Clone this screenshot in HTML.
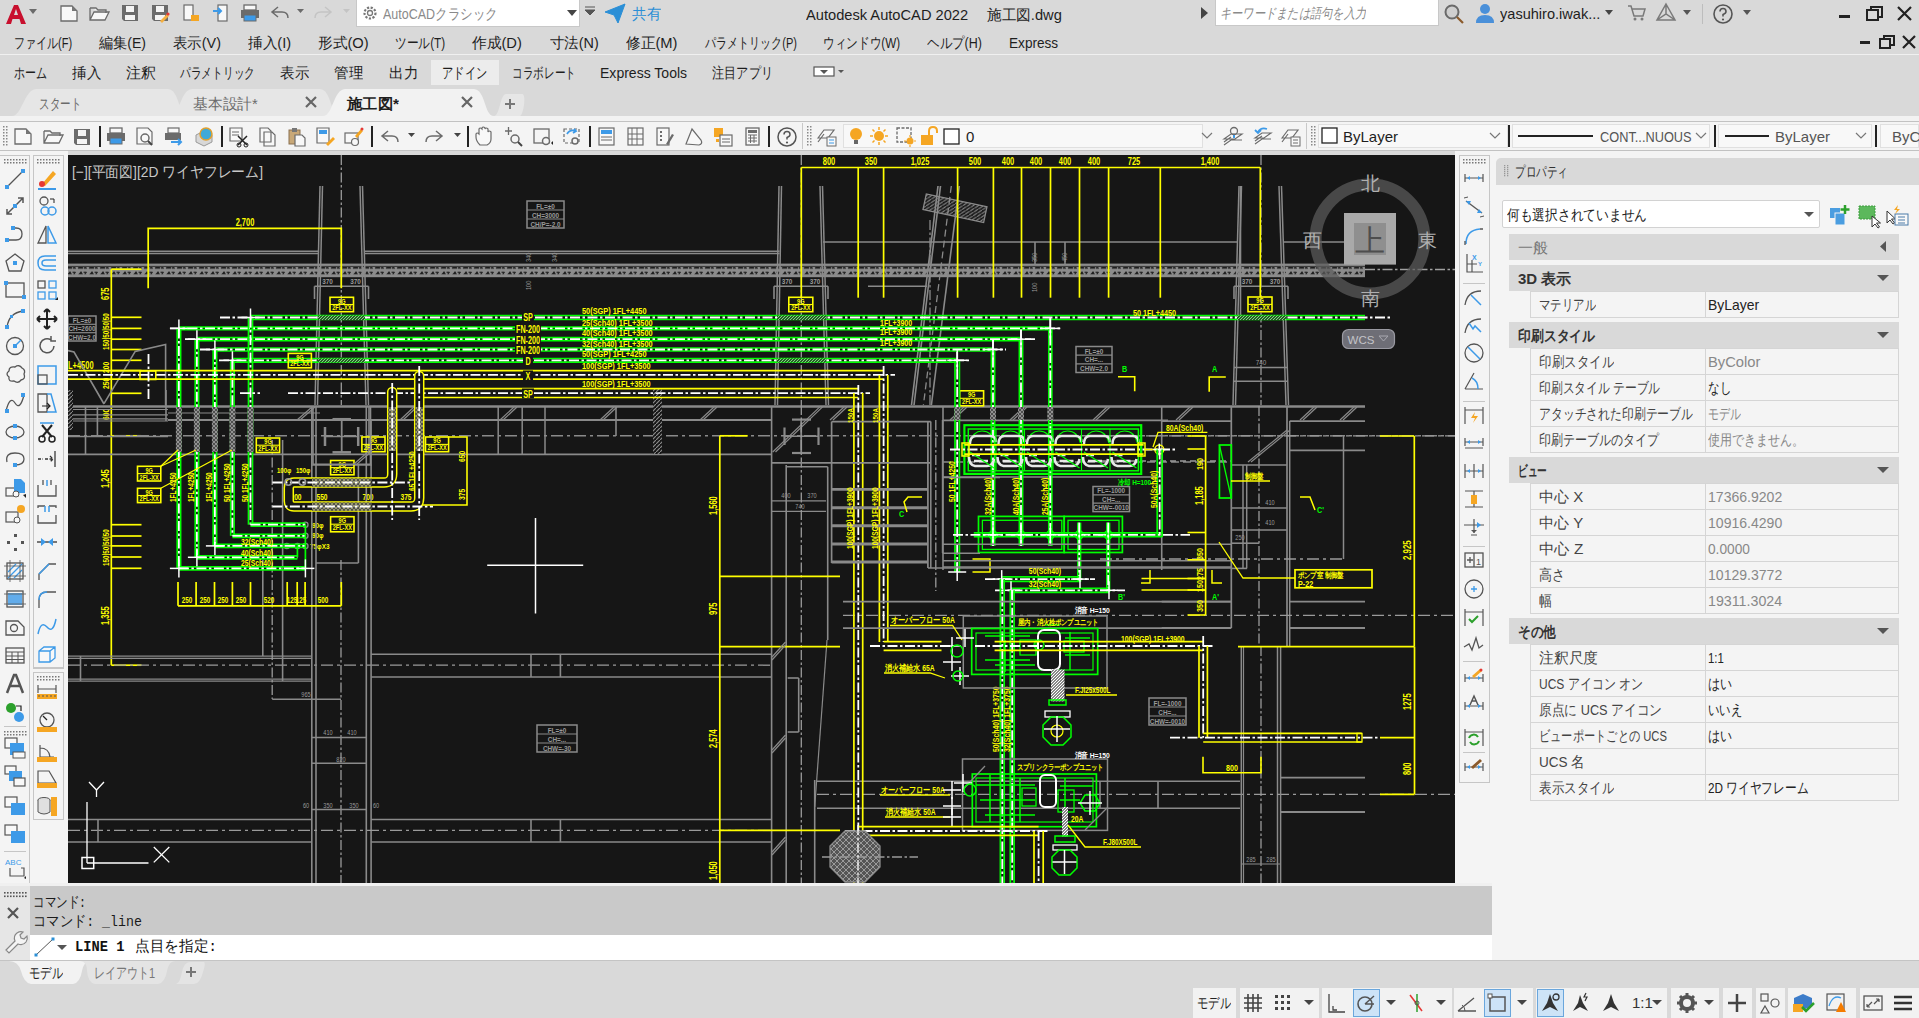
<!DOCTYPE html>
<html><head><meta charset="utf-8">
<style>
*{box-sizing:border-box;margin:0;padding:0}
html,body{width:1919px;height:1018px;overflow:hidden;background:#d9d9d9;font-family:"Liberation Sans",sans-serif;color:#1e1e1e}
.a{position:absolute}
.t{position:absolute;white-space:nowrap;font-size:14px;line-height:16px}
.ft{display:inline-block;transform-origin:0 50%;white-space:nowrap}
svg.i{position:absolute;overflow:visible}
</style></head><body>
<div class="a" style="left:0px;top:0px;width:1919px;height:1018px;background:#d9d9d9;"></div>
<div class="a" style="left:0px;top:54px;width:1919px;height:1px;background:#f0f0f0;"></div>
<div class="a" style="left:0px;top:116px;width:1919px;height:5px;background:#f2f2f2;"></div>
<div class="a" style="left:0px;top:121px;width:1919px;height:30px;background:#f4f4f4;border-top:1px solid #c2c2c2;border-bottom:1px solid #c2c2c2;"></div>
<div class="a" style="left:0px;top:151px;width:68px;height:732px;background:#f4f4f4;"></div>
<div class="a" style="left:0px;top:155px;width:30px;height:728px;border-right:1px solid #c6c6c6;border-top:1px solid #c6c6c6;"></div>
<div class="a" style="left:33px;top:155px;width:31px;height:513px;border:1px solid #c6c6c6;"></div>
<div class="a" style="left:33px;top:672px;width:31px;height:148px;border:1px solid #c6c6c6;"></div>
<div class="a" style="left:1455px;top:151px;width:464px;height:810px;background:#f4f4f4;"></div>
<div class="a" style="left:1459px;top:155px;width:31px;height:628px;border:1px solid #c6c6c6;"></div>
<div class="a" style="left:1496px;top:158px;width:423px;height:27px;background:#d9d9d9;border-radius:5px 0 0 0;"></div>
<div class="a" style="left:0px;top:883px;width:1492px;height:78px;background:#f0f0f0;"></div>
<div class="a" style="left:0px;top:886px;width:30px;height:75px;background:#e6e6e6;"></div>
<div class="a" style="left:30px;top:886px;width:1462px;height:49px;background:#c9c9c9;"></div>
<div class="a" style="left:30px;top:935px;width:1462px;height:25px;background:#ffffff;"></div>
<div class="a" style="left:0px;top:960px;width:1919px;height:1px;background:#c4c4c4;"></div>
<div class="a" style="left:0px;top:961px;width:1919px;height:57px;background:#d9d9d9;"></div>
<svg class="i" style="left:4px;top:3px" width="24" height="22" viewBox="0 0 24 22"><path d="M2,21 L10,2 L14,2 L22,21 L17,21 L15.5,16 L8.5,16 L7,21 Z M10,12 L14,12 L12,6 Z" fill="#c8102e"/></svg>
<svg class="i" style="left:29px;top:9px" width="9" height="6" viewBox="0 0 9 6"><path d="M0,0 h8 l-4,5z" fill="#6b6b6b"/></svg>
<svg class="i" style="left:59px;top:3px" width="20" height="20" viewBox="0 0 20 20"><path d="M2,3 h11 l5,5 v10 h-16z" fill="#f8f8f8" stroke="#6b6b6b" stroke-width="1.3"/><path d="M13,3 v5 h5" fill="#777"/></svg>
<svg class="i" style="left:88px;top:3px" width="22" height="20" viewBox="0 0 22 20"><path d="M2,5 h6 l2,2 h8 v3 M2,5 v12 h15 l4,-8 h-15 l-4,8" fill="#f8f8f8" stroke="#6b6b6b" stroke-width="1.3"/></svg>
<svg class="i" style="left:120px;top:3px" width="20" height="20" viewBox="0 0 20 20"><path d="M2,2 h16 v16 h-14 l-2,-2z" fill="#6b6b6b"/><rect x="6" y="3" width="8" height="6" fill="#f4f4f4"/><rect x="5" y="12" width="10" height="5" fill="#f4f4f4"/></svg>
<svg class="i" style="left:150px;top:3px" width="20" height="20" viewBox="0 0 20 20"><path d="M2,2 h16 v16 h-14 l-2,-2z" fill="#6b6b6b"/><rect x="6" y="3" width="8" height="6" fill="#f4f4f4"/><rect x="5" y="12" width="10" height="5" fill="#f4f4f4"/><path d="M10,18 l7,-7 l2,2 l-7,7z" fill="#f5b041"/><circle cx="18" cy="11" r="1.6" fill="#e53935"/></svg>
<svg class="i" style="left:181px;top:3px" width="20" height="20" viewBox="0 0 20 20"><rect x="3" y="2" width="9" height="15" fill="#f8f8f8" stroke="#6b6b6b" stroke-width="1.2"/><path d="M10,12 h8 v6 h-8z" fill="#f5a623"/></svg>
<svg class="i" style="left:211px;top:3px" width="20" height="20" viewBox="0 0 20 20"><rect x="7" y="2" width="9" height="16" fill="#f8f8f8" stroke="#6b6b6b" stroke-width="1.2"/><path d="M2,8 h8 M7,5 l3,3 l-3,3" fill="none" stroke="#3d9ae8" stroke-width="2"/></svg>
<svg class="i" style="left:239px;top:3px" width="22" height="20" viewBox="0 0 22 20"><rect x="5" y="2" width="12" height="5" fill="#f8f8f8" stroke="#6b6b6b" stroke-width="1.3"/><rect x="2" y="7" width="18" height="8" fill="#6b6b6b"/><rect x="5" y="12" width="12" height="6" fill="#3d9ae8" stroke="#6b6b6b" stroke-width="1"/></svg>
<svg class="i" style="left:270px;top:4px" width="20" height="16" viewBox="0 0 20 16"><path d="M8,3 L2,8 L8,13 M2,8 h10 q6,0 6,6" fill="none" stroke="#6b6b6b" stroke-width="1.5"/></svg>
<svg class="i" style="left:297px;top:9px" width="8" height="6" viewBox="0 0 8 6"><path d="M0,0 h7 l-3.5,4z" fill="#6b6b6b"/></svg>
<svg class="i" style="left:313px;top:4px" width="20" height="16" viewBox="0 0 20 16"><path d="M12,3 L18,8 L12,13 M18,8 h-10 q-6,0 -6,6" fill="none" stroke="#c4c4c4" stroke-width="1.5"/></svg>
<svg class="i" style="left:343px;top:9px" width="8" height="6" viewBox="0 0 8 6"><path d="M0,0 h7 l-3.5,4z" fill="#c4c4c4"/></svg>
<div class="a" style="left:356px;top:0px;width:224px;height:27px;background:#ffffff;border:1px solid #c8c8c8;border-top:none;"></div>
<svg class="i" style="left:361px;top:4px" width="18" height="18" viewBox="0 0 18 18"><circle cx="9" cy="9" r="5.5" fill="none" stroke="#777" stroke-width="2.2" stroke-dasharray="2.2 1.5"/><circle cx="9" cy="9" r="2.5" fill="none" stroke="#777" stroke-width="1.3"/></svg>
<div class="t" style="left:383px;top:5px;font-size:15px;line-height:17px;color:#8a8a8a;"><span class="ft" style="--w:115;transform:scaleX(0.833333)">AutoCADクラシック</span></div>
<svg class="i" style="left:567px;top:10px" width="11" height="7" viewBox="0 0 11 7"><path d="M0,0 h10 l-5,6z" fill="#444"/></svg>
<svg class="i" style="left:585px;top:6px" width="11" height="11" viewBox="0 0 11 11"><path d="M0,1 h10 M0,4 h10 l-5,5z" fill="#555" stroke="#555" stroke-width="1"/></svg>
<svg class="i" style="left:604px;top:3px" width="22" height="20" viewBox="0 0 22 20"><path d="M1,9 L21,1 L14,20 L10,12z M10,12 L21,1" fill="#2b8fd6" stroke="#2b8fd6" stroke-width="1"/></svg>
<div class="t" style="left:632px;top:5px;font-size:15px;line-height:17px;color:#2b8fd6;"><span class="ft" style="--w:29;transform:scaleX(0.966667)">共有</span></div>
<div class="t" style="left:806px;top:6px;font-size:15px;line-height:17px;color:#1e1e1e;"><span class="ft" style="--w:256;transform:scaleX(0.977099)">Autodesk AutoCAD 2022　 施工図.dwg</span></div>
<svg class="i" style="left:1201px;top:7px" width="8" height="12" viewBox="0 0 8 12"><path d="M0,0 l7,6 l-7,6z" fill="#444"/></svg>
<div class="a" style="left:1215px;top:0px;width:224px;height:26px;background:#ffffff;border:1px solid #c8c8c8;border-top:none;"></div>
<div class="t" style="left:1220px;top:5px;font-size:14px;line-height:16px;color:#8a8a8a;font-style:italic;"><span class="ft" style="--w:146;transform:scaleX(0.802198)">キーワードまたは語句を入力</span></div>
<svg class="i" style="left:1443px;top:3px" width="22" height="22" viewBox="0 0 22 22"><circle cx="9" cy="9" r="6.5" fill="#cfcfcf" stroke="#6a6a6a" stroke-width="2"/><path d="M14,14 l6,6" stroke="#8b5a2b" stroke-width="2.2"/></svg>
<svg class="i" style="left:1474px;top:2px" width="22" height="22" viewBox="0 0 22 22"><circle cx="11" cy="7" r="5" fill="#4a90d9"/><path d="M2,21 q0,-8 9,-8 q9,0 9,8z" fill="#4a90d9"/></svg>
<div class="t" style="left:1500px;top:5px;font-size:15px;line-height:17px;color:#1e1e1e;"><span class="ft" style="--w:100;transform:scaleX(0.970874)">yasuhiro.iwak...</span></div>
<svg class="i" style="left:1605px;top:10px" width="9" height="6" viewBox="0 0 9 6"><path d="M0,0 h8 l-4,5z" fill="#444"/></svg>
<svg class="i" style="left:1627px;top:4px" width="20" height="18" viewBox="0 0 20 18"><path d="M1,2 h3 l3,10 h9 l2,-7 h-13" fill="none" stroke="#7a7a7a" stroke-width="1.5"/><circle cx="8" cy="15" r="1.5" fill="#7a7a7a"/><circle cx="15" cy="15" r="1.5" fill="#7a7a7a"/></svg>
<svg class="i" style="left:1655px;top:2px" width="22" height="22" viewBox="0 0 22 22"><path d="M11,2 L20,18 H2z M11,2 v10 M2,18 l9,-6 l9,6" fill="none" stroke="#7a7a7a" stroke-width="1.5"/></svg>
<svg class="i" style="left:1683px;top:10px" width="9" height="6" viewBox="0 0 9 6"><path d="M0,0 h8 l-4,5z" fill="#555"/></svg>
<div class="a" style="left:1702px;top:4px;width:1px;height:20px;background:#bdbdbd;"></div>
<svg class="i" style="left:1712px;top:3px" width="22" height="22" viewBox="0 0 22 22"><circle cx="11" cy="11" r="9" fill="none" stroke="#555" stroke-width="1.6"/><path d="M8,8.5 q0,-3 3,-3 q3,0 3,3 q0,2 -3,3 v2" fill="none" stroke="#555" stroke-width="1.6"/><circle cx="11" cy="16.5" r="1.1" fill="#555"/></svg>
<svg class="i" style="left:1743px;top:10px" width="9" height="6" viewBox="0 0 9 6"><path d="M0,0 h8 l-4,5z" fill="#555"/></svg>
<svg class="i" style="left:1838px;top:12px" width="14" height="6" viewBox="0 0 14 6"><rect x="1" y="3" width="11" height="3" fill="#222"/></svg>
<svg class="i" style="left:1866px;top:5px" width="18" height="16" viewBox="0 0 18 16"><rect x="1" y="5" width="11" height="10" fill="none" stroke="#222" stroke-width="2"/><path d="M5,5 v-3 h11 v10 h-4" fill="none" stroke="#222" stroke-width="2"/></svg>
<svg class="i" style="left:1896px;top:5px" width="17" height="17" viewBox="0 0 17 17"><path d="M2,2 L15,15 M15,2 L2,15" stroke="#222" stroke-width="2.2"/></svg>
<div class="t" style="left:14px;top:34px;font-size:15px;line-height:17px;color:#1e1e1e;"><span class="ft" style="--w:58;transform:scaleX(0.734177)">ファイル(F)</span></div>
<div class="t" style="left:99px;top:34px;font-size:15px;line-height:17px;color:#1e1e1e;"><span class="ft" style="--w:47;transform:scaleX(0.94)">編集(E)</span></div>
<div class="t" style="left:173px;top:34px;font-size:15px;line-height:17px;color:#1e1e1e;"><span class="ft" style="--w:48;transform:scaleX(0.96)">表示(V)</span></div>
<div class="t" style="left:248px;top:34px;font-size:15px;line-height:17px;color:#1e1e1e;"><span class="ft" style="--w:43;transform:scaleX(0.977273)">挿入(I)</span></div>
<div class="t" style="left:318px;top:34px;font-size:15px;line-height:17px;color:#1e1e1e;"><span class="ft" style="--w:51;transform:scaleX(0.980769)">形式(O)</span></div>
<div class="t" style="left:395px;top:34px;font-size:15px;line-height:17px;color:#1e1e1e;"><span class="ft" style="--w:50;transform:scaleX(0.78125)">ツール(T)</span></div>
<div class="t" style="left:472px;top:34px;font-size:15px;line-height:17px;color:#1e1e1e;"><span class="ft" style="--w:50;transform:scaleX(0.980392)">作成(D)</span></div>
<div class="t" style="left:550px;top:34px;font-size:15px;line-height:17px;color:#1e1e1e;"><span class="ft" style="--w:49;transform:scaleX(0.960784)">寸法(N)</span></div>
<div class="t" style="left:626px;top:34px;font-size:15px;line-height:17px;color:#1e1e1e;"><span class="ft" style="--w:52;transform:scaleX(0.981132)">修正(M)</span></div>
<div class="t" style="left:705px;top:34px;font-size:15px;line-height:17px;color:#1e1e1e;"><span class="ft" style="--w:92;transform:scaleX(0.736)">パラメトリック(P)</span></div>
<div class="t" style="left:823px;top:34px;font-size:15px;line-height:17px;color:#1e1e1e;"><span class="ft" style="--w:77;transform:scaleX(0.777778)">ウィンドウ(W)</span></div>
<div class="t" style="left:927px;top:34px;font-size:15px;line-height:17px;color:#1e1e1e;"><span class="ft" style="--w:55;transform:scaleX(0.833333)">ヘルプ(H)</span></div>
<div class="t" style="left:1009px;top:34px;font-size:15px;line-height:17px;color:#1e1e1e;"><span class="ft" style="--w:49;transform:scaleX(0.907407)">Express</span></div>
<svg class="i" style="left:1859px;top:39px" width="13" height="6" viewBox="0 0 13 6"><rect x="1" y="2" width="10" height="3" fill="#222"/></svg>
<svg class="i" style="left:1879px;top:34px" width="17" height="15" viewBox="0 0 17 15"><rect x="1" y="5" width="10" height="9" fill="none" stroke="#222" stroke-width="2"/><path d="M5,5 v-3 h10 v9 h-4" fill="none" stroke="#222" stroke-width="2"/></svg>
<svg class="i" style="left:1901px;top:34px" width="16" height="15" viewBox="0 0 16 15"><path d="M2,2 L14,14 M14,2 L2,14" stroke="#222" stroke-width="2.2"/></svg>
<div class="a" style="left:431px;top:60px;width:68px;height:25px;background:#ececec;"></div>
<div class="t" style="left:14px;top:64px;font-size:15px;line-height:17px;color:#1e1e1e;"><span class="ft" style="--w:33;transform:scaleX(0.733333)">ホーム</span></div>
<div class="t" style="left:72px;top:64px;font-size:15px;line-height:17px;color:#1e1e1e;"><span class="ft" style="--w:29;transform:scaleX(0.966667)">挿入</span></div>
<div class="t" style="left:126px;top:64px;font-size:15px;line-height:17px;color:#1e1e1e;"><span class="ft" style="--w:30;transform:scaleX(1)">注釈</span></div>
<div class="t" style="left:180px;top:64px;font-size:15px;line-height:17px;color:#1e1e1e;"><span class="ft" style="--w:75;transform:scaleX(0.714286)">パラメトリック</span></div>
<div class="t" style="left:280px;top:64px;font-size:15px;line-height:17px;color:#1e1e1e;"><span class="ft" style="--w:29;transform:scaleX(0.966667)">表示</span></div>
<div class="t" style="left:334px;top:64px;font-size:15px;line-height:17px;color:#1e1e1e;"><span class="ft" style="--w:29;transform:scaleX(0.966667)">管理</span></div>
<div class="t" style="left:389px;top:64px;font-size:15px;line-height:17px;color:#1e1e1e;"><span class="ft" style="--w:29;transform:scaleX(0.966667)">出力</span></div>
<div class="t" style="left:442px;top:64px;font-size:15px;line-height:17px;color:#1e1e1e;"><span class="ft" style="--w:45;transform:scaleX(0.75)">アドイン</span></div>
<div class="t" style="left:512px;top:64px;font-size:15px;line-height:17px;color:#1e1e1e;"><span class="ft" style="--w:64;transform:scaleX(0.711111)">コラボレート</span></div>
<div class="t" style="left:600px;top:64px;font-size:15px;line-height:17px;color:#1e1e1e;"><span class="ft" style="--w:87;transform:scaleX(0.935484)">Express Tools</span></div>
<div class="t" style="left:712px;top:64px;font-size:15px;line-height:17px;color:#1e1e1e;"><span class="ft" style="--w:61;transform:scaleX(0.813333)">注目アプリ</span></div>
<svg class="i" style="left:813px;top:66px" width="32" height="12" viewBox="0 0 32 12"><rect x="1" y="1" width="20" height="9" fill="#fff" stroke="#555" stroke-width="1.2"/><path d="M7,4 h8 l-4,4z" fill="#555"/><path d="M25,4 h6 l-3,3z" fill="#555"/></svg>
<svg class="i" style="left:0;top:86px" width="540" height="32" viewBox="0 86 540 32"><path d="M12,116 C22,116 24,90 36,89 L168,89 C180,90 178,116 188,116z" fill="#e6e6e6"/><path d="M170,116 C180,116 180,90 192,89 L320,89 C332,90 330,116 340,116z" fill="#e6e6e6"/><path d="M323,116 C333,116 333,90 345,89 L474,89 C486,90 484,116 494,116z" fill="#f2f2f2"/><path d="M494,116 C500,116 500,94 506,94 L522,94 C527,94 523,116 520,116z" fill="#e6e6e6"/><path d="M306,97 l10,10 M316,97 l-10,10 M462,97 l10,10 M472,97 l-10,10" stroke="#666" stroke-width="2.2"/><path d="M505,104 h10 M510,99 v10" stroke="#777" stroke-width="2"/></svg>
<div class="t" style="left:39px;top:95px;font-size:15px;line-height:17px;color:#6a6a6a;"><span class="ft" style="--w:42;transform:scaleX(0.7)">スタート</span></div>
<div class="t" style="left:193px;top:95px;font-size:15px;line-height:17px;color:#6a6a6a;"><span class="ft" style="--w:65;transform:scaleX(0.984848)">基本設計*</span></div>
<div class="t" style="left:347px;top:95px;font-size:15px;line-height:17px;color:#1e1e1e;font-weight:bold;"><span class="ft" style="--w:52;transform:scaleX(1.01961)">施工図*</span></div>
<svg class="i" style="left:3px;top:126px" width="5" height="20" viewBox="0 0 5 20"><rect x="0" y="0" width="1.5" height="1.5" fill="#888"/><rect x="3" y="0" width="1.5" height="1.5" fill="#888"/><rect x="0" y="3" width="1.5" height="1.5" fill="#888"/><rect x="3" y="3" width="1.5" height="1.5" fill="#888"/><rect x="0" y="6" width="1.5" height="1.5" fill="#888"/><rect x="3" y="6" width="1.5" height="1.5" fill="#888"/><rect x="0" y="9" width="1.5" height="1.5" fill="#888"/><rect x="3" y="9" width="1.5" height="1.5" fill="#888"/><rect x="0" y="12" width="1.5" height="1.5" fill="#888"/><rect x="3" y="12" width="1.5" height="1.5" fill="#888"/><rect x="0" y="15" width="1.5" height="1.5" fill="#888"/><rect x="3" y="15" width="1.5" height="1.5" fill="#888"/><rect x="0" y="18" width="1.5" height="1.5" fill="#888"/><rect x="3" y="18" width="1.5" height="1.5" fill="#888"/></svg>
<svg class="i" style="left:13px;top:126px" width="20" height="20" viewBox="0 0 20 20"><path d="M2,3 h11 l5,5 v10 h-16z" fill="#f8f8f8" stroke="#6b6b6b" stroke-width="1.3"/><path d="M13,3 v5 h5" fill="#777"/></svg>
<svg class="i" style="left:42px;top:126px" width="22" height="20" viewBox="0 0 22 20"><path d="M2,5 h6 l2,2 h8 v3 M2,5 v12 h15 l4,-8 h-15 l-4,8" fill="#f8f8f8" stroke="#6b6b6b" stroke-width="1.3"/></svg>
<svg class="i" style="left:72px;top:127px" width="20" height="20" viewBox="0 0 20 20"><path d="M2,2 h16 v16 h-14 l-2,-2z" fill="#6b6b6b"/><rect x="6" y="3" width="8" height="6" fill="#f4f4f4"/><rect x="5" y="12" width="10" height="5" fill="#f4f4f4"/></svg>
<div class="a" style="left:99px;top:126px;width:2px;height:21px;background:#222;"></div>
<svg class="i" style="left:105px;top:126px" width="22" height="20" viewBox="0 0 22 20"><rect x="5" y="2" width="12" height="5" fill="#f8f8f8" stroke="#6b6b6b" stroke-width="1.3"/><rect x="2" y="7" width="18" height="8" fill="#6b6b6b"/><rect x="5" y="12" width="12" height="6" fill="#3d9ae8" stroke="#6b6b6b" stroke-width="1"/></svg>
<svg class="i" style="left:135px;top:126px" width="22" height="21" viewBox="0 0 22 21"><path d="M2,2 h11 l4,4 v12 h-15z" fill="#f8f8f8" stroke="#6b6b6b" stroke-width="1.2"/><circle cx="10" cy="12" r="4" fill="none" stroke="#6b6b6b" stroke-width="1.5"/><path d="M13,15 l4,4" stroke="#444" stroke-width="2"/></svg>
<svg class="i" style="left:163px;top:126px" width="22" height="21" viewBox="0 0 22 21"><rect x="5" y="2" width="11" height="5" fill="#f8f8f8" stroke="#6b6b6b" stroke-width="1.2"/><rect x="2" y="7" width="16" height="7" fill="#6b6b6b"/><path d="M8,16 h10 M15,13 l3,3 l-3,3" fill="none" stroke="#3d9ae8" stroke-width="2"/></svg>
<svg class="i" style="left:193px;top:126px" width="22" height="21" viewBox="0 0 22 21"><path d="M3,9 l8,-4 l8,4 v7 l-8,4 l-8,-4z" fill="#d8d8d8" stroke="#999" stroke-width="1"/><circle cx="13" cy="8" r="6" fill="#3fa9d8" stroke="#e0a030" stroke-width="1.5"/></svg>
<div class="a" style="left:221px;top:126px;width:2px;height:21px;background:#222;"></div>
<svg class="i" style="left:228px;top:126px" width="22" height="21" viewBox="0 0 22 21"><path d="M2,2 h12 v13 h-12z" fill="#f8f8f8" stroke="#6b6b6b" stroke-width="1.2"/><path d="M4,6 h7 M4,9 h7" stroke="#6b6b6b"/><path d="M10,10 l9,9 M19,10 l-9,9" stroke="#222" stroke-width="1.5"/><circle cx="11" cy="19" r="2" fill="none" stroke="#222"/><circle cx="18" cy="19" r="2" fill="none" stroke="#222"/></svg>
<svg class="i" style="left:257px;top:126px" width="22" height="21" viewBox="0 0 22 21"><path d="M3,2 h8 l3,3 v11 h-11z M7,6 h8 l3,3 v11 h-11z" fill="#f8f8f8" stroke="#6b6b6b" stroke-width="1.2"/></svg>
<svg class="i" style="left:286px;top:126px" width="22" height="21" viewBox="0 0 22 21"><rect x="3" y="4" width="11" height="14" fill="#c8a878" stroke="#8a7050"/><rect x="6" y="2" width="5" height="4" fill="#777"/><path d="M9,9 h7 l3,3 v8 h-10z" fill="#f8f8f8" stroke="#6b6b6b" stroke-width="1.2"/></svg>
<svg class="i" style="left:315px;top:126px" width="22" height="21" viewBox="0 0 22 21"><path d="M2,2 h12 v15 h-12z" fill="#f8f8f8" stroke="#6b6b6b" stroke-width="1.2"/><rect x="4" y="4" width="8" height="4" fill="#3d9ae8"/><path d="M11,18 l7,-7 l2,2 l-7,7z" fill="#f5a623"/></svg>
<svg class="i" style="left:343px;top:126px" width="22" height="21" viewBox="0 0 22 21"><rect x="2" y="7" width="13" height="10" fill="#f8f8f8" stroke="#6b6b6b" stroke-width="1.2"/><circle cx="12" cy="16" r="3.5" fill="#f8f8f8" stroke="#6b6b6b" stroke-width="1.2"/><path d="M12,10 l6,-7 l2,2 l-6,7z" fill="#f5a623"/><circle cx="19" cy="3" r="1.5" fill="#e53935"/></svg>
<div class="a" style="left:371px;top:126px;width:2px;height:21px;background:#222;"></div>
<svg class="i" style="left:380px;top:128px" width="20" height="16" viewBox="0 0 20 16"><path d="M8,3 L2,8 L8,13 M2,8 h10 q6,0 6,6" fill="none" stroke="#6b6b6b" stroke-width="1.5"/></svg>
<svg class="i" style="left:408px;top:133px" width="8" height="6" viewBox="0 0 8 6"><path d="M0,0 h7 l-3.5,4z" fill="#444"/></svg>
<svg class="i" style="left:424px;top:128px" width="20" height="16" viewBox="0 0 20 16"><path d="M12,3 L18,8 L12,13 M18,8 h-10 q-6,0 -6,6" fill="none" stroke="#6b6b6b" stroke-width="1.5"/></svg>
<svg class="i" style="left:454px;top:133px" width="8" height="6" viewBox="0 0 8 6"><path d="M0,0 h7 l-3.5,4z" fill="#444"/></svg>
<div class="a" style="left:467px;top:126px;width:2px;height:21px;background:#222;"></div>
<svg class="i" style="left:474px;top:126px" width="22" height="21" viewBox="0 0 22 21"><path d="M6,19 q-4,-4 -4,-8 v-3 q1,-2 3,0 v-5 q1,-2 3,0 v-1 q1,-2 3,0 v1 q1,-2 3,0 v3 q1,-2 3,0 v7 q0,4 -4,6z" fill="#f8f8f8" stroke="#6b6b6b" stroke-width="1.2"/></svg>
<svg class="i" style="left:503px;top:126px" width="22" height="21" viewBox="0 0 22 21"><path d="M2,5 h7 M5.5,1 v8" stroke="#6b6b6b" stroke-width="1.3"/><circle cx="12" cy="13" r="4" fill="none" stroke="#6b6b6b" stroke-width="1.5"/><path d="M15,16 l4,4" stroke="#444" stroke-width="2"/></svg>
<svg class="i" style="left:532px;top:126px" width="22" height="21" viewBox="0 0 22 21"><rect x="2" y="3" width="15" height="14" fill="none" stroke="#6b6b6b" stroke-width="1.3"/><circle cx="14" cy="15" r="3.5" fill="#f4f4f4" stroke="#6b6b6b" stroke-width="1.5"/><path d="M19,17 l2,2 v-4z" fill="#222"/></svg>
<svg class="i" style="left:561px;top:126px" width="22" height="21" viewBox="0 0 22 21"><rect x="3" y="3" width="15" height="14" fill="none" stroke="#6b6b6b" stroke-width="1.2" stroke-dasharray="3 2"/><path d="M6,8 q3,-5 9,-3 M13,3 l2,2 l-3,2" fill="none" stroke="#3d9ae8" stroke-width="1.8"/><circle cx="14" cy="15" r="3" fill="#f4f4f4" stroke="#6b6b6b" stroke-width="1.5"/></svg>
<div class="a" style="left:589px;top:126px;width:2px;height:21px;background:#222;"></div>
<svg class="i" style="left:596px;top:126px" width="22" height="21" viewBox="0 0 22 21"><rect x="3" y="2" width="15" height="17" fill="#f8f8f8" stroke="#6b6b6b" stroke-width="1.2"/><rect x="5" y="4" width="11" height="4" fill="#3d9ae8"/><path d="M5,11 h11 M5,14 h11" stroke="#6b6b6b"/></svg>
<svg class="i" style="left:625px;top:126px" width="22" height="21" viewBox="0 0 22 21"><rect x="3" y="2" width="15" height="17" fill="#f8f8f8" stroke="#6b6b6b" stroke-width="1.2"/><path d="M7,2 v17 M12,2 v17 M3,8 h15 M3,13 h15" stroke="#6b6b6b"/></svg>
<svg class="i" style="left:654px;top:126px" width="22" height="21" viewBox="0 0 22 21"><rect x="3" y="2" width="12" height="17" fill="#f8f8f8" stroke="#6b6b6b" stroke-width="1.2"/><path d="M6,6 h2 M6,10 h2 M6,14 h2" stroke="#6b6b6b" stroke-width="2"/><path d="M12,18 l6,-10 l2,1 l-6,10z" fill="#6b6b6b"/></svg>
<svg class="i" style="left:683px;top:126px" width="22" height="21" viewBox="0 0 22 21"><path d="M3,18 L9,3 L18,14 q2,4 -2,5z" fill="#f8f8f8" stroke="#6b6b6b" stroke-width="1.2"/></svg>
<svg class="i" style="left:712px;top:126px" width="22" height="21" viewBox="0 0 22 21"><rect x="2" y="2" width="9" height="9" fill="#f5a623"/><rect x="8" y="9" width="12" height="11" fill="#f8f8f8" stroke="#6b6b6b" stroke-width="1.2"/><path d="M10,13 h8 M10,16 h8" stroke="#6b6b6b"/><rect x="4" y="13" width="3" height="3" fill="#f5a623"/></svg>
<svg class="i" style="left:742px;top:126px" width="22" height="21" viewBox="0 0 22 21"><rect x="4" y="2" width="13" height="17" fill="#f8f8f8" stroke="#6b6b6b" stroke-width="1.3"/><rect x="6" y="4" width="9" height="3" fill="#6b6b6b"/><path d="M6,9 h9 M6,12 h9 M6,15 h9 M8.5,9 v8 M12,9 v8" stroke="#6b6b6b"/></svg>
<div class="a" style="left:768px;top:126px;width:2px;height:21px;background:#222;"></div>
<svg class="i" style="left:776px;top:126px" width="22" height="22" viewBox="0 0 22 22"><circle cx="11" cy="11" r="9" fill="none" stroke="#555" stroke-width="1.5"/><path d="M8,8.5 q0,-3 3,-3 q3,0 3,3 q0,2 -3,3 v2" fill="none" stroke="#555" stroke-width="1.5"/><circle cx="11" cy="16.5" r="1.1" fill="#555"/></svg>
<div class="a" style="left:802px;top:123px;width:1px;height:26px;background:#c8c8c8;"></div>
<svg class="i" style="left:807px;top:126px" width="5" height="20" viewBox="0 0 5 20"><rect x="0" y="0" width="1.5" height="1.5" fill="#888"/><rect x="3" y="0" width="1.5" height="1.5" fill="#888"/><rect x="0" y="3" width="1.5" height="1.5" fill="#888"/><rect x="3" y="3" width="1.5" height="1.5" fill="#888"/><rect x="0" y="6" width="1.5" height="1.5" fill="#888"/><rect x="3" y="6" width="1.5" height="1.5" fill="#888"/><rect x="0" y="9" width="1.5" height="1.5" fill="#888"/><rect x="3" y="9" width="1.5" height="1.5" fill="#888"/><rect x="0" y="12" width="1.5" height="1.5" fill="#888"/><rect x="3" y="12" width="1.5" height="1.5" fill="#888"/><rect x="0" y="15" width="1.5" height="1.5" fill="#888"/><rect x="3" y="15" width="1.5" height="1.5" fill="#888"/><rect x="0" y="18" width="1.5" height="1.5" fill="#888"/><rect x="3" y="18" width="1.5" height="1.5" fill="#888"/></svg>
<svg class="i" style="left:816px;top:126px" width="22" height="21" viewBox="0 0 22 21"><path d="M2,12 l6,-8 h10 l-6,8z M2,16 l6,-8" fill="#f8f8f8" stroke="#6b6b6b" stroke-width="1.2"/><rect x="11" y="11" width="9" height="9" fill="#f8f8f8" stroke="#6b6b6b"/><path d="M13,14 h5 M13,17 h5" stroke="#3d9ae8"/></svg>
<div class="a" style="left:843px;top:124px;width:360px;height:24px;background:#f8f8f8;border:1px solid #e0e0e0;"></div>
<svg class="i" style="left:847px;top:126px" width="18" height="21" viewBox="0 0 18 21"><circle cx="9" cy="8" r="6" fill="#f5a623"/><path d="M7,14 h4 v4 h-4z" fill="#666"/></svg>
<svg class="i" style="left:868px;top:126px" width="22" height="21" viewBox="0 0 22 21"><circle cx="11" cy="10" r="5" fill="#f5a623"/><path d="M11,1 v3 M11,16 v3 M2,10 h3 M17,10 h3 M4.5,3.5 l2,2 M15.5,14.5 l2,2 M4.5,16.5 l2,-2 M15.5,5.5 l2,-2" stroke="#f5a623" stroke-width="1.5"/></svg>
<svg class="i" style="left:895px;top:126px" width="22" height="21" viewBox="0 0 22 21"><rect x="2" y="2" width="14" height="14" fill="none" stroke="#6b6b6b" stroke-width="1.3" stroke-dasharray="3 1.5"/><circle cx="15" cy="15" r="3.5" fill="#f5a623"/><path d="M15,9 v2 M15,19 v2 M9,15 h2 M19,15 h2" stroke="#f5a623" stroke-width="1.2"/></svg>
<svg class="i" style="left:919px;top:126px" width="22" height="21" viewBox="0 0 22 21"><rect x="2" y="9" width="12" height="10" fill="#f5a623"/><path d="M10,9 v-4 q0,-4 4,-4 q4,0 4,4 v2" fill="none" stroke="#f5a623" stroke-width="2"/></svg>
<svg class="i" style="left:943px;top:128px" width="18" height="18" viewBox="0 0 18 18"><rect x="1" y="1" width="15" height="15" fill="#fff" stroke="#222" stroke-width="1.3"/></svg>
<div class="t" style="left:966px;top:128px;font-size:15px;line-height:17px;color:#1e1e1e;">0</div>
<svg class="i" style="left:1201px;top:132px" width="12" height="8" viewBox="0 0 12 8"><path d="M1,1 l5,5 l5,-5" fill="none" stroke="#777" stroke-width="1.2"/></svg>
<svg class="i" style="left:1222px;top:126px" width="22" height="21" viewBox="0 0 22 21"><path d="M2,13 l7,-5 h11 l-7,5z M2,16 l7,-5 M2,19 l7,-5 h11" fill="#f8f8f8" stroke="#6b6b6b" stroke-width="1.2"/><circle cx="12" cy="5" r="3.5" fill="none" stroke="#6b6b6b" stroke-width="1.3"/><path d="M12,9 v3" stroke="#3d9ae8" stroke-width="2"/></svg>
<svg class="i" style="left:1251px;top:126px" width="22" height="21" viewBox="0 0 22 21"><path d="M4,12 l7,-5 h9 l-7,5z M4,15 l7,-5 M4,18 l7,-5 h9" fill="#f8f8f8" stroke="#6b6b6b" stroke-width="1.2"/><path d="M7,6 q3,-5 9,-3 M4,4 l3,3 l3,-3" fill="none" stroke="#3d9ae8" stroke-width="1.8"/></svg>
<svg class="i" style="left:1280px;top:126px" width="22" height="21" viewBox="0 0 22 21"><path d="M2,12 l6,-8 h10 l-6,8z M2,16 l6,-8" fill="#f8f8f8" stroke="#6b6b6b" stroke-width="1.2"/><rect x="11" y="11" width="9" height="9" fill="#f8f8f8" stroke="#6b6b6b"/><path d="M13,14 h5 M13,17 h5" stroke="#6b6b6b"/></svg>
<div class="a" style="left:1306px;top:123px;width:1px;height:26px;background:#c8c8c8;"></div>
<svg class="i" style="left:1311px;top:126px" width="5" height="20" viewBox="0 0 5 20"><rect x="0" y="0" width="1.5" height="1.5" fill="#888"/><rect x="3" y="0" width="1.5" height="1.5" fill="#888"/><rect x="0" y="3" width="1.5" height="1.5" fill="#888"/><rect x="3" y="3" width="1.5" height="1.5" fill="#888"/><rect x="0" y="6" width="1.5" height="1.5" fill="#888"/><rect x="3" y="6" width="1.5" height="1.5" fill="#888"/><rect x="0" y="9" width="1.5" height="1.5" fill="#888"/><rect x="3" y="9" width="1.5" height="1.5" fill="#888"/><rect x="0" y="12" width="1.5" height="1.5" fill="#888"/><rect x="3" y="12" width="1.5" height="1.5" fill="#888"/><rect x="0" y="15" width="1.5" height="1.5" fill="#888"/><rect x="3" y="15" width="1.5" height="1.5" fill="#888"/><rect x="0" y="18" width="1.5" height="1.5" fill="#888"/><rect x="3" y="18" width="1.5" height="1.5" fill="#888"/></svg>
<div class="a" style="left:1318px;top:124px;width:190px;height:24px;background:#f8f8f8;border:1px solid #e0e0e0;"></div>
<svg class="i" style="left:1321px;top:127px" width="18" height="18" viewBox="0 0 18 18"><rect x="1" y="1" width="15" height="15" fill="#fff" stroke="#222" stroke-width="1.3"/></svg>
<div class="t" style="left:1343px;top:128px;font-size:15px;line-height:17px;color:#1e1e1e;">ByLayer</div>
<svg class="i" style="left:1489px;top:132px" width="12" height="8" viewBox="0 0 12 8"><path d="M1,1 l5,5 l5,-5" fill="none" stroke="#777" stroke-width="1.2"/></svg>
<div class="a" style="left:1508px;top:125px;width:2px;height:22px;background:#222;"></div>
<div class="a" style="left:1512px;top:124px;width:198px;height:24px;background:#f8f8f8;border:1px solid #e0e0e0;"></div>
<div class="a" style="left:1518px;top:135px;width:75px;height:1.5px;background:#222;"></div>
<div class="t" style="left:1600px;top:128px;font-size:15px;line-height:17px;color:#555;"><span class="ft" style="--w:92;transform:scaleX(0.851852)">CONT...NUOUS</span></div>
<svg class="i" style="left:1695px;top:132px" width="12" height="8" viewBox="0 0 12 8"><path d="M1,1 l5,5 l5,-5" fill="none" stroke="#777" stroke-width="1.2"/></svg>
<div class="a" style="left:1714px;top:125px;width:2px;height:22px;background:#222;"></div>
<div class="a" style="left:1718px;top:124px;width:154px;height:24px;background:#f8f8f8;border:1px solid #e0e0e0;"></div>
<div class="a" style="left:1725px;top:135px;width:44px;height:1.5px;background:#222;"></div>
<div class="t" style="left:1775px;top:128px;font-size:15px;line-height:17px;color:#555;">ByLayer</div>
<svg class="i" style="left:1855px;top:132px" width="12" height="8" viewBox="0 0 12 8"><path d="M1,1 l5,5 l5,-5" fill="none" stroke="#777" stroke-width="1.2"/></svg>
<div class="a" style="left:1875px;top:125px;width:2px;height:22px;background:#222;"></div>
<div class="a" style="left:1880px;top:124px;width:39px;height:24px;background:#f8f8f8;border:1px solid #e0e0e0;"></div>
<div class="t" style="left:1892px;top:128px;font-size:15px;line-height:17px;color:#555;">ByC</div>
<svg class="i" style="left:4px;top:159px" width="22" height="5" viewBox="0 0 22 5"><rect x="0" y="0" width="1.5" height="1.5" fill="#777"/><rect x="0" y="3" width="1.5" height="1.5" fill="#777"/><rect x="3" y="0" width="1.5" height="1.5" fill="#777"/><rect x="3" y="3" width="1.5" height="1.5" fill="#777"/><rect x="6" y="0" width="1.5" height="1.5" fill="#777"/><rect x="6" y="3" width="1.5" height="1.5" fill="#777"/><rect x="9" y="0" width="1.5" height="1.5" fill="#777"/><rect x="9" y="3" width="1.5" height="1.5" fill="#777"/><rect x="12" y="0" width="1.5" height="1.5" fill="#777"/><rect x="12" y="3" width="1.5" height="1.5" fill="#777"/><rect x="15" y="0" width="1.5" height="1.5" fill="#777"/><rect x="15" y="3" width="1.5" height="1.5" fill="#777"/><rect x="18" y="0" width="1.5" height="1.5" fill="#777"/><rect x="18" y="3" width="1.5" height="1.5" fill="#777"/><rect x="21" y="0" width="1.5" height="1.5" fill="#777"/><rect x="21" y="3" width="1.5" height="1.5" fill="#777"/></svg>
<svg class="i" style="left:37px;top:159px" width="22" height="5" viewBox="0 0 22 5"><rect x="0" y="0" width="1.5" height="1.5" fill="#777"/><rect x="0" y="3" width="1.5" height="1.5" fill="#777"/><rect x="3" y="0" width="1.5" height="1.5" fill="#777"/><rect x="3" y="3" width="1.5" height="1.5" fill="#777"/><rect x="6" y="0" width="1.5" height="1.5" fill="#777"/><rect x="6" y="3" width="1.5" height="1.5" fill="#777"/><rect x="9" y="0" width="1.5" height="1.5" fill="#777"/><rect x="9" y="3" width="1.5" height="1.5" fill="#777"/><rect x="12" y="0" width="1.5" height="1.5" fill="#777"/><rect x="12" y="3" width="1.5" height="1.5" fill="#777"/><rect x="15" y="0" width="1.5" height="1.5" fill="#777"/><rect x="15" y="3" width="1.5" height="1.5" fill="#777"/><rect x="18" y="0" width="1.5" height="1.5" fill="#777"/><rect x="18" y="3" width="1.5" height="1.5" fill="#777"/><rect x="21" y="0" width="1.5" height="1.5" fill="#777"/><rect x="21" y="3" width="1.5" height="1.5" fill="#777"/></svg>
<svg class="i" style="left:4px;top:168px" width="22" height="22" viewBox="0 0 22 22"><path d="M3,19 L19,3" stroke="#555" stroke-width="1.3"/><rect x="1" y="17" width="4" height="4" fill="#3d9ae8"/><rect x="17" y="1" width="4" height="4" fill="#3d9ae8"/></svg>
<svg class="i" style="left:4px;top:195px" width="22" height="22" viewBox="0 0 22 22"><path d="M3,19 L19,3 M14,3 h5 v5 M3,14 v5 h5" fill="none" stroke="#555" stroke-width="1.5"/><rect x="9" y="9" width="4" height="4" fill="#3d9ae8"/></svg>
<svg class="i" style="left:4px;top:224px" width="22" height="22" viewBox="0 0 22 22"><path d="M3,16 h9 q6,0 6,-6 q0,-6 -6,-6 h-3" fill="none" stroke="#555" stroke-width="1.3"/><rect x="1" y="14" width="4" height="4" fill="#3d9ae8"/><rect x="7" y="2" width="4" height="4" fill="#3d9ae8"/></svg>
<svg class="i" style="left:4px;top:252px" width="22" height="22" viewBox="0 0 22 22"><path d="M11,2 L20,9 L17,19 H5 L2,9z" fill="none" stroke="#555" stroke-width="1.3"/><rect x="9" y="9" width="4" height="4" fill="#3d9ae8"/></svg>
<svg class="i" style="left:4px;top:279px" width="22" height="22" viewBox="0 0 22 22"><rect x="2" y="4" width="18" height="14" fill="none" stroke="#555" stroke-width="1.3"/><rect x="0" y="2" width="4" height="4" fill="#3d9ae8"/><rect x="18" y="16" width="4" height="4" fill="#3d9ae8"/></svg>
<svg class="i" style="left:4px;top:308px" width="22" height="22" viewBox="0 0 22 22"><path d="M3,19 q2,-14 16,-16" fill="none" stroke="#555" stroke-width="1.3"/><rect x="1" y="17" width="4" height="4" fill="#3d9ae8"/><rect x="17" y="1" width="4" height="4" fill="#3d9ae8"/><rect x="6" y="7" width="3" height="3" fill="#3d9ae8"/></svg>
<svg class="i" style="left:4px;top:335px" width="22" height="22" viewBox="0 0 22 22"><circle cx="11" cy="11" r="8.5" fill="none" stroke="#555" stroke-width="1.3"/><path d="M11,11 l6,-6" stroke="#3d9ae8" stroke-width="1.5"/><rect x="9" y="9" width="4" height="4" fill="#3d9ae8"/></svg>
<svg class="i" style="left:4px;top:364px" width="22" height="22" viewBox="0 0 22 22"><path d="M5,7 q0,-5 6,-4 q4,-3 7,1 q4,2 2,6 q2,5 -3,6 q-3,4 -7,1 q-6,1 -5,-4 q-4,-3 0,-6z" fill="none" stroke="#555" stroke-width="1.3"/></svg>
<svg class="i" style="left:4px;top:392px" width="22" height="22" viewBox="0 0 22 22"><path d="M2,19 q4,-16 9,-8 q5,8 9,-8" fill="none" stroke="#555" stroke-width="1.3"/><rect x="1" y="17" width="4" height="4" fill="#3d9ae8"/><rect x="17" y="1" width="4" height="4" fill="#3d9ae8"/></svg>
<svg class="i" style="left:4px;top:421px" width="22" height="22" viewBox="0 0 22 22"><ellipse cx="11" cy="11" rx="9" ry="6" fill="none" stroke="#555" stroke-width="1.3"/><rect x="9" y="3" width="4" height="4" fill="#3d9ae8"/><rect x="9" y="15" width="4" height="4" fill="#3d9ae8"/></svg>
<svg class="i" style="left:4px;top:448px" width="22" height="22" viewBox="0 0 22 22"><path d="M3,14 q-2,-9 8,-9 q9,0 9,6 q0,6 -9,6" fill="none" stroke="#555" stroke-width="1.3"/><rect x="9" y="15" width="4" height="4" fill="#3d9ae8"/></svg>
<svg class="i" style="left:4px;top:477px" width="22" height="22" viewBox="0 0 22 22"><rect x="2" y="11" width="12" height="8" fill="#f8f8f8" stroke="#555" stroke-width="1.2"/><path d="M10,2 h7 l4,4 v10 h-11z" fill="#3d9ae8"/><circle cx="12" cy="17" r="3" fill="#f8f8f8" stroke="#555"/><path d="M19,18 l3,3 v-4z" fill="#222"/></svg>
<svg class="i" style="left:4px;top:503px" width="22" height="22" viewBox="0 0 22 22"><rect x="2" y="9" width="12" height="10" fill="none" stroke="#555" stroke-width="1.2"/><circle cx="17" cy="6" r="4" fill="#f5a623"/><circle cx="13" cy="17" r="3" fill="#f8f8f8" stroke="#555"/></svg>
<svg class="i" style="left:4px;top:531px" width="22" height="22" viewBox="0 0 22 22"><rect x="10" y="3" width="3" height="3" fill="#555"/><rect x="3" y="10" width="3" height="3" fill="#555"/><rect x="17" y="10" width="3" height="3" fill="#555"/><rect x="10" y="17" width="3" height="3" fill="#555"/></svg>
<svg class="i" style="left:4px;top:560px" width="22" height="22" viewBox="0 0 22 22"><rect x="3" y="3" width="16" height="16" fill="none" stroke="#555" stroke-width="1.3"/><path d="M4,12 l8,-8 M4,18 l14,-14 M10,18 l8,-8" stroke="#3d9ae8" stroke-width="1.3"/><path d="M0,6 h22 M0,16 h22 M6,0 v22 M16,0 v22" stroke="#555" stroke-width="0.8"/></svg>
<svg class="i" style="left:4px;top:588px" width="22" height="22" viewBox="0 0 22 22"><rect x="3" y="3" width="16" height="16" fill="none" stroke="#555" stroke-width="1.3"/><rect x="4" y="5" width="14" height="12" fill="#3d9ae8" opacity="0.8"/><path d="M0,6 h22 M0,16 h22" stroke="#555" stroke-width="0.8"/></svg>
<svg class="i" style="left:4px;top:616px" width="22" height="22" viewBox="0 0 22 22"><path d="M2,5 h12 l6,6 v8 h-18z" fill="none" stroke="#555" stroke-width="1.3"/><circle cx="10" cy="12" r="3.5" fill="none" stroke="#555" stroke-width="1.3"/></svg>
<svg class="i" style="left:4px;top:644px" width="22" height="22" viewBox="0 0 22 22"><rect x="2" y="4" width="18" height="15" fill="none" stroke="#555" stroke-width="1.3"/><path d="M2,8 h18 M2,12 h18 M2,15.5 h18 M8,8 v11 M14,8 v11" stroke="#555" stroke-width="1"/></svg>
<svg class="i" style="left:4px;top:673px" width="22" height="22" viewBox="0 0 22 22"><path d="M3,20 L10,2 h2 L19,20 M6,13 h10" fill="none" stroke="#555" stroke-width="2.5"/></svg>
<svg class="i" style="left:4px;top:701px" width="22" height="22" viewBox="0 0 22 22"><circle cx="7" cy="7" r="5" fill="#2ca02c"/><circle cx="15" cy="16" r="5" fill="#3d9ae8"/><path d="M12,5 h5 v5" fill="none" stroke="#222" stroke-width="1.2"/></svg>
<svg class="i" style="left:36px;top:168px" width="22" height="22" viewBox="0 0 22 22"><path d="M6,16 L17,3 l3,3 L9,18z" fill="#f5a623"/><circle cx="6" cy="16" r="3" fill="#e53935"/><path d="M2,21 h18" stroke="#3d9ae8" stroke-width="2"/></svg>
<svg class="i" style="left:36px;top:195px" width="22" height="22" viewBox="0 0 22 22"><circle cx="8" cy="6" r="4" fill="none" stroke="#555" stroke-width="1.3"/><circle cx="9" cy="16" r="4" fill="none" stroke="#3d9ae8" stroke-width="1.5"/><circle cx="16" cy="16" r="4" fill="none" stroke="#3d9ae8" stroke-width="1.5"/><path d="M14,4 h4 v4" fill="none" stroke="#222"/></svg>
<svg class="i" style="left:36px;top:224px" width="22" height="22" viewBox="0 0 22 22"><path d="M10,2 L2,19 h8z" fill="none" stroke="#555" stroke-width="1.3"/><path d="M12,2 L20,19 h-8z" fill="none" stroke="#3d9ae8" stroke-width="1.5"/></svg>
<svg class="i" style="left:36px;top:252px" width="22" height="22" viewBox="0 0 22 22"><path d="M20,4 h-11 q-7,0 -7,7 q0,7 7,7 h11 M20,8 h-10 q-4,0 -4,3 q0,3 4,3 h10" fill="none" stroke="#3d9ae8" stroke-width="1.5"/></svg>
<svg class="i" style="left:36px;top:279px" width="22" height="22" viewBox="0 0 22 22"><rect x="2" y="2" width="7" height="7" fill="none" stroke="#555" stroke-width="1.3"/><rect x="13" y="2" width="7" height="7" fill="none" stroke="#3d9ae8" stroke-width="1.3"/><rect x="2" y="13" width="7" height="7" fill="none" stroke="#3d9ae8" stroke-width="1.3"/><rect x="13" y="13" width="7" height="7" fill="none" stroke="#3d9ae8" stroke-width="1.3"/><path d="M19,21 l3,-3 v3z" fill="#222"/></svg>
<svg class="i" style="left:36px;top:308px" width="22" height="22" viewBox="0 0 22 22"><path d="M11,1 v20 M1,11 h20 M11,1 l-3,3 M11,1 l3,3 M11,21 l-3,-3 M11,21 l3,-3 M1,11 l3,-3 M1,11 l3,3 M21,11 l-3,-3 M21,11 l-3,3" fill="none" stroke="#222" stroke-width="2"/></svg>
<svg class="i" style="left:36px;top:335px" width="22" height="22" viewBox="0 0 22 22"><path d="M18,11 a7,7 0 1 1 -3,-6 M15,1 v5 h5" fill="none" stroke="#555" stroke-width="1.5"/></svg>
<svg class="i" style="left:36px;top:364px" width="22" height="22" viewBox="0 0 22 22"><rect x="2" y="2" width="18" height="18" fill="none" stroke="#3d9ae8" stroke-width="1.5"/><rect x="2" y="11" width="9" height="9" fill="none" stroke="#555" stroke-width="1.3"/></svg>
<svg class="i" style="left:36px;top:392px" width="22" height="22" viewBox="0 0 22 22"><path d="M2,2 h9 v18 h-9z" fill="none" stroke="#555" stroke-width="1.3"/><path d="M11,2 h4 l5,18 h-9" fill="none" stroke="#3d9ae8" stroke-width="1.5"/><path d="M6,14 h8 M11,11 l3,3 l-3,3" fill="none" stroke="#222" stroke-width="1.2"/></svg>
<svg class="i" style="left:36px;top:421px" width="22" height="22" viewBox="0 0 22 22"><path d="M4,2 h14" stroke="#3d9ae8" stroke-width="1.5"/><path d="M6,4 l10,12 M16,4 l-10,12" stroke="#222" stroke-width="2"/><circle cx="6" cy="18" r="3" fill="none" stroke="#222" stroke-width="1.5"/><circle cx="16" cy="18" r="3" fill="none" stroke="#222" stroke-width="1.5"/></svg>
<svg class="i" style="left:36px;top:448px" width="22" height="22" viewBox="0 0 22 22"><path d="M2,11 h5 M9,11 h8 M14,8 l3,3 l-3,3" fill="none" stroke="#333" stroke-width="1.3" stroke-dasharray="3 1.5"/><path d="M19,3 v16" stroke="#555" stroke-width="1.5"/></svg>
<svg class="i" style="left:36px;top:477px" width="22" height="22" viewBox="0 0 22 22"><path d="M2,8 v11 h18 v-11 M7,8 v-5 M15,8 v-5" fill="none" stroke="#555" stroke-width="1.3"/><path d="M11,3 v6" stroke="#3d9ae8" stroke-width="1.5"/></svg>
<svg class="i" style="left:36px;top:503px" width="22" height="22" viewBox="0 0 22 22"><path d="M2,12 v8 h18 v-8 M2,5 v-2 h7 M13,3 h7 v2" fill="none" stroke="#555" stroke-width="1.3"/><path d="M9,3 v6 M13,3 v6" stroke="#3d9ae8" stroke-width="1.5"/></svg>
<svg class="i" style="left:36px;top:531px" width="22" height="22" viewBox="0 0 22 22"><path d="M1,11 h20" stroke="#222" stroke-width="1.2"/><path d="M5,7 l5,4 l-5,4z M17,7 l-5,4 l5,4z" fill="#3d9ae8"/></svg>
<svg class="i" style="left:36px;top:560px" width="22" height="22" viewBox="0 0 22 22"><path d="M3,20 v-6 l10,-10 h7" fill="none" stroke="#555" stroke-width="1.3"/><path d="M3,14 l10,-10" stroke="#3d9ae8" stroke-width="1.5"/></svg>
<svg class="i" style="left:36px;top:588px" width="22" height="22" viewBox="0 0 22 22"><path d="M3,20 v-8 q0,-8 8,-8 h9" fill="none" stroke="#555" stroke-width="1.3"/><path d="M3,12 q0,-8 8,-8" fill="none" stroke="#3d9ae8" stroke-width="1.5"/></svg>
<svg class="i" style="left:36px;top:616px" width="22" height="22" viewBox="0 0 22 22"><path d="M2,18 q3,-14 9,-7 q6,7 9,-8" fill="none" stroke="#3d9ae8" stroke-width="1.5"/></svg>
<svg class="i" style="left:36px;top:644px" width="22" height="22" viewBox="0 0 22 22"><path d="M3,7 l5,-4 h11 v11 l-5,4 h-11z M3,7 h11 v11 M14,7 l5,-4" fill="#f8f8f8" stroke="#3d9ae8" stroke-width="1.3"/></svg>
<div class="a" style="left:33px;top:668px;width:31px;height:1px;background:#c6c6c6;"></div>
<svg class="i" style="left:37px;top:676px" width="22" height="5" viewBox="0 0 22 5"><rect x="0" y="0" width="1.5" height="1.5" fill="#777"/><rect x="0" y="3" width="1.5" height="1.5" fill="#777"/><rect x="3" y="0" width="1.5" height="1.5" fill="#777"/><rect x="3" y="3" width="1.5" height="1.5" fill="#777"/><rect x="6" y="0" width="1.5" height="1.5" fill="#777"/><rect x="6" y="3" width="1.5" height="1.5" fill="#777"/><rect x="9" y="0" width="1.5" height="1.5" fill="#777"/><rect x="9" y="3" width="1.5" height="1.5" fill="#777"/><rect x="12" y="0" width="1.5" height="1.5" fill="#777"/><rect x="12" y="3" width="1.5" height="1.5" fill="#777"/><rect x="15" y="0" width="1.5" height="1.5" fill="#777"/><rect x="15" y="3" width="1.5" height="1.5" fill="#777"/><rect x="18" y="0" width="1.5" height="1.5" fill="#777"/><rect x="18" y="3" width="1.5" height="1.5" fill="#777"/><rect x="21" y="0" width="1.5" height="1.5" fill="#777"/><rect x="21" y="3" width="1.5" height="1.5" fill="#777"/></svg>
<svg class="i" style="left:36px;top:681px" width="22" height="22" viewBox="0 0 22 22"><path d="M2,8 h18 M2,4 v8 M20,4 v8" stroke="#555" stroke-width="1.2"/><rect x="1" y="13" width="20" height="5" fill="#f5a623"/><path d="M3,14 v2 M7,14 v2 M11,14 v2 M15,14 v2 M19,14 v2" stroke="#555"/></svg>
<svg class="i" style="left:36px;top:711px" width="22" height="22" viewBox="0 0 22 22"><circle cx="11" cy="9" r="7" fill="none" stroke="#555" stroke-width="1.3"/><path d="M11,9 l-4,-4" stroke="#222" stroke-width="1.2"/><rect x="1" y="16" width="20" height="5" fill="#f5a623"/></svg>
<svg class="i" style="left:36px;top:741px" width="22" height="22" viewBox="0 0 22 22"><path d="M4,16 v-12 M4,16 h14 M4,7 q9,0 10,9" fill="none" stroke="#555" stroke-width="1.2"/><rect x="1" y="16" width="20" height="5" fill="#f5a623"/></svg>
<svg class="i" style="left:36px;top:767px" width="22" height="22" viewBox="0 0 22 22"><path d="M2,16 h18 l-7,-12 h-11z" fill="none" stroke="#555" stroke-width="1.2"/><rect x="1" y="16" width="20" height="5" fill="#f5a623"/></svg>
<svg class="i" style="left:36px;top:795px" width="22" height="22" viewBox="0 0 22 22"><ellipse cx="8" cy="5" rx="6" ry="2.5" fill="#ddd" stroke="#555"/><path d="M2,5 v12 q6,4 12,0 v-12" fill="#e0e0e0" stroke="#555"/><rect x="15" y="2" width="6" height="19" fill="#f5a623"/></svg>
<div class="a" style="left:4px;top:726px;width:22px;height:1px;background:#c6c6c6;"></div>
<svg class="i" style="left:4px;top:731px" width="22" height="5" viewBox="0 0 22 5"><rect x="0" y="0" width="1.5" height="1.5" fill="#777"/><rect x="0" y="3" width="1.5" height="1.5" fill="#777"/><rect x="3" y="0" width="1.5" height="1.5" fill="#777"/><rect x="3" y="3" width="1.5" height="1.5" fill="#777"/><rect x="6" y="0" width="1.5" height="1.5" fill="#777"/><rect x="6" y="3" width="1.5" height="1.5" fill="#777"/><rect x="9" y="0" width="1.5" height="1.5" fill="#777"/><rect x="9" y="3" width="1.5" height="1.5" fill="#777"/><rect x="12" y="0" width="1.5" height="1.5" fill="#777"/><rect x="12" y="3" width="1.5" height="1.5" fill="#777"/><rect x="15" y="0" width="1.5" height="1.5" fill="#777"/><rect x="15" y="3" width="1.5" height="1.5" fill="#777"/><rect x="18" y="0" width="1.5" height="1.5" fill="#777"/><rect x="18" y="3" width="1.5" height="1.5" fill="#777"/><rect x="21" y="0" width="1.5" height="1.5" fill="#777"/><rect x="21" y="3" width="1.5" height="1.5" fill="#777"/></svg>
<svg class="i" style="left:4px;top:737px" width="22" height="22" viewBox="0 0 22 22"><rect x="1" y="1" width="12" height="10" fill="#f8f8f8" stroke="#555" stroke-width="1.2"/><rect x="6" y="6" width="14" height="12" fill="#3d9ae8"/><rect x="9" y="15" width="12" height="6" fill="#f8f8f8" stroke="#555"/></svg>
<svg class="i" style="left:4px;top:765px" width="22" height="22" viewBox="0 0 22 22"><rect x="1" y="1" width="11" height="8" fill="#f8f8f8" stroke="#555" stroke-width="1.2"/><rect x="5" y="6" width="13" height="10" fill="#3d9ae8"/><rect x="10" y="13" width="11" height="8" fill="#f8f8f8" stroke="#555" stroke-width="1.2"/></svg>
<svg class="i" style="left:4px;top:795px" width="22" height="22" viewBox="0 0 22 22"><rect x="1" y="2" width="12" height="10" fill="#f8f8f8" stroke="#555" stroke-width="1.2"/><rect x="7" y="8" width="14" height="12" fill="#3d9ae8"/></svg>
<svg class="i" style="left:4px;top:823px" width="22" height="22" viewBox="0 0 22 22"><rect x="1" y="2" width="12" height="10" fill="#f8f8f8" stroke="#555" stroke-width="1.2"/><rect x="7" y="8" width="14" height="12" fill="#3d9ae8"/></svg>
<div class="a" style="left:4px;top:851px;width:22px;height:1px;background:#c6c6c6;"></div>
<svg class="i" style="left:4px;top:857px" width="22" height="22" viewBox="0 0 22 22"><text x="1" y="8" font-size="8" fill="#3d9ae8" font-family="Liberation Sans">ABC</text><path d="M6,11 v8 h14 v-8 h-3" fill="none" stroke="#555" stroke-width="1.2"/><path d="M20,21 l2,-2 v3z" fill="#222"/></svg>
<svg class="i" style="left:1463px;top:159px" width="22" height="5" viewBox="0 0 22 5"><rect x="0" y="0" width="1.5" height="1.5" fill="#777"/><rect x="0" y="3" width="1.5" height="1.5" fill="#777"/><rect x="3" y="0" width="1.5" height="1.5" fill="#777"/><rect x="3" y="3" width="1.5" height="1.5" fill="#777"/><rect x="6" y="0" width="1.5" height="1.5" fill="#777"/><rect x="6" y="3" width="1.5" height="1.5" fill="#777"/><rect x="9" y="0" width="1.5" height="1.5" fill="#777"/><rect x="9" y="3" width="1.5" height="1.5" fill="#777"/><rect x="12" y="0" width="1.5" height="1.5" fill="#777"/><rect x="12" y="3" width="1.5" height="1.5" fill="#777"/><rect x="15" y="0" width="1.5" height="1.5" fill="#777"/><rect x="15" y="3" width="1.5" height="1.5" fill="#777"/><rect x="18" y="0" width="1.5" height="1.5" fill="#777"/><rect x="18" y="3" width="1.5" height="1.5" fill="#777"/><rect x="21" y="0" width="1.5" height="1.5" fill="#777"/><rect x="21" y="3" width="1.5" height="1.5" fill="#777"/></svg>
<svg class="i" style="left:1463px;top:168px" width="22" height="22" viewBox="0 0 22 22"><path d="M2,6 v8 M20,6 v8 M2,10 h18" stroke="#555" stroke-width="1.2"/><path d="M4,10 l3,-2 v4z M18,10 l-3,-2 v4z" fill="#3d9ae8"/></svg>
<svg class="i" style="left:1463px;top:196px" width="22" height="22" viewBox="0 0 22 22"><path d="M3,5 l16,12" stroke="#555" stroke-width="1.3"/><path d="M3,5 l5,0 l-2,4z M19,17 l-5,0 l2,-4z" fill="#3d9ae8"/><path d="M1,2 l4,-1 M17,21 l4,-1" stroke="#555"/></svg>
<svg class="i" style="left:1463px;top:225px" width="22" height="22" viewBox="0 0 22 22"><path d="M3,19 q0,-14 14,-15" fill="none" stroke="#3d9ae8" stroke-width="1.5"/><path d="M2,20 v-4 M20,4 h-3" stroke="#555" stroke-width="1.3"/></svg>
<svg class="i" style="left:1463px;top:252px" width="22" height="22" viewBox="0 0 22 22"><path d="M4,2 v18 h16 M4,12 h10 M9,8 v12" fill="none" stroke="#555" stroke-width="1.2"/><text x="9" y="8" font-size="7" fill="#3d9ae8" font-family="Liberation Sans" font-weight="bold">X</text><text x="15" y="14" font-size="6" fill="#3d9ae8" font-family="Liberation Sans" font-weight="bold">Y</text></svg>
<svg class="i" style="left:1463px;top:287px" width="22" height="22" viewBox="0 0 22 22"><path d="M2,18 q2,-14 16,-14" fill="none" stroke="#555" stroke-width="1.3"/><path d="M8,8 l10,10" stroke="#3d9ae8" stroke-width="1.5"/></svg>
<svg class="i" style="left:1463px;top:315px" width="22" height="22" viewBox="0 0 22 22"><path d="M2,18 q2,-14 16,-14" fill="none" stroke="#555" stroke-width="1.3"/><path d="M6,8 l4,6 l2,-3 l6,6" fill="none" stroke="#3d9ae8" stroke-width="1.5"/></svg>
<svg class="i" style="left:1463px;top:342px" width="22" height="22" viewBox="0 0 22 22"><circle cx="11" cy="11" r="9" fill="none" stroke="#555" stroke-width="1.3"/><path d="M5,5 l12,12" stroke="#3d9ae8" stroke-width="1.5"/></svg>
<svg class="i" style="left:1463px;top:370px" width="22" height="22" viewBox="0 0 22 22"><path d="M2,19 h18 M2,19 l9,-16" fill="none" stroke="#555" stroke-width="1.2"/><path d="M9,8 q6,3 6,11" fill="none" stroke="#3d9ae8" stroke-width="1.5"/></svg>
<svg class="i" style="left:1463px;top:404px" width="22" height="22" viewBox="0 0 22 22"><path d="M2,3 v17 M20,3 v17 M2,6 h18" stroke="#555" stroke-width="1.2"/><path d="M12,8 l-4,6 h4 l-2,5 l5,-7 h-4z" fill="#f5a623"/></svg>
<svg class="i" style="left:1463px;top:432px" width="22" height="22" viewBox="0 0 22 22"><path d="M2,6 v8 M20,6 v8 M2,10 h18" stroke="#555" stroke-width="1.2"/><path d="M4,10 l3,-2 v4z M18,10 l-3,-2 v4z" fill="#3d9ae8"/><path d="M2,16 h18" stroke="#555" stroke-width="1"/></svg>
<svg class="i" style="left:1463px;top:460px" width="22" height="22" viewBox="0 0 22 22"><path d="M2,4 v14 M11,4 v14 M20,4 v14 M2,11 h18" stroke="#555" stroke-width="1.2"/><path d="M4,11 l3,-2 v4z M18,11 l-3,-2 v4z" fill="#3d9ae8"/></svg>
<svg class="i" style="left:1463px;top:488px" width="22" height="22" viewBox="0 0 22 22"><path d="M2,3 h18 M2,19 h18 M11,3 v16" stroke="#555" stroke-width="1.2"/><rect x="8" y="7" width="6" height="9" fill="#f5a623"/></svg>
<svg class="i" style="left:1463px;top:516px" width="22" height="22" viewBox="0 0 22 22"><path d="M1,9 h20 M11,3 v14 M8,19 h6" stroke="#555" stroke-width="1.2"/><path d="M18,9 l-4,-3 v6z" fill="#3d9ae8"/><path d="M11,17 l-3,-3 h6z" fill="#555"/></svg>
<svg class="i" style="left:1463px;top:549px" width="22" height="22" viewBox="0 0 22 22"><rect x="2" y="4" width="18" height="14" fill="none" stroke="#555" stroke-width="1.3"/><path d="M11,4 v14 M4,11 h6 M7,8 v6" stroke="#555" stroke-width="1.3"/><text x="13" y="16" font-size="9" fill="#555" font-family="Liberation Sans">1</text></svg>
<svg class="i" style="left:1463px;top:578px" width="22" height="22" viewBox="0 0 22 22"><circle cx="11" cy="11" r="9" fill="none" stroke="#555" stroke-width="1.3"/><path d="M8,11 h6 M11,8 v6" stroke="#3d9ae8" stroke-width="1.3"/></svg>
<svg class="i" style="left:1463px;top:606px" width="22" height="22" viewBox="0 0 22 22"><path d="M2,3 v17 M20,3 v17 M2,6 h18" stroke="#555" stroke-width="1.2"/><path d="M6,13 l3,3 l6,-6" fill="none" stroke="#2ca02c" stroke-width="2"/></svg>
<svg class="i" style="left:1463px;top:634px" width="22" height="22" viewBox="0 0 22 22"><path d="M1,13 l5,-3 l3,6 l4,-12 l3,10 l4,-3" fill="none" stroke="#555" stroke-width="1.3"/></svg>
<svg class="i" style="left:1463px;top:668px" width="22" height="22" viewBox="0 0 22 22"><path d="M2,6 v8 M20,6 v8 M2,10 h18" stroke="#555" stroke-width="1.2"/><path d="M4,10 l3,-2 v4z M18,10 l-3,-2 v4z" fill="#3d9ae8"/><path d="M9,8 l8,-7 l2,2 l-8,7z" fill="#f5a623"/><circle cx="18" cy="2" r="1.5" fill="#e53935"/></svg>
<svg class="i" style="left:1463px;top:696px" width="22" height="22" viewBox="0 0 22 22"><path d="M2,6 v8 M20,6 v8 M2,10 h18" stroke="#555" stroke-width="1.2"/><path d="M4,10 l3,-2 v4z M18,10 l-3,-2 v4z" fill="#3d9ae8"/><path d="M7,9 l4,-9 l4,9 M9,5 h4" fill="none" stroke="#555" stroke-width="1.5"/></svg>
<svg class="i" style="left:1463px;top:726px" width="22" height="22" viewBox="0 0 22 22"><path d="M2,3 v17 M20,3 v17 M2,6 h18" stroke="#555" stroke-width="1.2"/><path d="M6,12 a5,5 0 0 1 9,-1 M16,15 a5,5 0 0 1 -9,1" fill="none" stroke="#2ca02c" stroke-width="2"/></svg>
<svg class="i" style="left:1463px;top:757px" width="22" height="22" viewBox="0 0 22 22"><path d="M2,6 v8 M20,6 v8 M2,10 h18" stroke="#555" stroke-width="1.2"/><path d="M4,10 l3,-2 v4z M18,10 l-3,-2 v4z" fill="#3d9ae8"/><path d="M8,10 l9,-8 l2,2 l-9,8z" fill="#8b5a2b"/></svg>
<div class="a" style="left:1463px;top:283px;width:22px;height:1px;background:#c6c6c6;"></div>
<div class="a" style="left:1463px;top:401px;width:22px;height:1px;background:#c6c6c6;"></div>
<div class="a" style="left:1463px;top:546px;width:22px;height:1px;background:#c6c6c6;"></div>
<div class="a" style="left:1463px;top:661px;width:22px;height:1px;background:#c6c6c6;"></div>
<div class="a" style="left:1463px;top:752px;width:22px;height:1px;background:#c6c6c6;"></div>
<svg class="i" style="left:1504px;top:165px" width="5" height="12" viewBox="0 0 5 12"><rect x="0" y="0" width="1.3" height="1.3" fill="#999"/><rect x="3" y="0" width="1.3" height="1.3" fill="#999"/><rect x="0" y="2" width="1.3" height="1.3" fill="#999"/><rect x="3" y="2" width="1.3" height="1.3" fill="#999"/><rect x="0" y="4" width="1.3" height="1.3" fill="#999"/><rect x="3" y="4" width="1.3" height="1.3" fill="#999"/><rect x="0" y="6" width="1.3" height="1.3" fill="#999"/><rect x="3" y="6" width="1.3" height="1.3" fill="#999"/><rect x="0" y="8" width="1.3" height="1.3" fill="#999"/><rect x="3" y="8" width="1.3" height="1.3" fill="#999"/><rect x="0" y="10" width="1.3" height="1.3" fill="#999"/><rect x="3" y="10" width="1.3" height="1.3" fill="#999"/></svg>
<div class="t" style="left:1515px;top:163px;font-size:15px;line-height:17px;color:#333;"><span class="ft" style="--w:53;transform:scaleX(0.706667)">プロパティ</span></div>
<div class="a" style="left:1502px;top:200px;width:318px;height:28px;background:#ffffff;border:1px solid #d2d2d2;border-radius:2px;"></div>
<div class="t" style="left:1507px;top:206px;font-size:15px;line-height:17px;color:#222;"><span class="ft" style="--w:140;transform:scaleX(0.848485)">何も選択されていません</span></div>
<svg class="i" style="left:1804px;top:212px" width="12" height="6" viewBox="0 0 12 6"><path d="M0,0 h10 l-5,5z" fill="#555"/></svg>
<svg class="i" style="left:1829px;top:204px" width="22" height="22" viewBox="0 0 22 22"><rect x="1" y="4" width="10" height="10" fill="#4a9de0"/><rect x="6" y="9" width="10" height="12" fill="#4a9de0" stroke="#f4f4f4" stroke-width="1"/><path d="M16,1 v9 M11.5,5.5 h9" stroke="#2ca02c" stroke-width="2.5"/></svg>
<svg class="i" style="left:1858px;top:204px" width="24" height="24" viewBox="0 0 24 24"><rect x="1" y="2" width="16" height="13" fill="#5cb85c" stroke="#3c9c3c" stroke-dasharray="2 1"/><path d="M14,12 l0,11 l3,-3 l3,4 l1.5,-1 l-3,-4 l4,0z" fill="#fff" stroke="#333" stroke-width="1"/></svg>
<svg class="i" style="left:1886px;top:204px" width="24" height="24" viewBox="0 0 24 24"><path d="M1,7 l0,12 l3,-3 l3,4 l1.5,-1 l-3,-4 l4,0z" fill="#fff" stroke="#333" stroke-width="1"/><rect x="9" y="10" width="13" height="11" fill="#f8f8f8" stroke="#4a7aa8"/><path d="M12,13 h7 M12,16 h7 M12,19 h7" stroke="#4a7aa8"/><path d="M12,1 l-4,5 h3 l-2,4 l5,-5 h-3z" fill="#f5a623"/></svg>
<div class="a" style="left:1509px;top:234px;width:390px;height:26px;background:#d9d9d9;"></div>
<div class="t" style="left:1518px;top:239px;font-size:15px;line-height:17px;color:#777;"><span class="ft" style="--w:30;transform:scaleX(1)">一般</span></div>
<svg class="i" style="left:1880px;top:241px" width="7" height="12" viewBox="0 0 7 12"><path d="M6,0 v11 l-6,-5.5z" fill="#555"/></svg>
<div class="a" style="left:1509px;top:265px;width:390px;height:26px;background:#d9d9d9;"></div>
<div class="t" style="left:1518px;top:270px;font-size:15px;line-height:17px;color:#333;font-weight:bold;"><span class="ft" style="--w:53;transform:scaleX(1)">3D 表示</span></div>
<svg class="i" style="left:1877px;top:275px" width="13" height="7" viewBox="0 0 13 7"><path d="M0,0 h12 l-6,6z" fill="#555"/></svg>
<div class="a" style="left:1530px;top:291px;width:369px;height:27px;border:1px solid #d5d5d5;"></div>
<div class="a" style="left:1705px;top:291px;width:1px;height:27px;background:#d5d5d5;"></div>
<div class="t" style="left:1539px;top:296px;font-size:15px;line-height:17px;color:#444;"><span class="ft" style="--w:57;transform:scaleX(0.76)">マテリアル</span></div>
<div class="t" style="left:1708px;top:296px;font-size:15px;line-height:17px;color:#222;"><span class="ft" style="--w:51;transform:scaleX(0.927273)">ByLayer</span></div>
<div class="a" style="left:1509px;top:322px;width:390px;height:26px;background:#d9d9d9;"></div>
<div class="t" style="left:1518px;top:327px;font-size:15px;line-height:17px;color:#333;font-weight:bold;"><span class="ft" style="--w:77;transform:scaleX(0.855556)">印刷スタイル</span></div>
<svg class="i" style="left:1877px;top:332px" width="13" height="7" viewBox="0 0 13 7"><path d="M0,0 h12 l-6,6z" fill="#555"/></svg>
<div class="a" style="left:1530px;top:348px;width:369px;height:27px;border:1px solid #d5d5d5;"></div>
<div class="a" style="left:1705px;top:348px;width:1px;height:27px;background:#d5d5d5;"></div>
<div class="t" style="left:1539px;top:353px;font-size:15px;line-height:17px;color:#444;"><span class="ft" style="--w:75;transform:scaleX(0.833333)">印刷スタイル</span></div>
<div class="t" style="left:1708px;top:353px;font-size:15px;line-height:17px;color:#888;"><span class="ft" style="--w:52;transform:scaleX(0.981132)">ByColor</span></div>
<div class="a" style="left:1530px;top:374px;width:369px;height:27px;border:1px solid #d5d5d5;"></div>
<div class="a" style="left:1705px;top:374px;width:1px;height:27px;background:#d5d5d5;"></div>
<div class="t" style="left:1539px;top:379px;font-size:15px;line-height:17px;color:#444;"><span class="ft" style="--w:121;transform:scaleX(0.785714)">印刷スタイル テーブル</span></div>
<div class="t" style="left:1708px;top:379px;font-size:15px;line-height:17px;color:#222;"><span class="ft" style="--w:23;transform:scaleX(0.766667)">なし</span></div>
<div class="a" style="left:1530px;top:400px;width:369px;height:27px;border:1px solid #d5d5d5;"></div>
<div class="a" style="left:1705px;top:400px;width:1px;height:27px;background:#d5d5d5;"></div>
<div class="t" style="left:1539px;top:405px;font-size:15px;line-height:17px;color:#444;"><span class="ft" style="--w:154;transform:scaleX(0.789744)">アタッチされた印刷テーブル</span></div>
<div class="t" style="left:1708px;top:405px;font-size:15px;line-height:17px;color:#888;"><span class="ft" style="--w:33;transform:scaleX(0.733333)">モデル</span></div>
<div class="a" style="left:1530px;top:426px;width:369px;height:27px;border:1px solid #d5d5d5;"></div>
<div class="a" style="left:1705px;top:426px;width:1px;height:27px;background:#d5d5d5;"></div>
<div class="t" style="left:1539px;top:431px;font-size:15px;line-height:17px;color:#444;"><span class="ft" style="--w:120;transform:scaleX(0.8)">印刷テーブルのタイプ</span></div>
<div class="t" style="left:1708px;top:431px;font-size:15px;line-height:17px;color:#888;"><span class="ft" style="--w:96;transform:scaleX(0.8)">使用できません。</span></div>
<div class="a" style="left:1509px;top:457px;width:390px;height:26px;background:#d9d9d9;"></div>
<div class="t" style="left:1518px;top:462px;font-size:15px;line-height:17px;color:#333;font-weight:bold;"><span class="ft" style="--w:29;transform:scaleX(0.644444)">ビュー</span></div>
<svg class="i" style="left:1877px;top:467px" width="13" height="7" viewBox="0 0 13 7"><path d="M0,0 h12 l-6,6z" fill="#555"/></svg>
<div class="a" style="left:1530px;top:483px;width:369px;height:27px;border:1px solid #d5d5d5;"></div>
<div class="a" style="left:1705px;top:483px;width:1px;height:27px;background:#d5d5d5;"></div>
<div class="t" style="left:1539px;top:488px;font-size:15px;line-height:17px;color:#444;"><span class="ft" style="--w:44;transform:scaleX(1)">中心 X</span></div>
<div class="t" style="left:1708px;top:488px;font-size:15px;line-height:17px;color:#888;"><span class="ft" style="--w:74;transform:scaleX(0.936709)">17366.9202</span></div>
<div class="a" style="left:1530px;top:509px;width:369px;height:27px;border:1px solid #d5d5d5;"></div>
<div class="a" style="left:1705px;top:509px;width:1px;height:27px;background:#d5d5d5;"></div>
<div class="t" style="left:1539px;top:514px;font-size:15px;line-height:17px;color:#444;"><span class="ft" style="--w:44;transform:scaleX(1)">中心 Y</span></div>
<div class="t" style="left:1708px;top:514px;font-size:15px;line-height:17px;color:#888;"><span class="ft" style="--w:74;transform:scaleX(0.936709)">10916.4290</span></div>
<div class="a" style="left:1530px;top:535px;width:369px;height:27px;border:1px solid #d5d5d5;"></div>
<div class="a" style="left:1705px;top:535px;width:1px;height:27px;background:#d5d5d5;"></div>
<div class="t" style="left:1539px;top:540px;font-size:15px;line-height:17px;color:#444;"><span class="ft" style="--w:44;transform:scaleX(1.02326)">中心 Z</span></div>
<div class="t" style="left:1708px;top:540px;font-size:15px;line-height:17px;color:#888;"><span class="ft" style="--w:42;transform:scaleX(0.913043)">0.0000</span></div>
<div class="a" style="left:1530px;top:561px;width:369px;height:27px;border:1px solid #d5d5d5;"></div>
<div class="a" style="left:1705px;top:561px;width:1px;height:27px;background:#d5d5d5;"></div>
<div class="t" style="left:1539px;top:566px;font-size:15px;line-height:17px;color:#444;"><span class="ft" style="--w:26;transform:scaleX(0.866667)">高さ</span></div>
<div class="t" style="left:1708px;top:566px;font-size:15px;line-height:17px;color:#888;"><span class="ft" style="--w:74;transform:scaleX(0.936709)">10129.3772</span></div>
<div class="a" style="left:1530px;top:587px;width:369px;height:27px;border:1px solid #d5d5d5;"></div>
<div class="a" style="left:1705px;top:587px;width:1px;height:27px;background:#d5d5d5;"></div>
<div class="t" style="left:1539px;top:592px;font-size:15px;line-height:17px;color:#444;"><span class="ft" style="--w:13;transform:scaleX(0.866667)">幅</span></div>
<div class="t" style="left:1708px;top:592px;font-size:15px;line-height:17px;color:#888;"><span class="ft" style="--w:74;transform:scaleX(0.948718)">19311.3024</span></div>
<div class="a" style="left:1509px;top:618px;width:390px;height:26px;background:#d9d9d9;"></div>
<div class="t" style="left:1518px;top:623px;font-size:15px;line-height:17px;color:#333;font-weight:bold;"><span class="ft" style="--w:38;transform:scaleX(0.844444)">その他</span></div>
<svg class="i" style="left:1877px;top:628px" width="13" height="7" viewBox="0 0 13 7"><path d="M0,0 h12 l-6,6z" fill="#555"/></svg>
<div class="a" style="left:1530px;top:644px;width:369px;height:27px;border:1px solid #d5d5d5;"></div>
<div class="a" style="left:1705px;top:644px;width:1px;height:27px;background:#d5d5d5;"></div>
<div class="t" style="left:1539px;top:649px;font-size:15px;line-height:17px;color:#444;"><span class="ft" style="--w:59;transform:scaleX(0.983333)">注釈尺度</span></div>
<div class="t" style="left:1708px;top:649px;font-size:15px;line-height:17px;color:#222;"><span class="ft" style="--w:16;transform:scaleX(0.761905)">1:1</span></div>
<div class="a" style="left:1530px;top:670px;width:369px;height:27px;border:1px solid #d5d5d5;"></div>
<div class="a" style="left:1705px;top:670px;width:1px;height:27px;background:#d5d5d5;"></div>
<div class="t" style="left:1539px;top:675px;font-size:15px;line-height:17px;color:#444;"><span class="ft" style="--w:104;transform:scaleX(0.8)">UCS アイコン オン</span></div>
<div class="t" style="left:1708px;top:675px;font-size:15px;line-height:17px;color:#222;"><span class="ft" style="--w:24;transform:scaleX(0.8)">はい</span></div>
<div class="a" style="left:1530px;top:696px;width:369px;height:27px;border:1px solid #d5d5d5;"></div>
<div class="a" style="left:1705px;top:696px;width:1px;height:27px;background:#d5d5d5;"></div>
<div class="t" style="left:1539px;top:701px;font-size:15px;line-height:17px;color:#444;"><span class="ft" style="--w:123;transform:scaleX(0.848276)">原点に UCS アイコン</span></div>
<div class="t" style="left:1708px;top:701px;font-size:15px;line-height:17px;color:#222;"><span class="ft" style="--w:34;transform:scaleX(0.755556)">いいえ</span></div>
<div class="a" style="left:1530px;top:722px;width:369px;height:27px;border:1px solid #d5d5d5;"></div>
<div class="a" style="left:1705px;top:722px;width:1px;height:27px;background:#d5d5d5;"></div>
<div class="t" style="left:1539px;top:727px;font-size:15px;line-height:17px;color:#444;"><span class="ft" style="--w:128;transform:scaleX(0.748538)">ビューポートごとの UCS</span></div>
<div class="t" style="left:1708px;top:727px;font-size:15px;line-height:17px;color:#222;"><span class="ft" style="--w:24;transform:scaleX(0.8)">はい</span></div>
<div class="a" style="left:1530px;top:748px;width:369px;height:27px;border:1px solid #d5d5d5;"></div>
<div class="a" style="left:1705px;top:748px;width:1px;height:27px;background:#d5d5d5;"></div>
<div class="t" style="left:1539px;top:753px;font-size:15px;line-height:17px;color:#444;"><span class="ft" style="--w:46;transform:scaleX(0.901961)">UCS 名</span></div>
<div class="a" style="left:1530px;top:774px;width:369px;height:27px;border:1px solid #d5d5d5;"></div>
<div class="a" style="left:1705px;top:774px;width:1px;height:27px;background:#d5d5d5;"></div>
<div class="t" style="left:1539px;top:779px;font-size:15px;line-height:17px;color:#444;"><span class="ft" style="--w:75;transform:scaleX(0.833333)">表示スタイル</span></div>
<div class="t" style="left:1708px;top:779px;font-size:15px;line-height:17px;color:#222;"><span class="ft" style="--w:100;transform:scaleX(0.78125)">2D ワイヤフレーム</span></div>
<svg class="i" style="left:4px;top:892px" width="22" height="6" viewBox="0 0 22 6"><rect x="0" y="0" width="1.6" height="1.6" fill="#555"/><rect x="0" y="3.5" width="1.6" height="1.6" fill="#555"/><rect x="3" y="0" width="1.6" height="1.6" fill="#555"/><rect x="3" y="3.5" width="1.6" height="1.6" fill="#555"/><rect x="6" y="0" width="1.6" height="1.6" fill="#555"/><rect x="6" y="3.5" width="1.6" height="1.6" fill="#555"/><rect x="9" y="0" width="1.6" height="1.6" fill="#555"/><rect x="9" y="3.5" width="1.6" height="1.6" fill="#555"/><rect x="12" y="0" width="1.6" height="1.6" fill="#555"/><rect x="12" y="3.5" width="1.6" height="1.6" fill="#555"/><rect x="15" y="0" width="1.6" height="1.6" fill="#555"/><rect x="15" y="3.5" width="1.6" height="1.6" fill="#555"/><rect x="18" y="0" width="1.6" height="1.6" fill="#555"/><rect x="18" y="3.5" width="1.6" height="1.6" fill="#555"/><rect x="21" y="0" width="1.6" height="1.6" fill="#555"/><rect x="21" y="3.5" width="1.6" height="1.6" fill="#555"/></svg>
<svg class="i" style="left:7px;top:907px" width="12" height="12" viewBox="0 0 12 12"><path d="M1,1 L11,11 M11,1 L1,11" stroke="#555" stroke-width="2.2"/></svg>
<svg class="i" style="left:3px;top:931px" width="21" height="21" viewBox="0 0 21 21"><path d="M3,19 l9,-9 q-2,-5 2,-8 q3,-2 6,-1 l-3,3 l1,3 l3,1 l3,-3 q1,3 -1,6 q-3,4 -8,2 l-9,9z" fill="#f4f4f4" stroke="#888" stroke-width="1.2"/></svg>
<div class="t" style="left:33px;top:895px;font-size:15px;line-height:17px;color:#1a1a1a;font-family:'Liberation Mono',monospace;"><span class="ft" style="--w:53;transform:scaleX(0.768116)">コマンド:</span></div>
<div class="t" style="left:33px;top:914px;font-size:15px;line-height:17px;color:#1a1a1a;font-family:'Liberation Mono',monospace;"><span class="ft" style="--w:109;transform:scaleX(0.886179)">コマンド: _line</span></div>
<svg class="i" style="left:34px;top:937px" width="34" height="20" viewBox="0 0 34 20"><path d="M2,18 L19,2" stroke="#555" stroke-width="1"/><rect x="0.5" y="16.5" width="3" height="3" fill="#2b8fd6"/><rect x="17.5" y="0.5" width="3" height="3" fill="#2b8fd6"/><path d="M23,8 h10 l-5,5z" fill="#555"/></svg>
<div class="t" style="left:75px;top:939px;font-size:14px;line-height:16px;color:#111;font-family:'Liberation Mono',monospace;"><span class="ft" style="--w:49;transform:scaleX(0.98)"><b>LINE 1</b></span></div>
<div class="t" style="left:135px;top:939px;font-size:15px;line-height:17px;color:#111;font-family:'Liberation Mono',monospace;"><span class="ft" style="--w:82;transform:scaleX(0.97619)">点目を指定:</span></div>
<svg class="i" style="left:0;top:960px" width="220" height="26" viewBox="0 960 220 26"><path d="M9,961 q9,0 12,10 q3,12 10,13 h42 q7,-1 9,-13 q2,-10 8,-10z" fill="#f2f2f2"/><path d="M80,961 q7,0 7,10 q1,12 8,13 h63 q7,-1 9,-13 q2,-10 8,-10z" fill="#e4e4e4"/><path d="M176,984 q4,-1 6,-12 q2,-10 8,-10 h14 q2,0 -1,10 q-3,12 -9,12z" fill="#e4e4e4"/><path d="M186,972 h10 M191,967 v10" stroke="#777" stroke-width="2"/></svg>
<div class="t" style="left:29px;top:964px;font-size:15px;line-height:17px;color:#222;"><span class="ft" style="--w:34;transform:scaleX(0.755556)">モデル</span></div>
<div class="t" style="left:94px;top:964px;font-size:15px;line-height:17px;color:#777;"><span class="ft" style="--w:61;transform:scaleX(0.73494)">レイアウト1</span></div>
<div class="a" style="left:1193px;top:988px;width:43px;height:30px;background:#f2f2f2;"></div>
<div class="a" style="left:1240px;top:988px;width:79px;height:30px;background:#f2f2f2;"></div>
<div class="a" style="left:1322px;top:988px;width:130px;height:30px;background:#f2f2f2;"></div>
<div class="a" style="left:1454px;top:988px;width:79px;height:30px;background:#f2f2f2;"></div>
<div class="a" style="left:1536px;top:988px;width:131px;height:30px;background:#f2f2f2;"></div>
<div class="a" style="left:1671px;top:988px;width:48px;height:30px;background:#f2f2f2;"></div>
<div class="a" style="left:1723px;top:988px;width:29px;height:30px;background:#f2f2f2;"></div>
<div class="a" style="left:1756px;top:988px;width:29px;height:30px;background:#f2f2f2;"></div>
<div class="a" style="left:1788px;top:988px;width:68px;height:30px;background:#f2f2f2;"></div>
<div class="a" style="left:1860px;top:988px;width:59px;height:30px;background:#f2f2f2;"></div>
<div class="a" style="left:1353px;top:989px;width:27px;height:28px;background:#cde3f7;border:1px solid #6aa6dc;"></div>
<div class="a" style="left:1484px;top:989px;width:27px;height:28px;background:#cde3f7;border:1px solid #6aa6dc;"></div>
<div class="a" style="left:1537px;top:989px;width:27px;height:28px;background:#cde3f7;border:1px solid #6aa6dc;"></div>
<div class="t" style="left:1197px;top:994px;font-size:15px;line-height:17px;color:#222;"><span class="ft" style="--w:34;transform:scaleX(0.755556)">モデル</span></div>
<svg class="i" style="left:1242px;top:992px" width="22" height="22" viewBox="0 0 22 22"><path d="M6,2 v18 M11,2 v18 M16,2 v18 M2,6 h18 M2,11 h18 M2,16 h18" stroke="#444" stroke-width="1.6"/></svg>
<svg class="i" style="left:1272px;top:992px" width="22" height="22" viewBox="0 0 22 22"><rect x="3" y="3" width="3" height="3" fill="#444"/><rect x="3" y="9" width="3" height="3" fill="#444"/><rect x="3" y="15" width="3" height="3" fill="#444"/><rect x="9" y="3" width="3" height="3" fill="#444"/><rect x="9" y="9" width="3" height="3" fill="#444"/><rect x="9" y="15" width="3" height="3" fill="#444"/><rect x="15" y="3" width="3" height="3" fill="#444"/><rect x="15" y="9" width="3" height="3" fill="#444"/><rect x="15" y="15" width="3" height="3" fill="#444"/></svg>
<svg class="i" style="left:1302px;top:992px" width="14" height="22" viewBox="0 0 14 22"><path d="M2,8 h10 l-5,5z" fill="#444"/></svg>
<svg class="i" style="left:1325px;top:992px" width="22" height="22" viewBox="0 0 22 22"><path d="M4,2 v18 h16 M8,14 v4 h4" fill="none" stroke="#444" stroke-width="1.3"/></svg>
<svg class="i" style="left:1355px;top:992px" width="22" height="22" viewBox="0 0 22 22"><circle cx="10" cy="12" r="7" fill="none" stroke="#555" stroke-width="1.6"/><path d="M10,12 l9,-8 M10,12 h9" stroke="#555" stroke-width="1.5"/></svg>
<svg class="i" style="left:1384px;top:992px" width="14" height="22" viewBox="0 0 14 22"><path d="M2,8 h10 l-5,5z" fill="#444"/></svg>
<svg class="i" style="left:1406px;top:992px" width="22" height="22" viewBox="0 0 22 22"><path d="M4,3 l12,16" stroke="#e53935" stroke-width="1.5"/><path d="M11,2 v18" stroke="#2ca02c" stroke-width="1.5"/><circle cx="11" cy="11" r="2" fill="none" stroke="#555"/></svg>
<svg class="i" style="left:1434px;top:992px" width="14" height="22" viewBox="0 0 14 22"><path d="M2,8 h10 l-5,5z" fill="#444"/></svg>
<svg class="i" style="left:1456px;top:992px" width="22" height="22" viewBox="0 0 22 22"><path d="M2,19 h18 M2,19 l16,-13" stroke="#555" stroke-width="1.3"/><path d="M9,19 q0,-4 -3,-6" fill="none" stroke="#555"/></svg>
<svg class="i" style="left:1486px;top:992px" width="22" height="22" viewBox="0 0 22 22"><rect x="4" y="5" width="15" height="14" fill="none" stroke="#555" stroke-width="1.5"/><rect x="2" y="2" width="4" height="4" fill="#fff" stroke="#555"/></svg>
<svg class="i" style="left:1515px;top:992px" width="14" height="22" viewBox="0 0 14 22"><path d="M2,8 h10 l-5,5z" fill="#444"/></svg>
<svg class="i" style="left:1539px;top:992px" width="22" height="22" viewBox="0 0 22 22"><path d="M11,2 l3,9 l5,8 l-8,-4 l-8,4 l5,-8z" fill="#333"/><circle cx="17" cy="5" r="3" fill="none" stroke="#333" stroke-width="1.3"/></svg>
<svg class="i" style="left:1570px;top:992px" width="22" height="22" viewBox="0 0 22 22"><path d="M10,3 l3,8 l5,8 l-8,-4 l-7,4 l5,-8z" fill="#333"/><path d="M16,1 l-2,4 h3 l-2,4" fill="none" stroke="#333" stroke-width="1.2"/></svg>
<svg class="i" style="left:1600px;top:992px" width="22" height="22" viewBox="0 0 22 22"><path d="M11,2 l3,9 l5,8 l-8,-4 l-8,4 l5,-8z" fill="#333"/></svg>
<div class="t" style="left:1632px;top:994px;font-size:15px;line-height:17px;color:#333;">1:1</div>
<svg class="i" style="left:1650px;top:992px" width="14" height="22" viewBox="0 0 14 22"><path d="M2,8 h10 l-5,5z" fill="#444"/></svg>
<svg class="i" style="left:1676px;top:992px" width="22" height="22" viewBox="0 0 22 22"><circle cx="11" cy="11" r="6" fill="none" stroke="#555" stroke-width="4"/><path d="M11,1 v4 M11,17 v4 M1,11 h4 M17,11 h4 M4,4 l3,3 M15,15 l3,3 M4,18 l3,-3 M15,7 l3,-3" stroke="#555" stroke-width="3"/></svg>
<svg class="i" style="left:1702px;top:992px" width="14" height="22" viewBox="0 0 14 22"><path d="M2,8 h10 l-5,5z" fill="#444"/></svg>
<svg class="i" style="left:1726px;top:992px" width="22" height="22" viewBox="0 0 22 22"><path d="M11,2 v18 M2,11 h18" stroke="#444" stroke-width="2.5"/></svg>
<svg class="i" style="left:1759px;top:992px" width="22" height="22" viewBox="0 0 22 22"><rect x="2" y="2" width="7" height="7" fill="none" stroke="#555" stroke-width="1.2"/><circle cx="16" cy="11" r="4" fill="none" stroke="#555" stroke-width="1.2"/><path d="M6,14 l4,7 h-8z" fill="none" stroke="#555" stroke-width="1.2"/></svg>
<svg class="i" style="left:1792px;top:992px" width="24" height="22" viewBox="0 0 24 22"><path d="M2,6 l9,-4 l9,4 v8 l-9,4 l-9,-4z" fill="#3d7cc9"/><rect x="1" y="12" width="10" height="8" fill="#f5a623"/><path d="M10,15 l4,4 l8,-8" fill="none" stroke="#2ca02c" stroke-width="2.5"/></svg>
<svg class="i" style="left:1825px;top:992px" width="22" height="22" viewBox="0 0 22 22"><rect x="2" y="2" width="17" height="16" fill="none" stroke="#555" stroke-width="1.2"/><path d="M4,14 q4,-12 12,-8" fill="none" stroke="#3d9ae8" stroke-width="1.3"/><path d="M16,10 l5,10 h-10z" fill="#f57c00"/></svg>
<svg class="i" style="left:1862px;top:992px" width="22" height="22" viewBox="0 0 22 22"><rect x="2" y="4" width="18" height="14" fill="none" stroke="#555" stroke-width="1.3"/><path d="M5,15 l5,-5 M5,15 v-3 M5,15 h3 M17,7 l-5,5 M17,7 v3 M17,7 h-3" fill="none" stroke="#555" stroke-width="1.2"/></svg>
<svg class="i" style="left:1892px;top:992px" width="22" height="22" viewBox="0 0 22 22"><path d="M2,5 h18 M2,11 h18 M2,17 h18" stroke="#333" stroke-width="2.5"/></svg>
<div class="a" style="left:68px;top:155px;width:1387px;height:728px;background:#161616;overflow:hidden">
<svg width="1387" height="728" viewBox="68 155 1387 728" style="position:absolute;left:0;top:0;font-family:'Liberation Sans',sans-serif">
<defs>
<pattern id="zz" width="11" height="7.3" patternUnits="userSpaceOnUse"><rect width="11" height="7.3" fill="#8c8c8c"/><path d="M1,5.5 L4,1.5 L6,5.5z M6.5,2 h3 l-2.5,3.5 h3" fill="#1e1e1e" stroke="#1e1e1e" stroke-width="0.9"/></pattern>
<pattern id="hh" width="4" height="4" patternUnits="userSpaceOnUse"><rect width="4" height="4" fill="#161616"/><path d="M0,4 L4,0" stroke="#8a8a8a" stroke-width="1.2"/></pattern>
<pattern id="hg" width="4" height="4" patternUnits="userSpaceOnUse"><rect width="4" height="4" fill="#505050"/><path d="M0,4 L4,0 M0,0 L4,4" stroke="#9a9a9a" stroke-width="0.9"/></pattern>
<pattern id="hy" width="4" height="4" patternUnits="userSpaceOnUse"><rect width="4" height="4" fill="#505050"/><path d="M0,4 L4,0 M0,0 L4,4" stroke="#a0a070" stroke-width="0.9"/></pattern>
<pattern id="hw" width="3" height="3" patternUnits="userSpaceOnUse"><rect width="3" height="3" fill="#888"/><path d="M0,3 L3,0" stroke="#fff" stroke-width="1"/></pattern>
<pattern id="hc" width="6" height="6" patternUnits="userSpaceOnUse"><rect width="6" height="6" fill="#555"/><path d="M0,6 L6,0 M0,0 L6,6" stroke="#9a9a9a" stroke-width="1"/></pattern>
<pattern id="hgr" width="3" height="3" patternUnits="userSpaceOnUse"><rect width="3" height="3" fill="#2a5a2a"/><path d="M0,3 L3,0" stroke="#7fdf7f" stroke-width="1"/></pattern>
</defs>
<line x1="68" y1="251.3" x2="319" y2="251.3" stroke="#8a8a8a" stroke-width="1.6"/>
<line x1="365" y1="251.3" x2="779.5" y2="251.3" stroke="#8a8a8a" stroke-width="1.6"/>
<line x1="68" y1="253.5" x2="319" y2="253.5" stroke="#8a8a8a" stroke-width="1.6"/>
<line x1="365" y1="253.5" x2="779.5" y2="253.5" stroke="#8a8a8a" stroke-width="1.6"/>
<line x1="823" y1="242" x2="1238" y2="242" stroke="#8a8a8a" stroke-width="1.6"/>
<line x1="1283" y1="242" x2="1361" y2="242" stroke="#8a8a8a" stroke-width="1.6"/>
<rect x="68" y="263.6" width="1297" height="13.6" fill="#8c8c8c"/>
<line x1="68" y1="266.4" x2="1365" y2="266.4" stroke="#2a2a2a" stroke-width="0.9"/>
<rect x="68" y="267" width="1297" height="7.3" fill="url(#zz)"/>
<line x1="1365" y1="269.5" x2="1455" y2="269.5" stroke="#a0a0a0" stroke-width="1.5" stroke-dasharray="10 2.5 2.5 2.5"/>
<line x1="320" y1="186" x2="315" y2="405" stroke="#8a8a8a" stroke-width="1.5"/>
<line x1="322.5" y1="186" x2="317.5" y2="405" stroke="#8a8a8a" stroke-width="1.5"/>
<line x1="360" y1="186" x2="366" y2="405" stroke="#8a8a8a" stroke-width="1.5"/>
<line x1="362.5" y1="186" x2="368.5" y2="405" stroke="#8a8a8a" stroke-width="1.5"/>
<line x1="779" y1="186" x2="775" y2="405" stroke="#8a8a8a" stroke-width="1.5"/>
<line x1="781.5" y1="186" x2="777.5" y2="405" stroke="#8a8a8a" stroke-width="1.5"/>
<line x1="820" y1="186" x2="826" y2="405" stroke="#8a8a8a" stroke-width="1.5"/>
<line x1="822.5" y1="186" x2="828.5" y2="405" stroke="#8a8a8a" stroke-width="1.5"/>
<line x1="1239" y1="186" x2="1233" y2="405" stroke="#8a8a8a" stroke-width="1.5"/>
<line x1="1241.5" y1="186" x2="1235.5" y2="405" stroke="#8a8a8a" stroke-width="1.5"/>
<line x1="1279" y1="186" x2="1286" y2="405" stroke="#8a8a8a" stroke-width="1.5"/>
<line x1="1281.5" y1="186" x2="1288.5" y2="405" stroke="#8a8a8a" stroke-width="1.5"/>
<line x1="341.3" y1="155" x2="341.3" y2="405" stroke="#9a9a9a" stroke-width="1.3" stroke-dasharray="10 2.5 2.5 2.5"/>
<line x1="801.3" y1="155" x2="801.3" y2="405" stroke="#9a9a9a" stroke-width="1.3" stroke-dasharray="10 2.5 2.5 2.5"/>
<line x1="1261" y1="155" x2="1261" y2="405" stroke="#9a9a9a" stroke-width="1.3" stroke-dasharray="10 2.5 2.5 2.5"/>
<line x1="314.5" y1="286.3" x2="368.5" y2="286.3" stroke="#8a8a8a" stroke-width="1.6"/>
<line x1="314.5" y1="286.3" x2="314.5" y2="299" stroke="#8a8a8a" stroke-width="1.6"/>
<line x1="368.5" y1="286.3" x2="368.5" y2="299" stroke="#8a8a8a" stroke-width="1.6"/>
<text transform="translate(327.5,284) scale(0.8,1)" fill="#9a9a9a" font-size="8" text-anchor="middle" font-weight="bold">370</text>
<text transform="translate(355.5,284) scale(0.8,1)" fill="#9a9a9a" font-size="8" text-anchor="middle" font-weight="bold">370</text>
<line x1="774" y1="286.3" x2="828" y2="286.3" stroke="#8a8a8a" stroke-width="1.6"/>
<line x1="774" y1="286.3" x2="774" y2="299" stroke="#8a8a8a" stroke-width="1.6"/>
<line x1="828" y1="286.3" x2="828" y2="299" stroke="#8a8a8a" stroke-width="1.6"/>
<text transform="translate(787,284) scale(0.8,1)" fill="#9a9a9a" font-size="8" text-anchor="middle" font-weight="bold">370</text>
<text transform="translate(815,284) scale(0.8,1)" fill="#9a9a9a" font-size="8" text-anchor="middle" font-weight="bold">370</text>
<line x1="1234" y1="286.3" x2="1288" y2="286.3" stroke="#8a8a8a" stroke-width="1.6"/>
<line x1="1234" y1="286.3" x2="1234" y2="299" stroke="#8a8a8a" stroke-width="1.6"/>
<line x1="1288" y1="286.3" x2="1288" y2="299" stroke="#8a8a8a" stroke-width="1.6"/>
<text transform="translate(1247,284) scale(0.8,1)" fill="#9a9a9a" font-size="8" text-anchor="middle" font-weight="bold">370</text>
<text transform="translate(1275,284) scale(0.8,1)" fill="#9a9a9a" font-size="8" text-anchor="middle" font-weight="bold">370</text>
<rect x="527" y="201" width="37" height="27" fill="none" stroke="#8a8a8a" stroke-width="1.5"/>
<line x1="527" y1="210" x2="564" y2="210" stroke="#8a8a8a" stroke-width="1.2"/>
<line x1="527" y1="219" x2="564" y2="219" stroke="#8a8a8a" stroke-width="1.2"/>
<text transform="translate(545.5,208.5) scale(0.8,1)" fill="#9a9a9a" font-size="8" text-anchor="middle" font-weight="bold">FL=±0</text>
<text transform="translate(545.5,217.5) scale(0.8,1)" fill="#9a9a9a" font-size="8" text-anchor="middle" font-weight="bold">CH=3000</text>
<text transform="translate(545.5,226.5) scale(0.8,1)" fill="#9a9a9a" font-size="8" text-anchor="middle" font-weight="bold">CH/P=-2.0</text>
<rect x="68" y="316" width="28" height="25" fill="none" stroke="#8a8a8a" stroke-width="1.5"/>
<line x1="68" y1="324.3" x2="96" y2="324.3" stroke="#8a8a8a" stroke-width="1.2"/>
<line x1="68" y1="332.7" x2="96" y2="332.7" stroke="#8a8a8a" stroke-width="1.2"/>
<text transform="translate(82,322.8) scale(0.8,1)" fill="#9a9a9a" font-size="8" text-anchor="middle" font-weight="bold">FL=±0</text>
<text transform="translate(82,331.2) scale(0.8,1)" fill="#9a9a9a" font-size="8" text-anchor="middle" font-weight="bold">CH=2600</text>
<text transform="translate(82,339.5) scale(0.8,1)" fill="#9a9a9a" font-size="8" text-anchor="middle" font-weight="bold">CHW=2.0</text>
<rect x="1076" y="346.5" width="36" height="26" fill="none" stroke="#8a8a8a" stroke-width="1.5"/>
<line x1="1076" y1="355.2" x2="1112" y2="355.2" stroke="#8a8a8a" stroke-width="1.2"/>
<line x1="1076" y1="363.8" x2="1112" y2="363.8" stroke="#8a8a8a" stroke-width="1.2"/>
<text transform="translate(1094,353.7) scale(0.8,1)" fill="#9a9a9a" font-size="8" text-anchor="middle" font-weight="bold">FL=±0</text>
<text transform="translate(1094,362.3) scale(0.8,1)" fill="#9a9a9a" font-size="8" text-anchor="middle" font-weight="bold">CH=...</text>
<text transform="translate(1094,371) scale(0.8,1)" fill="#9a9a9a" font-size="8" text-anchor="middle" font-weight="bold">CHW=2.0</text>
<rect x="1093" y="486.5" width="36.5" height="25.1" fill="none" stroke="#8a8a8a" stroke-width="1.5"/>
<line x1="1093" y1="494.9" x2="1129.5" y2="494.9" stroke="#8a8a8a" stroke-width="1.2"/>
<line x1="1093" y1="503.2" x2="1129.5" y2="503.2" stroke="#8a8a8a" stroke-width="1.2"/>
<text transform="translate(1111.2,493.4) scale(0.8,1)" fill="#9a9a9a" font-size="8" text-anchor="middle" font-weight="bold">FL=-1000</text>
<text transform="translate(1111.2,501.7) scale(0.8,1)" fill="#9a9a9a" font-size="8" text-anchor="middle" font-weight="bold">CH=...</text>
<text transform="translate(1111.2,510.1) scale(0.8,1)" fill="#9a9a9a" font-size="8" text-anchor="middle" font-weight="bold">CHW=-0010</text>
<rect x="537" y="725" width="40" height="27" fill="none" stroke="#8a8a8a" stroke-width="1.5"/>
<line x1="537" y1="734" x2="577" y2="734" stroke="#8a8a8a" stroke-width="1.2"/>
<line x1="537" y1="743" x2="577" y2="743" stroke="#8a8a8a" stroke-width="1.2"/>
<text transform="translate(557,732.5) scale(0.8,1)" fill="#9a9a9a" font-size="8" text-anchor="middle" font-weight="bold">FL=±0</text>
<text transform="translate(557,741.5) scale(0.8,1)" fill="#9a9a9a" font-size="8" text-anchor="middle" font-weight="bold">CH=...</text>
<text transform="translate(557,750.5) scale(0.8,1)" fill="#9a9a9a" font-size="8" text-anchor="middle" font-weight="bold">CHW=-30</text>
<rect x="1149" y="698" width="37" height="27" fill="none" stroke="#8a8a8a" stroke-width="1.5"/>
<line x1="1149" y1="707" x2="1186" y2="707" stroke="#8a8a8a" stroke-width="1.2"/>
<line x1="1149" y1="716" x2="1186" y2="716" stroke="#8a8a8a" stroke-width="1.2"/>
<text transform="translate(1167.5,705.5) scale(0.8,1)" fill="#9a9a9a" font-size="8" text-anchor="middle" font-weight="bold">FL=-1000</text>
<text transform="translate(1167.5,714.5) scale(0.8,1)" fill="#9a9a9a" font-size="8" text-anchor="middle" font-weight="bold">CH=...</text>
<text transform="translate(1167.5,723.5) scale(0.8,1)" fill="#9a9a9a" font-size="8" text-anchor="middle" font-weight="bold">CHW=-0010</text>
<g transform="translate(954,208) rotate(12)"><rect x="-30" y="-8" width="62" height="16" fill="url(#hh)" stroke="#8a8a8a" stroke-width="1.3"/></g>
<line x1="938" y1="186" x2="911.5" y2="405" stroke="#8a8a8a" stroke-width="1.6"/>
<line x1="940.5" y1="186" x2="914" y2="405" stroke="#8a8a8a" stroke-width="1.6"/>
<line x1="959.3" y1="186" x2="931.4" y2="405" stroke="#8a8a8a" stroke-width="1.6"/>
<line x1="930" y1="220" x2="930" y2="405" stroke="#8a8a8a" stroke-width="1.3" stroke-dasharray="10 2.5 2.5 2.5"/>
<line x1="951.3" y1="186" x2="923.4" y2="405" stroke="#8a8a8a" stroke-width="1.3" stroke-dasharray="7 4"/>
<line x1="1240.5" y1="186" x2="1240.5" y2="320" stroke="#8a8a8a" stroke-width="1.6"/>
<line x1="1035" y1="242" x2="1035" y2="265" stroke="#8a8a8a" stroke-width="1.6"/>
<line x1="1065" y1="242" x2="1065" y2="265" stroke="#8a8a8a" stroke-width="1.6"/>
<line x1="868" y1="286.3" x2="927" y2="286.3" stroke="#8a8a8a" stroke-width="1.6"/>
<line x1="801.3" y1="167.5" x2="1260.3" y2="167.5" stroke="#ffff00" stroke-width="1.7"/>
<line x1="801.3" y1="167.5" x2="801.3" y2="297.7" stroke="#ffff00" stroke-width="1.7"/>
<line x1="858.2" y1="167.5" x2="858.2" y2="297.7" stroke="#ffff00" stroke-width="1.7"/>
<line x1="883.6" y1="167.5" x2="883.6" y2="297.7" stroke="#ffff00" stroke-width="1.7"/>
<line x1="957.6" y1="167.5" x2="957.6" y2="297.7" stroke="#ffff00" stroke-width="1.7"/>
<line x1="993.4" y1="167.5" x2="993.4" y2="297.7" stroke="#ffff00" stroke-width="1.7"/>
<line x1="1021.5" y1="167.5" x2="1021.5" y2="297.7" stroke="#ffff00" stroke-width="1.7"/>
<line x1="1050.5" y1="167.5" x2="1050.5" y2="297.7" stroke="#ffff00" stroke-width="1.7"/>
<line x1="1079.5" y1="167.5" x2="1079.5" y2="297.7" stroke="#ffff00" stroke-width="1.7"/>
<line x1="1108.6" y1="167.5" x2="1108.6" y2="297.7" stroke="#ffff00" stroke-width="1.7"/>
<line x1="1160.3" y1="167.5" x2="1160.3" y2="297.7" stroke="#ffff00" stroke-width="1.7"/>
<line x1="1260.3" y1="167.5" x2="1260.3" y2="297" stroke="#ffff00" stroke-width="1.7"/>
<text transform="translate(829,165) scale(0.75,1)" fill="#ffff00" font-size="10" text-anchor="middle" font-weight="bold">800</text>
<text transform="translate(871,165) scale(0.75,1)" fill="#ffff00" font-size="10" text-anchor="middle" font-weight="bold">350</text>
<text transform="translate(920,165) scale(0.75,1)" fill="#ffff00" font-size="10" text-anchor="middle" font-weight="bold">1,025</text>
<text transform="translate(975,165) scale(0.75,1)" fill="#ffff00" font-size="10" text-anchor="middle" font-weight="bold">500</text>
<text transform="translate(1008,165) scale(0.75,1)" fill="#ffff00" font-size="10" text-anchor="middle" font-weight="bold">400</text>
<text transform="translate(1036,165) scale(0.75,1)" fill="#ffff00" font-size="10" text-anchor="middle" font-weight="bold">400</text>
<text transform="translate(1065,165) scale(0.75,1)" fill="#ffff00" font-size="10" text-anchor="middle" font-weight="bold">400</text>
<text transform="translate(1094,165) scale(0.75,1)" fill="#ffff00" font-size="10" text-anchor="middle" font-weight="bold">400</text>
<text transform="translate(1134,165) scale(0.75,1)" fill="#ffff00" font-size="10" text-anchor="middle" font-weight="bold">725</text>
<text transform="translate(1210,165) scale(0.75,1)" fill="#ffff00" font-size="10" text-anchor="middle" font-weight="bold">1,400</text>
<polyline points="148.2,288.3 148.2,228.3 341.3,228.3 341.3,288.3" fill="none" stroke="#ffff00" stroke-width="1.7"/>
<text transform="translate(245,226) scale(0.75,1)" fill="#ffff00" font-size="10" text-anchor="middle" font-weight="bold">2,700</text>
<line x1="111.3" y1="269.2" x2="111.3" y2="665.2" stroke="#ffff00" stroke-width="1.7"/>
<line x1="111.3" y1="269.2" x2="141.5" y2="269.2" stroke="#ffff00" stroke-width="1.7"/>
<line x1="111.3" y1="317.3" x2="141.5" y2="317.3" stroke="#ffff00" stroke-width="1.7"/>
<line x1="111.3" y1="328.4" x2="141.5" y2="328.4" stroke="#ffff00" stroke-width="1.7"/>
<line x1="111.3" y1="339.2" x2="141.5" y2="339.2" stroke="#ffff00" stroke-width="1.7"/>
<line x1="111.3" y1="349.5" x2="141.5" y2="349.5" stroke="#ffff00" stroke-width="1.7"/>
<line x1="111.3" y1="360.3" x2="141.5" y2="360.3" stroke="#ffff00" stroke-width="1.7"/>
<line x1="111.3" y1="370.6" x2="141.5" y2="370.6" stroke="#ffff00" stroke-width="1.7"/>
<line x1="111.3" y1="393.3" x2="141.5" y2="393.3" stroke="#ffff00" stroke-width="1.7"/>
<line x1="111.3" y1="435.8" x2="141.5" y2="435.8" stroke="#ffff00" stroke-width="1.7"/>
<line x1="111.3" y1="524.7" x2="141.5" y2="524.7" stroke="#ffff00" stroke-width="1.7"/>
<line x1="111.3" y1="536" x2="141.5" y2="536" stroke="#ffff00" stroke-width="1.7"/>
<line x1="111.3" y1="545.9" x2="141.5" y2="545.9" stroke="#ffff00" stroke-width="1.7"/>
<line x1="111.3" y1="557" x2="141.5" y2="557" stroke="#ffff00" stroke-width="1.7"/>
<line x1="111.3" y1="568.3" x2="141.5" y2="568.3" stroke="#ffff00" stroke-width="1.7"/>
<line x1="111.3" y1="665.2" x2="141.5" y2="665.2" stroke="#ffff00" stroke-width="1.7"/>
<text transform="translate(109,300) rotate(-90) scale(0.75,1)" fill="#ffff00" font-size="10" text-anchor="start" font-weight="bold">675</text>
<text transform="translate(109,350) rotate(-90) scale(0.7,1)" fill="#ffff00" font-size="9" text-anchor="start" font-weight="bold">150|50|50|50</text>
<text transform="translate(109,373) rotate(-90) scale(0.75,1)" fill="#ffff00" font-size="9" text-anchor="start" font-weight="bold">200</text>
<text transform="translate(109,389) rotate(-90) scale(0.75,1)" fill="#ffff00" font-size="9" text-anchor="start" font-weight="bold">250</text>
<text transform="translate(109,420) rotate(-90) scale(0.75,1)" fill="#ffff00" font-size="9" text-anchor="start" font-weight="bold">600</text>
<text transform="translate(109,488) rotate(-90) scale(0.75,1)" fill="#ffff00" font-size="10" text-anchor="start" font-weight="bold">1,245</text>
<text transform="translate(109,566) rotate(-90) scale(0.7,1)" fill="#ffff00" font-size="9" text-anchor="start" font-weight="bold">150|50|50|50</text>
<text transform="translate(109,625) rotate(-90) scale(0.75,1)" fill="#ffff00" font-size="10" text-anchor="start" font-weight="bold">1,355</text>
<text transform="translate(68,369) scale(0.75,1)" fill="#ffff00" font-size="10" text-anchor="start" font-weight="bold">L+4500</text>
<line x1="68" y1="406.5" x2="1365" y2="406.5" stroke="#8a8a8a" stroke-width="2.5"/>
<line x1="168" y1="420" x2="771.6" y2="420" stroke="#8a8a8a" stroke-width="1.8"/>
<line x1="68" y1="421" x2="168" y2="421" stroke="#8a8a8a" stroke-width="1.2"/>
<line x1="68" y1="418.8" x2="168" y2="418.8" stroke="#8a8a8a" stroke-width="1.2"/>
<line x1="68" y1="414.8" x2="168" y2="414.8" stroke="#8a8a8a" stroke-width="1.2"/>
<line x1="68" y1="409.5" x2="168" y2="409.5" stroke="#8a8a8a" stroke-width="1.2"/>
<line x1="68" y1="436.5" x2="168" y2="436.5" stroke="#8a8a8a" stroke-width="1.5"/>
<line x1="85.5" y1="407" x2="85.5" y2="455" stroke="#8a8a8a" stroke-width="1.6"/>
<line x1="97.4" y1="407" x2="97.4" y2="436.5" stroke="#8a8a8a" stroke-width="1.6"/>
<line x1="166" y1="390" x2="166" y2="421" stroke="#8a8a8a" stroke-width="1.6"/>
<rect x="68" y="390" width="5" height="40" fill="url(#hh)"/>
<line x1="68" y1="435.8" x2="1455" y2="435.8" stroke="#8a8a8a" stroke-width="1.5" stroke-dasharray="12 4 3 4"/>
<line x1="68" y1="454.4" x2="771.6" y2="454.4" stroke="#8a8a8a" stroke-width="1.8"/>
<line x1="943" y1="420.4" x2="1168" y2="420.4" stroke="#8a8a8a" stroke-width="1.7"/>
<line x1="168" y1="413" x2="320" y2="413" stroke="#8a8a8a" stroke-width="1.2"/>
<line x1="498.2" y1="406.5" x2="498.2" y2="454.4" stroke="#8a8a8a" stroke-width="1.5"/>
<line x1="522.2" y1="406.5" x2="522.2" y2="454.4" stroke="#8a8a8a" stroke-width="1.5"/>
<line x1="545" y1="406.5" x2="545" y2="454.4" stroke="#8a8a8a" stroke-width="1.5"/>
<line x1="616" y1="406.5" x2="616" y2="436" stroke="#8a8a8a" stroke-width="1.6"/>
<line x1="369" y1="406.5" x2="369" y2="454.4" stroke="#8a8a8a" stroke-width="1.6"/>
<rect x="653" y="389" width="9" height="65" fill="url(#hh)"/>
<line x1="400" y1="420" x2="414" y2="407" stroke="#8a8a8a" stroke-width="1.2"/>
<line x1="403" y1="420" x2="417" y2="407" stroke="#8a8a8a" stroke-width="1.2"/>
<line x1="500" y1="420" x2="514" y2="407" stroke="#8a8a8a" stroke-width="1.2"/>
<line x1="503" y1="420" x2="517" y2="407" stroke="#8a8a8a" stroke-width="1.2"/>
<line x1="600" y1="420" x2="614" y2="407" stroke="#8a8a8a" stroke-width="1.2"/>
<line x1="603" y1="420" x2="617" y2="407" stroke="#8a8a8a" stroke-width="1.2"/>
<line x1="700" y1="420" x2="714" y2="407" stroke="#8a8a8a" stroke-width="1.2"/>
<line x1="703" y1="420" x2="717" y2="407" stroke="#8a8a8a" stroke-width="1.2"/>
<line x1="830" y1="420" x2="844" y2="407" stroke="#8a8a8a" stroke-width="1.2"/>
<line x1="833" y1="420" x2="847" y2="407" stroke="#8a8a8a" stroke-width="1.2"/>
<line x1="950" y1="420" x2="964" y2="407" stroke="#8a8a8a" stroke-width="1.2"/>
<line x1="953" y1="420" x2="967" y2="407" stroke="#8a8a8a" stroke-width="1.2"/>
<line x1="1010" y1="420" x2="1024" y2="407" stroke="#8a8a8a" stroke-width="1.2"/>
<line x1="1013" y1="420" x2="1027" y2="407" stroke="#8a8a8a" stroke-width="1.2"/>
<line x1="1093" y1="420" x2="1107" y2="407" stroke="#8a8a8a" stroke-width="1.2"/>
<line x1="1096" y1="420" x2="1110" y2="407" stroke="#8a8a8a" stroke-width="1.2"/>
<line x1="1176" y1="420" x2="1190" y2="407" stroke="#8a8a8a" stroke-width="1.2"/>
<line x1="1179" y1="420" x2="1193" y2="407" stroke="#8a8a8a" stroke-width="1.2"/>
<line x1="1300" y1="420" x2="1314" y2="407" stroke="#8a8a8a" stroke-width="1.2"/>
<line x1="1303" y1="420" x2="1317" y2="407" stroke="#8a8a8a" stroke-width="1.2"/>
<line x1="1340" y1="420" x2="1354" y2="407" stroke="#8a8a8a" stroke-width="1.2"/>
<line x1="1343" y1="420" x2="1357" y2="407" stroke="#8a8a8a" stroke-width="1.2"/>
<polyline points="68,350.6 74,352 104,404" fill="none" stroke="#8a8a8a" stroke-width="1.6"/>
<polyline points="104,403.7 135.2,351.4 165.6,344.4 165.6,405.3" fill="none" stroke="#8a8a8a" stroke-width="1.6"/>
<text transform="translate(296,500) scale(0.78,1)" fill="#ffff00" font-size="8.5" text-anchor="middle" font-weight="bold">200</text>
<text transform="translate(322,500) scale(0.78,1)" fill="#ffff00" font-size="8.5" text-anchor="middle" font-weight="bold">550</text>
<text transform="translate(368,500) scale(0.78,1)" fill="#ffff00" font-size="8.5" text-anchor="middle" font-weight="bold">700</text>
<text transform="translate(406,500) scale(0.78,1)" fill="#ffff00" font-size="8.5" text-anchor="middle" font-weight="bold">375</text>
<text transform="translate(415,491) rotate(-90) scale(0.78,1)" fill="#ffff00" font-size="8.5" text-anchor="start" font-weight="bold">65 1FL+4250</text>
<circle cx="286.8" cy="545.9" r="2.6" fill="none" stroke="#8a8a8a" stroke-width="1.3"/>
<circle cx="297.4" cy="545.9" r="2.6" fill="none" stroke="#8a8a8a" stroke-width="1.3"/>
<circle cx="305.4" cy="545.9" r="2.6" fill="none" stroke="#8a8a8a" stroke-width="1.3"/>
<circle cx="305.4" cy="535.8" r="2.6" fill="none" stroke="#8a8a8a" stroke-width="1.3"/>
<circle cx="305.4" cy="524.7" r="2.6" fill="none" stroke="#8a8a8a" stroke-width="1.3"/>
<text transform="translate(312,528) scale(0.8,1)" fill="#ffff00" font-size="8" text-anchor="start" font-weight="bold">90φ</text>
<text transform="translate(312,538) scale(0.8,1)" fill="#ffff00" font-size="8" text-anchor="start" font-weight="bold">90φ</text>
<text transform="translate(310,549) scale(0.8,1)" fill="#ffff00" font-size="8" text-anchor="start" font-weight="bold">75φX3</text>
<line x1="312" y1="465" x2="371.7" y2="465" stroke="#8a8a8a" stroke-width="1.6"/>
<line x1="316" y1="563" x2="358.4" y2="563" stroke="#8a8a8a" stroke-width="1.6"/>
<line x1="358.4" y1="465" x2="358.4" y2="563" stroke="#8a8a8a" stroke-width="1.6"/>
<line x1="771.6" y1="406.5" x2="771.6" y2="883" stroke="#8a8a8a" stroke-width="1.6"/>
<line x1="786.2" y1="465" x2="786.2" y2="883" stroke="#8a8a8a" stroke-width="1.6"/>
<line x1="771.6" y1="500.8" x2="826" y2="500.8" stroke="#8a8a8a" stroke-width="1.2"/>
<line x1="771.6" y1="511.4" x2="826" y2="511.4" stroke="#8a8a8a" stroke-width="1.2"/>
<text transform="translate(786,498) scale(0.8,1)" fill="#9a9a9a" font-size="7" text-anchor="middle">400</text>
<text transform="translate(812,498) scale(0.8,1)" fill="#9a9a9a" font-size="7" text-anchor="middle">370</text>
<text transform="translate(800,509) scale(0.8,1)" fill="#9a9a9a" font-size="7" text-anchor="middle">740</text>
<line x1="772.7" y1="452" x2="819.8" y2="406.9" stroke="#8a8a8a" stroke-width="1.2"/>
<line x1="775.5" y1="452" x2="822.6" y2="406.9" stroke="#8a8a8a" stroke-width="1.2"/>
<line x1="784.5" y1="427.5" x2="784.5" y2="445" stroke="#8a8a8a" stroke-width="2.2"/>
<line x1="818.5" y1="427.5" x2="818.5" y2="445" stroke="#8a8a8a" stroke-width="2.2"/>
<line x1="784.5" y1="436.3" x2="818.5" y2="436.3" stroke="#8a8a8a" stroke-width="1.5"/>
<line x1="801.2" y1="419.6" x2="801.2" y2="453" stroke="#8a8a8a" stroke-width="1.8"/>
<line x1="792" y1="419.6" x2="811" y2="419.6" stroke="#8a8a8a" stroke-width="2.2"/>
<line x1="792" y1="453" x2="811" y2="453" stroke="#8a8a8a" stroke-width="2.2"/>
<line x1="771.7" y1="455" x2="771.7" y2="455" stroke="#8a8a8a" stroke-width="1.6"/>
<line x1="786.4" y1="466.8" x2="827.7" y2="466.8" stroke="#8a8a8a" stroke-width="1.6"/>
<line x1="827.7" y1="466.8" x2="827.7" y2="640" stroke="#8a8a8a" stroke-width="1.6"/>
<line x1="801.3" y1="405" x2="801.3" y2="883" stroke="#9a9a9a" stroke-width="1.3" stroke-dasharray="10 2.5 2.5 2.5"/>
<line x1="814.7" y1="780" x2="814.7" y2="883" stroke="#8a8a8a" stroke-width="1.6"/>
<line x1="827" y1="640" x2="814.7" y2="807" stroke="#8a8a8a" stroke-width="1.2"/>
<line x1="787.7" y1="678" x2="798.7" y2="678" stroke="#8a8a8a" stroke-width="1.6"/>
<line x1="787.7" y1="732" x2="798.7" y2="732" stroke="#8a8a8a" stroke-width="1.6"/>
<line x1="798.7" y1="678" x2="798.7" y2="732" stroke="#8a8a8a" stroke-width="1.6"/>
<line x1="943" y1="406.5" x2="943" y2="570" stroke="#8a8a8a" stroke-width="1.6"/>
<line x1="1161.7" y1="406.5" x2="1161.7" y2="570" stroke="#8a8a8a" stroke-width="1.6"/>
<line x1="943" y1="462" x2="1231" y2="462" stroke="#8a8a8a" stroke-width="1.5" stroke-dasharray="8 4"/>
<line x1="943" y1="477" x2="1161.7" y2="477" stroke="#8a8a8a" stroke-width="1.7"/>
<line x1="1231.3" y1="406" x2="1231.3" y2="628" stroke="#8a8a8a" stroke-width="1.7"/>
<line x1="1243" y1="465" x2="1243" y2="568.4" stroke="#8a8a8a" stroke-width="1.5"/>
<line x1="1246.7" y1="465" x2="1246.7" y2="568.4" stroke="#8a8a8a" stroke-width="1.5"/>
<line x1="1287" y1="406" x2="1287" y2="646" stroke="#8a8a8a" stroke-width="1.7"/>
<line x1="1289.7" y1="421" x2="1289.7" y2="646" stroke="#8a8a8a" stroke-width="1.5"/>
<line x1="1277.5" y1="646" x2="1277.5" y2="883" stroke="#8a8a8a" stroke-width="1.5"/>
<line x1="1259" y1="406" x2="1259" y2="646" stroke="#9a9a9a" stroke-width="1.3" stroke-dasharray="10 2.5 2.5 2.5"/>
<line x1="1261" y1="646" x2="1261" y2="883" stroke="#9a9a9a" stroke-width="1.3" stroke-dasharray="10 2.5 2.5 2.5"/>
<line x1="1289.7" y1="421.2" x2="1365" y2="421.2" stroke="#8a8a8a" stroke-width="1.8"/>
<line x1="1289.7" y1="450.4" x2="1365" y2="450.4" stroke="#8a8a8a" stroke-width="1.8"/>
<line x1="1231.3" y1="465" x2="1287" y2="465" stroke="#8a8a8a" stroke-width="1.6"/>
<line x1="1231.3" y1="508" x2="1287" y2="508" stroke="#8a8a8a" stroke-width="1.6"/>
<line x1="1231.3" y1="530" x2="1287" y2="530" stroke="#8a8a8a" stroke-width="1.6"/>
<line x1="1231.3" y1="543.2" x2="1259" y2="543.2" stroke="#8a8a8a" stroke-width="1.6"/>
<line x1="1231.3" y1="568.4" x2="1247" y2="568.4" stroke="#8a8a8a" stroke-width="1.6"/>
<line x1="1248" y1="462" x2="1287" y2="430" stroke="#8a8a8a" stroke-width="1.2"/>
<line x1="1251" y1="462" x2="1290" y2="430" stroke="#8a8a8a" stroke-width="1.2"/>
<line x1="1161.7" y1="421.2" x2="1231.3" y2="421.2" stroke="#8a8a8a" stroke-width="1.7"/>
<line x1="1100" y1="435.8" x2="1455" y2="435.8" stroke="#9a9a9a" stroke-width="1.3" stroke-dasharray="12 4 3 4"/>
<line x1="1100" y1="461" x2="1231" y2="461" stroke="#9a9a9a" stroke-width="1.3" stroke-dasharray="6 4"/>
<line x1="1100" y1="559" x2="1343.5" y2="559" stroke="#9a9a9a" stroke-width="1.3" stroke-dasharray="12 4 3 4"/>
<line x1="1343.5" y1="435.8" x2="1343.5" y2="559" stroke="#8a8a8a" stroke-width="1.5"/>
<line x1="843" y1="615.4" x2="1455" y2="615.4" stroke="#9a9a9a" stroke-width="1.3" stroke-dasharray="12 4 3 4"/>
<line x1="1289.7" y1="601.6" x2="1365" y2="601.6" stroke="#8a8a8a" stroke-width="1.8"/>
<line x1="1289.7" y1="628" x2="1365" y2="628" stroke="#8a8a8a" stroke-width="1.8"/>
<line x1="1161.7" y1="601.6" x2="1231.3" y2="601.6" stroke="#8a8a8a" stroke-width="1.8"/>
<line x1="1161.7" y1="628" x2="1231.3" y2="628" stroke="#8a8a8a" stroke-width="1.8"/>
<text transform="translate(1240,540) scale(0.8,1)" fill="#9a9a9a" font-size="7" text-anchor="middle">250</text>
<text transform="translate(1270,525) scale(0.8,1)" fill="#9a9a9a" font-size="7" text-anchor="middle">410</text>
<text transform="translate(1270,505) scale(0.8,1)" fill="#9a9a9a" font-size="7" text-anchor="middle">410</text>
<line x1="817" y1="781.3" x2="1240" y2="781.3" stroke="#8a8a8a" stroke-width="1.6"/>
<line x1="817" y1="808.3" x2="1240" y2="808.3" stroke="#8a8a8a" stroke-width="1.6"/>
<line x1="817" y1="794.3" x2="1455" y2="794.3" stroke="#9a9a9a" stroke-width="1.3" stroke-dasharray="12 4 3 4"/>
<line x1="1241.3" y1="646" x2="1241.3" y2="883" stroke="#8a8a8a" stroke-width="1.5"/>
<line x1="1243.5" y1="646" x2="1243.5" y2="883" stroke="#8a8a8a" stroke-width="1.2"/>
<line x1="1280.6" y1="646" x2="1280.6" y2="883" stroke="#8a8a8a" stroke-width="1.5"/>
<line x1="1280.6" y1="777.6" x2="1365" y2="777.6" stroke="#8a8a8a" stroke-width="1.8"/>
<line x1="1280.6" y1="812" x2="1365" y2="812" stroke="#8a8a8a" stroke-width="1.8"/>
<line x1="1100" y1="781.3" x2="1100" y2="808.3" stroke="#8a8a8a" stroke-width="1.6"/>
<line x1="1158" y1="781.3" x2="1158" y2="808.3" stroke="#8a8a8a" stroke-width="1.6"/>
<line x1="1241" y1="864" x2="1280" y2="864" stroke="#8a8a8a" stroke-width="1.2"/>
<text transform="translate(1251,862) scale(0.8,1)" fill="#9a9a9a" font-size="7" text-anchor="middle">285</text>
<text transform="translate(1271,862) scale(0.8,1)" fill="#9a9a9a" font-size="7" text-anchor="middle">285</text>
<line x1="68" y1="656.2" x2="311.8" y2="656.2" stroke="#8a8a8a" stroke-width="1.3"/>
<line x1="68" y1="658.3" x2="311.8" y2="658.3" stroke="#8a8a8a" stroke-width="1.3"/>
<line x1="68" y1="679.2" x2="311.8" y2="679.2" stroke="#8a8a8a" stroke-width="1.3"/>
<line x1="68" y1="681.2" x2="311.8" y2="681.2" stroke="#8a8a8a" stroke-width="1.3"/>
<line x1="68" y1="665.2" x2="771.6" y2="665.2" stroke="#9a9a9a" stroke-width="1.3" stroke-dasharray="12 4 3 4"/>
<line x1="80.5" y1="656" x2="80.5" y2="681" stroke="#8a8a8a" stroke-width="1.6"/>
<line x1="262.8" y1="560" x2="262.8" y2="656" stroke="#8a8a8a" stroke-width="1.6"/>
<line x1="282.6" y1="440" x2="282.6" y2="681" stroke="#8a8a8a" stroke-width="1.6"/>
<line x1="272.2" y1="440" x2="272.2" y2="699" stroke="#9a9a9a" stroke-width="1.3" stroke-dasharray="10 2.5 2.5 2.5"/>
<line x1="311.8" y1="406" x2="311.8" y2="883" stroke="#8a8a8a" stroke-width="1.6"/>
<line x1="316" y1="406" x2="316" y2="883" stroke="#8a8a8a" stroke-width="1.6"/>
<line x1="341" y1="560" x2="341" y2="883" stroke="#9a9a9a" stroke-width="1.3" stroke-dasharray="10 2.5 2.5 2.5"/>
<line x1="366.3" y1="406" x2="366.3" y2="883" stroke="#8a8a8a" stroke-width="1.6"/>
<line x1="371.1" y1="420" x2="371.1" y2="883" stroke="#8a8a8a" stroke-width="1.6"/>
<line x1="371" y1="654.2" x2="771.6" y2="654.2" stroke="#8a8a8a" stroke-width="1.6"/>
<line x1="371" y1="677" x2="771.6" y2="677" stroke="#8a8a8a" stroke-width="1.6"/>
<line x1="272.2" y1="699.2" x2="341" y2="699.2" stroke="#8a8a8a" stroke-width="1.6"/>
<line x1="68" y1="819.4" x2="311.8" y2="819.4" stroke="#8a8a8a" stroke-width="1.5"/>
<line x1="371" y1="819.4" x2="771.6" y2="819.4" stroke="#8a8a8a" stroke-width="1.5"/>
<line x1="68" y1="842" x2="311.8" y2="842" stroke="#8a8a8a" stroke-width="1.5"/>
<line x1="371" y1="842" x2="771.6" y2="842" stroke="#8a8a8a" stroke-width="1.5"/>
<line x1="68" y1="830.4" x2="771.6" y2="830.4" stroke="#9a9a9a" stroke-width="1.3" stroke-dasharray="12 4 3 4"/>
<line x1="98" y1="819.4" x2="98" y2="842" stroke="#8a8a8a" stroke-width="1.6"/>
<line x1="531" y1="819.4" x2="531" y2="842" stroke="#8a8a8a" stroke-width="1.6"/>
<line x1="560.4" y1="819.4" x2="560.4" y2="842" stroke="#8a8a8a" stroke-width="1.6"/>
<line x1="531" y1="654" x2="531" y2="677" stroke="#8a8a8a" stroke-width="1.6"/>
<line x1="560.4" y1="654" x2="560.4" y2="677" stroke="#8a8a8a" stroke-width="1.6"/>
<line x1="311.8" y1="737.5" x2="366" y2="737.5" stroke="#8a8a8a" stroke-width="1.6"/>
<line x1="311.8" y1="763.3" x2="366" y2="763.3" stroke="#8a8a8a" stroke-width="1.6"/>
<line x1="311.8" y1="809.5" x2="366" y2="809.5" stroke="#8a8a8a" stroke-width="1.6"/>
<text transform="translate(328,735) scale(0.8,1)" fill="#9a9a9a" font-size="7" text-anchor="middle">410</text>
<text transform="translate(352,735) scale(0.8,1)" fill="#9a9a9a" font-size="7" text-anchor="middle">410</text>
<text transform="translate(341,762) scale(0.8,1)" fill="#9a9a9a" font-size="7" text-anchor="middle">820</text>
<text transform="translate(306,808) scale(0.8,1)" fill="#9a9a9a" font-size="7" text-anchor="middle">60</text>
<text transform="translate(328,808) scale(0.8,1)" fill="#9a9a9a" font-size="7" text-anchor="middle">350</text>
<text transform="translate(354,808) scale(0.8,1)" fill="#9a9a9a" font-size="7" text-anchor="middle">350</text>
<text transform="translate(376,808) scale(0.8,1)" fill="#9a9a9a" font-size="7" text-anchor="middle">60</text>
<text transform="translate(306,697) scale(0.8,1)" fill="#9a9a9a" font-size="7" text-anchor="middle">965</text>
<line x1="250.5" y1="315.5" x2="1365" y2="315.5" stroke="#00ff00" stroke-width="1.7"/>
<line x1="250.5" y1="319.5" x2="1365" y2="319.5" stroke="#00ff00" stroke-width="1.7"/>
<line x1="220" y1="317.5" x2="1390" y2="317.5" stroke="#ffffff" stroke-width="1.8" stroke-dasharray="10 2.5 2.5 2.5"/>
<line x1="178.9" y1="327.1" x2="1050.3" y2="327.1" stroke="#00ff00" stroke-width="1.7"/>
<line x1="178.9" y1="329.7" x2="1050.3" y2="329.7" stroke="#00ff00" stroke-width="1.7"/>
<line x1="170" y1="328.4" x2="1062" y2="328.4" stroke="#ffffff" stroke-width="1.8" stroke-dasharray="10 2.5 2.5 2.5"/>
<line x1="196.9" y1="337.7" x2="1021" y2="337.7" stroke="#00ff00" stroke-width="1.7"/>
<line x1="196.9" y1="340.7" x2="1021" y2="340.7" stroke="#00ff00" stroke-width="1.7"/>
<line x1="185" y1="339.2" x2="1035" y2="339.2" stroke="#ffffff" stroke-width="1.8" stroke-dasharray="10 2.5 2.5 2.5"/>
<line x1="214.9" y1="348" x2="993" y2="348" stroke="#00ff00" stroke-width="1.7"/>
<line x1="214.9" y1="351" x2="993" y2="351" stroke="#00ff00" stroke-width="1.7"/>
<line x1="200" y1="349.5" x2="1006" y2="349.5" stroke="#ffffff" stroke-width="1.8" stroke-dasharray="10 2.5 2.5 2.5"/>
<line x1="232.4" y1="358.5" x2="957.2" y2="358.5" stroke="#00ff00" stroke-width="1.7"/>
<line x1="232.4" y1="362.1" x2="957.2" y2="362.1" stroke="#00ff00" stroke-width="1.7"/>
<line x1="219" y1="360.3" x2="970" y2="360.3" stroke="#ffffff" stroke-width="1.8" stroke-dasharray="10 2.5 2.5 2.5"/>
<line x1="177.2" y1="328.4" x2="177.2" y2="568.4" stroke="#00ff00" stroke-width="1.7"/>
<line x1="180.6" y1="328.4" x2="180.6" y2="568.4" stroke="#00ff00" stroke-width="1.7"/>
<line x1="178.9" y1="328.4" x2="178.9" y2="568.4" stroke="#ffffff" stroke-width="1.8" stroke-dasharray="10 2.5 2.5 2.5"/>
<line x1="195.2" y1="339.2" x2="195.2" y2="557.3" stroke="#00ff00" stroke-width="1.7"/>
<line x1="198.6" y1="339.2" x2="198.6" y2="557.3" stroke="#00ff00" stroke-width="1.7"/>
<line x1="196.9" y1="339.2" x2="196.9" y2="557.3" stroke="#ffffff" stroke-width="1.8" stroke-dasharray="10 2.5 2.5 2.5"/>
<line x1="213.2" y1="349.5" x2="213.2" y2="545.9" stroke="#00ff00" stroke-width="1.7"/>
<line x1="216.6" y1="349.5" x2="216.6" y2="545.9" stroke="#00ff00" stroke-width="1.7"/>
<line x1="214.9" y1="349.5" x2="214.9" y2="545.9" stroke="#ffffff" stroke-width="1.8" stroke-dasharray="10 2.5 2.5 2.5"/>
<line x1="230.7" y1="360.3" x2="230.7" y2="535.8" stroke="#00ff00" stroke-width="1.7"/>
<line x1="234.1" y1="360.3" x2="234.1" y2="535.8" stroke="#00ff00" stroke-width="1.7"/>
<line x1="232.4" y1="360.3" x2="232.4" y2="535.8" stroke="#ffffff" stroke-width="1.8" stroke-dasharray="10 2.5 2.5 2.5"/>
<line x1="248.5" y1="317.5" x2="248.5" y2="524.7" stroke="#00ff00" stroke-width="1.7"/>
<line x1="252.5" y1="317.5" x2="252.5" y2="524.7" stroke="#00ff00" stroke-width="1.7"/>
<line x1="250.5" y1="317.5" x2="250.5" y2="524.7" stroke="#ffffff" stroke-width="1.8" stroke-dasharray="10 2.5 2.5 2.5"/>
<line x1="178.9" y1="566.9" x2="305.4" y2="566.9" stroke="#00ff00" stroke-width="1.7"/>
<line x1="178.9" y1="569.9" x2="305.4" y2="569.9" stroke="#00ff00" stroke-width="1.7"/>
<line x1="178.9" y1="568.4" x2="305.4" y2="568.4" stroke="#ffffff" stroke-width="1.8" stroke-dasharray="10 2.5 2.5 2.5"/>
<line x1="196.9" y1="555.8" x2="297.4" y2="555.8" stroke="#00ff00" stroke-width="1.7"/>
<line x1="196.9" y1="558.8" x2="297.4" y2="558.8" stroke="#00ff00" stroke-width="1.7"/>
<line x1="196.9" y1="557.3" x2="297.4" y2="557.3" stroke="#ffffff" stroke-width="1.8" stroke-dasharray="10 2.5 2.5 2.5"/>
<line x1="214.9" y1="544.4" x2="305.4" y2="544.4" stroke="#00ff00" stroke-width="1.7"/>
<line x1="214.9" y1="547.4" x2="305.4" y2="547.4" stroke="#00ff00" stroke-width="1.7"/>
<line x1="214.9" y1="545.9" x2="305.4" y2="545.9" stroke="#ffffff" stroke-width="1.8" stroke-dasharray="10 2.5 2.5 2.5"/>
<line x1="232.4" y1="534.3" x2="305.4" y2="534.3" stroke="#00ff00" stroke-width="1.7"/>
<line x1="232.4" y1="537.3" x2="305.4" y2="537.3" stroke="#00ff00" stroke-width="1.7"/>
<line x1="232.4" y1="535.8" x2="305.4" y2="535.8" stroke="#ffffff" stroke-width="1.8" stroke-dasharray="10 2.5 2.5 2.5"/>
<line x1="250.5" y1="523.2" x2="305.4" y2="523.2" stroke="#00ff00" stroke-width="1.7"/>
<line x1="250.5" y1="526.2" x2="305.4" y2="526.2" stroke="#00ff00" stroke-width="1.7"/>
<line x1="250.5" y1="524.7" x2="305.4" y2="524.7" stroke="#ffffff" stroke-width="1.8" stroke-dasharray="10 2.5 2.5 2.5"/>
<line x1="305.4" y1="524.7" x2="305.4" y2="568.4" stroke="#00ff00" stroke-width="1.7"/>
<line x1="297.4" y1="545" x2="297.4" y2="557.3" stroke="#00ff00" stroke-width="1.7"/>
<line x1="169.9" y1="328.4" x2="187.9" y2="328.4" stroke="#ffffff" stroke-width="1.5"/>
<line x1="178.9" y1="319.4" x2="178.9" y2="337.4" stroke="#ffffff" stroke-width="1.5"/>
<line x1="187.9" y1="339.2" x2="205.9" y2="339.2" stroke="#ffffff" stroke-width="1.5"/>
<line x1="196.9" y1="330.2" x2="196.9" y2="348.2" stroke="#ffffff" stroke-width="1.5"/>
<line x1="205.9" y1="349.5" x2="223.9" y2="349.5" stroke="#ffffff" stroke-width="1.5"/>
<line x1="214.9" y1="340.5" x2="214.9" y2="358.5" stroke="#ffffff" stroke-width="1.5"/>
<line x1="223.4" y1="360.3" x2="241.4" y2="360.3" stroke="#ffffff" stroke-width="1.5"/>
<line x1="232.4" y1="351.3" x2="232.4" y2="369.3" stroke="#ffffff" stroke-width="1.5"/>
<line x1="241.5" y1="317.5" x2="259.5" y2="317.5" stroke="#ffffff" stroke-width="1.5"/>
<line x1="250.5" y1="308.5" x2="250.5" y2="326.5" stroke="#ffffff" stroke-width="1.5"/>
<line x1="169.9" y1="568.4" x2="187.9" y2="568.4" stroke="#ffffff" stroke-width="1.5"/>
<line x1="178.9" y1="559.4" x2="178.9" y2="577.4" stroke="#ffffff" stroke-width="1.5"/>
<line x1="187.9" y1="557.3" x2="205.9" y2="557.3" stroke="#ffffff" stroke-width="1.5"/>
<line x1="196.9" y1="548.3" x2="196.9" y2="566.3" stroke="#ffffff" stroke-width="1.5"/>
<line x1="205.9" y1="545.9" x2="223.9" y2="545.9" stroke="#ffffff" stroke-width="1.5"/>
<line x1="214.9" y1="536.9" x2="214.9" y2="554.9" stroke="#ffffff" stroke-width="1.5"/>
<line x1="296.4" y1="568.4" x2="314.4" y2="568.4" stroke="#ffffff" stroke-width="1.5"/>
<line x1="305.4" y1="559.4" x2="305.4" y2="577.4" stroke="#ffffff" stroke-width="1.5"/>
<rect x="175.9" y="407" width="6" height="45" fill="url(#hg)"/>
<rect x="193.9" y="407" width="6" height="45" fill="url(#hg)"/>
<rect x="211.9" y="407" width="6" height="45" fill="url(#hg)"/>
<rect x="229.4" y="407" width="6" height="45" fill="url(#hg)"/>
<rect x="247.5" y="407" width="6" height="45" fill="url(#hg)"/>
<line x1="68" y1="370.7" x2="883.6" y2="370.7" stroke="#ffff00" stroke-width="1.7"/>
<line x1="68" y1="379.1" x2="883.6" y2="379.1" stroke="#ffff00" stroke-width="1.7"/>
<line x1="68" y1="374.9" x2="895" y2="374.9" stroke="#ffffff" stroke-width="1.8" stroke-dasharray="10 2.5 2.5 2.5"/>
<line x1="397" y1="388.7" x2="858" y2="388.7" stroke="#ffff00" stroke-width="1.7"/>
<line x1="423" y1="397.5" x2="858" y2="397.5" stroke="#ffff00" stroke-width="1.7"/>
<line x1="288" y1="393.1" x2="870" y2="393.1" stroke="#ffffff" stroke-width="1.8" stroke-dasharray="10 2.5 2.5 2.5"/>
<line x1="240" y1="393.1" x2="260" y2="393.1" stroke="#ffffff" stroke-width="1.8" stroke-dasharray="10 2.5 2.5 2.5"/>
<line x1="879.4" y1="374.9" x2="879.4" y2="642" stroke="#ffff00" stroke-width="1.7"/>
<line x1="887.8" y1="374.9" x2="887.8" y2="642" stroke="#ffff00" stroke-width="1.7"/>
<line x1="883.6" y1="366" x2="883.6" y2="642" stroke="#ffffff" stroke-width="1.8" stroke-dasharray="10 2.5 2.5 2.5"/>
<line x1="853.9" y1="393.1" x2="853.9" y2="883" stroke="#ffff00" stroke-width="1.7"/>
<line x1="862.7" y1="393.1" x2="862.7" y2="883" stroke="#ffff00" stroke-width="1.7"/>
<line x1="858.3" y1="385" x2="858.3" y2="883" stroke="#ffffff" stroke-width="1.8" stroke-dasharray="10 2.5 2.5 2.5"/>
<rect x="140" y="371" width="15.8" height="8.5" fill="none" stroke="#ffff00" stroke-width="1.5"/>
<line x1="148.5" y1="354" x2="148.5" y2="400" stroke="#ffffff" stroke-width="1.8" stroke-dasharray="10 2.5 2.5 2.5"/>
<path d="M392.2,392 V474 Q392.2,482.5 384,482.5 H294 Q288.8,482.5 288.8,488 V501 Q288.8,506.5 294,506.5 H411 Q419.2,506.5 419.2,498 V376" fill="none" stroke="#ffff00" stroke-width="10.5" stroke-linecap="round"/>
<path d="M392.2,392 V474 Q392.2,482.5 384,482.5 H294 Q288.8,482.5 288.8,488 V501 Q288.8,506.5 294,506.5 H411 Q419.2,506.5 419.2,498 V376" fill="none" stroke="#161616" stroke-width="7.5" stroke-linecap="round"/>
<rect x="312" y="478.5" width="59.4" height="8.3" fill="url(#hy)"/>
<rect x="312" y="502.5" width="59.4" height="8.3" fill="url(#hy)"/>
<rect x="388.5" y="407" width="7.5" height="44" fill="url(#hy)"/>
<rect x="415.5" y="407" width="7.5" height="44" fill="url(#hy)"/>
<line x1="272.4" y1="482.5" x2="410" y2="482.5" stroke="#ffffff" stroke-width="1.8" stroke-dasharray="10 2.5 2.5 2.5"/>
<line x1="272.4" y1="506.5" x2="433" y2="506.5" stroke="#ffffff" stroke-width="1.8" stroke-dasharray="10 2.5 2.5 2.5"/>
<line x1="392.2" y1="383" x2="392.2" y2="520" stroke="#ffffff" stroke-width="1.8" stroke-dasharray="10 2.5 2.5 2.5"/>
<line x1="419.2" y1="366" x2="419.2" y2="520" stroke="#ffffff" stroke-width="1.8" stroke-dasharray="10 2.5 2.5 2.5"/>
<circle cx="288.3" cy="482" r="3.2" fill="none" stroke="#9a9a9a" stroke-width="1.6"/>
<circle cx="302.4" cy="482" r="3.2" fill="none" stroke="#9a9a9a" stroke-width="1.6"/>
<text transform="translate(277,473) scale(0.75,1)" fill="#ffff00" font-size="8" text-anchor="start" font-weight="bold">100φ</text>
<text transform="translate(296,473) scale(0.75,1)" fill="#ffff00" font-size="8" text-anchor="start" font-weight="bold">150φ</text>
<line x1="178" y1="605.8" x2="341.3" y2="605.8" stroke="#ffff00" stroke-width="1.7"/>
<line x1="178" y1="582" x2="178" y2="605.8" stroke="#ffff00" stroke-width="1.7"/>
<line x1="196.1" y1="582" x2="196.1" y2="605.8" stroke="#ffff00" stroke-width="1.7"/>
<line x1="214.5" y1="582" x2="214.5" y2="605.8" stroke="#ffff00" stroke-width="1.7"/>
<line x1="232.4" y1="582" x2="232.4" y2="605.8" stroke="#ffff00" stroke-width="1.7"/>
<line x1="250.5" y1="582" x2="250.5" y2="605.8" stroke="#ffff00" stroke-width="1.7"/>
<line x1="287.2" y1="582" x2="287.2" y2="605.8" stroke="#ffff00" stroke-width="1.7"/>
<line x1="297.2" y1="582" x2="297.2" y2="605.8" stroke="#ffff00" stroke-width="1.7"/>
<line x1="305.1" y1="582" x2="305.1" y2="605.8" stroke="#ffff00" stroke-width="1.7"/>
<line x1="341.3" y1="582" x2="341.3" y2="605.8" stroke="#ffff00" stroke-width="1.7"/>
<text transform="translate(187,603) scale(0.7,1)" fill="#ffff00" font-size="9" text-anchor="middle" font-weight="bold">250</text>
<text transform="translate(205,603) scale(0.7,1)" fill="#ffff00" font-size="9" text-anchor="middle" font-weight="bold">250</text>
<text transform="translate(223,603) scale(0.7,1)" fill="#ffff00" font-size="9" text-anchor="middle" font-weight="bold">250</text>
<text transform="translate(241,603) scale(0.7,1)" fill="#ffff00" font-size="9" text-anchor="middle" font-weight="bold">250</text>
<text transform="translate(269,603) scale(0.7,1)" fill="#ffff00" font-size="9" text-anchor="middle" font-weight="bold">520</text>
<text transform="translate(292,603) scale(0.7,1)" fill="#ffff00" font-size="9" text-anchor="middle" font-weight="bold">125</text>
<text transform="translate(301,603) scale(0.7,1)" fill="#ffff00" font-size="9" text-anchor="middle" font-weight="bold">125</text>
<text transform="translate(323,603) scale(0.7,1)" fill="#ffff00" font-size="9" text-anchor="middle" font-weight="bold">500</text>
<polyline points="448,437 467,437 467,505 422,505" fill="none" stroke="#ffff00" stroke-width="1.6"/>
<text transform="translate(465,462) rotate(-90) scale(0.75,1)" fill="#ffff00" font-size="9" text-anchor="start" font-weight="bold">650</text>
<text transform="translate(465,500) rotate(-90) scale(0.75,1)" fill="#ffff00" font-size="9" text-anchor="start" font-weight="bold">375</text>
<rect x="330" y="297.3" width="23.5" height="14.4" fill="none" stroke="#ffff00" stroke-width="1.6"/>
<line x1="330" y1="304.5" x2="353.5" y2="304.5" stroke="#ffff00" stroke-width="1.1"/>
<text transform="translate(341.8,303.5) scale(0.8,1)" fill="#ffff00" font-size="7" text-anchor="middle" font-weight="bold">9G</text>
<text transform="translate(341.8,310.2) scale(0.8,1)" fill="#ffff00" font-size="7" text-anchor="middle" font-weight="bold">2FL-XX</text>
<rect x="788.8" y="297.3" width="24" height="14.4" fill="none" stroke="#ffff00" stroke-width="1.6"/>
<line x1="788.8" y1="304.5" x2="812.8" y2="304.5" stroke="#ffff00" stroke-width="1.1"/>
<text transform="translate(800.8,303.5) scale(0.8,1)" fill="#ffff00" font-size="7" text-anchor="middle" font-weight="bold">9G</text>
<text transform="translate(800.8,310.2) scale(0.8,1)" fill="#ffff00" font-size="7" text-anchor="middle" font-weight="bold">2FL-XX</text>
<rect x="1248" y="297" width="24" height="14.7" fill="none" stroke="#ffff00" stroke-width="1.6"/>
<line x1="1248" y1="304.4" x2="1272" y2="304.4" stroke="#ffff00" stroke-width="1.1"/>
<text transform="translate(1260,303.4) scale(0.8,1)" fill="#ffff00" font-size="7" text-anchor="middle" font-weight="bold">9G</text>
<text transform="translate(1260,310.2) scale(0.8,1)" fill="#ffff00" font-size="7" text-anchor="middle" font-weight="bold">2FL-XX</text>
<rect x="288.3" y="353.4" width="23.1" height="14.4" fill="none" stroke="#ffff00" stroke-width="1.6"/>
<line x1="288.3" y1="360.6" x2="311.4" y2="360.6" stroke="#ffff00" stroke-width="1.1"/>
<text transform="translate(299.9,359.6) scale(0.8,1)" fill="#ffff00" font-size="7" text-anchor="middle" font-weight="bold">9G</text>
<text transform="translate(299.9,366.3) scale(0.8,1)" fill="#ffff00" font-size="7" text-anchor="middle" font-weight="bold">2FL-XX</text>
<rect x="959.7" y="390.8" width="23.9" height="15" fill="none" stroke="#ffff00" stroke-width="1.6"/>
<line x1="959.7" y1="398.3" x2="983.6" y2="398.3" stroke="#ffff00" stroke-width="1.1"/>
<text transform="translate(971.7,397.3) scale(0.8,1)" fill="#ffff00" font-size="7" text-anchor="middle" font-weight="bold">9G</text>
<text transform="translate(971.7,404.3) scale(0.8,1)" fill="#ffff00" font-size="7" text-anchor="middle" font-weight="bold">2FL-XX</text>
<rect x="137.5" y="466.3" width="23.3" height="14.7" fill="none" stroke="#ffff00" stroke-width="1.6"/>
<line x1="137.5" y1="473.6" x2="160.8" y2="473.6" stroke="#ffff00" stroke-width="1.1"/>
<text transform="translate(149.2,472.6) scale(0.8,1)" fill="#ffff00" font-size="7" text-anchor="middle" font-weight="bold">9G</text>
<text transform="translate(149.2,479.5) scale(0.8,1)" fill="#ffff00" font-size="7" text-anchor="middle" font-weight="bold">2FL-XX</text>
<rect x="137.5" y="488.3" width="23.3" height="14.3" fill="none" stroke="#ffff00" stroke-width="1.6"/>
<line x1="137.5" y1="495.5" x2="160.8" y2="495.5" stroke="#ffff00" stroke-width="1.1"/>
<text transform="translate(149.2,494.5) scale(0.8,1)" fill="#ffff00" font-size="7" text-anchor="middle" font-weight="bold">9G</text>
<text transform="translate(149.2,501.1) scale(0.8,1)" fill="#ffff00" font-size="7" text-anchor="middle" font-weight="bold">2FL-XX</text>
<rect x="256.3" y="438" width="23.3" height="14.5" fill="none" stroke="#ffff00" stroke-width="1.6"/>
<line x1="256.3" y1="445.2" x2="279.6" y2="445.2" stroke="#ffff00" stroke-width="1.1"/>
<text transform="translate(268,444.2) scale(0.8,1)" fill="#ffff00" font-size="7" text-anchor="middle" font-weight="bold">9G</text>
<text transform="translate(268,451) scale(0.8,1)" fill="#ffff00" font-size="7" text-anchor="middle" font-weight="bold">2FL-XX</text>
<rect x="361.9" y="437" width="23.1" height="14.7" fill="none" stroke="#ffff00" stroke-width="1.6"/>
<line x1="361.9" y1="444.4" x2="385" y2="444.4" stroke="#ffff00" stroke-width="1.1"/>
<text transform="translate(373.4,443.4) scale(0.8,1)" fill="#ffff00" font-size="7" text-anchor="middle" font-weight="bold">9G</text>
<text transform="translate(373.4,450.2) scale(0.8,1)" fill="#ffff00" font-size="7" text-anchor="middle" font-weight="bold">2FL-XX</text>
<rect x="425.5" y="437" width="23.1" height="14.7" fill="none" stroke="#ffff00" stroke-width="1.6"/>
<line x1="425.5" y1="444.4" x2="448.6" y2="444.4" stroke="#ffff00" stroke-width="1.1"/>
<text transform="translate(437.1,443.4) scale(0.8,1)" fill="#ffff00" font-size="7" text-anchor="middle" font-weight="bold">9G</text>
<text transform="translate(437.1,450.2) scale(0.8,1)" fill="#ffff00" font-size="7" text-anchor="middle" font-weight="bold">2FL-XX</text>
<rect x="330.6" y="460.5" width="23.4" height="14.3" fill="none" stroke="#ffff00" stroke-width="1.6"/>
<line x1="330.6" y1="467.6" x2="354" y2="467.6" stroke="#ffff00" stroke-width="1.1"/>
<text transform="translate(342.3,466.6) scale(0.8,1)" fill="#ffff00" font-size="7" text-anchor="middle" font-weight="bold">9G</text>
<text transform="translate(342.3,473.3) scale(0.8,1)" fill="#ffff00" font-size="7" text-anchor="middle" font-weight="bold">2FL-XX</text>
<rect x="330.6" y="516.7" width="23.4" height="15.1" fill="none" stroke="#ffff00" stroke-width="1.6"/>
<line x1="330.6" y1="524.2" x2="354" y2="524.2" stroke="#ffff00" stroke-width="1.1"/>
<text transform="translate(342.3,523.2) scale(0.8,1)" fill="#ffff00" font-size="7" text-anchor="middle" font-weight="bold">9G</text>
<text transform="translate(342.3,530.3) scale(0.8,1)" fill="#ffff00" font-size="7" text-anchor="middle" font-weight="bold">2FL-XX</text>
<polyline points="160.8,466.3 178,450" fill="none" stroke="#ffff00" stroke-width="1.2"/>
<polyline points="160.8,466.3 196,450" fill="none" stroke="#ffff00" stroke-width="1.2"/>
<polyline points="160.8,488.3 232,450" fill="none" stroke="#ffff00" stroke-width="1.2"/>
<text transform="translate(176,502) rotate(-90) scale(0.72,1)" fill="#ffff00" font-size="9" text-anchor="start" font-weight="bold">1FL+4250</text>
<text transform="translate(194,502) rotate(-90) scale(0.72,1)" fill="#ffff00" font-size="9" text-anchor="start" font-weight="bold">1FL+4250</text>
<text transform="translate(212,502) rotate(-90) scale(0.72,1)" fill="#ffff00" font-size="9" text-anchor="start" font-weight="bold">1FL+4250</text>
<text transform="translate(230,502) rotate(-90) scale(0.72,1)" fill="#ffff00" font-size="9" text-anchor="start" font-weight="bold">50 1FL+4250</text>
<text transform="translate(248,502) rotate(-90) scale(0.72,1)" fill="#ffff00" font-size="9" text-anchor="start" font-weight="bold">50 1FL+4250</text>
<text transform="translate(582,314) scale(0.82,1)" fill="#ffff00" font-size="9" text-anchor="start" font-weight="bold">50(SGP)   1FL+4450</text>
<text transform="translate(582,325.5) scale(0.82,1)" fill="#ffff00" font-size="9" text-anchor="start" font-weight="bold">25(Sch40) 1FL+3500</text>
<text transform="translate(582,336) scale(0.82,1)" fill="#ffff00" font-size="9" text-anchor="start" font-weight="bold">40(Sch40) 1FL+3500</text>
<text transform="translate(582,347) scale(0.82,1)" fill="#ffff00" font-size="9" text-anchor="start" font-weight="bold">32(Sch40) 1FL+3500</text>
<text transform="translate(582,357.4) scale(0.82,1)" fill="#ffff00" font-size="9" text-anchor="start" font-weight="bold">50(SGP)   1FL+4250</text>
<text transform="translate(582,369.3) scale(0.82,1)" fill="#ffff00" font-size="9" text-anchor="start" font-weight="bold">100(SGP)  1FL+3500</text>
<text transform="translate(582,387) scale(0.82,1)" fill="#ffff00" font-size="9" text-anchor="start" font-weight="bold">100(SGP)  1FL+3500</text>
<rect x="522" y="312" width="12" height="10" fill="#161616"/>
<text transform="translate(528,321) scale(0.72,1)" fill="#ffff00" font-size="10" text-anchor="middle" font-weight="bold">SP</text>
<rect x="515" y="323.5" width="26" height="10" fill="#161616"/>
<text transform="translate(528,332.5) scale(0.72,1)" fill="#ffff00" font-size="10" text-anchor="middle" font-weight="bold">FN-200</text>
<rect x="515" y="334.5" width="26" height="10" fill="#161616"/>
<text transform="translate(528,343.5) scale(0.72,1)" fill="#ffff00" font-size="10" text-anchor="middle" font-weight="bold">FN-200</text>
<rect x="515" y="345" width="26" height="10" fill="#161616"/>
<text transform="translate(528,354) scale(0.72,1)" fill="#ffff00" font-size="10" text-anchor="middle" font-weight="bold">FN-200</text>
<rect x="523" y="356" width="10" height="10" fill="#161616"/>
<text transform="translate(528,365) scale(0.72,1)" fill="#ffff00" font-size="10" text-anchor="middle" font-weight="bold">D</text>
<rect x="523" y="370.5" width="10" height="10" fill="#161616"/>
<text transform="translate(528,379.5) scale(0.72,1)" fill="#ffff00" font-size="10" text-anchor="middle" font-weight="bold">X</text>
<rect x="522" y="388.5" width="12" height="10" fill="#161616"/>
<text transform="translate(528,397.5) scale(0.72,1)" fill="#ffff00" font-size="10" text-anchor="middle" font-weight="bold">SP</text>
<text transform="translate(880,326) scale(0.78,1)" fill="#ffff00" font-size="9" text-anchor="start" font-weight="bold">1FL+3900</text>
<text transform="translate(880,335) scale(0.78,1)" fill="#ffff00" font-size="9" text-anchor="start" font-weight="bold">1FL+3900</text>
<text transform="translate(880,346) scale(0.78,1)" fill="#ffff00" font-size="9" text-anchor="start" font-weight="bold">1FL+3900</text>
<text transform="translate(1133,316) scale(0.8,1)" fill="#ffff00" font-size="9" text-anchor="start" font-weight="bold">50  1FL+4450</text>
<line x1="1048.8" y1="328.4" x2="1048.8" y2="546" stroke="#00ff00" stroke-width="1.7"/>
<line x1="1051.8" y1="328.4" x2="1051.8" y2="546" stroke="#00ff00" stroke-width="1.7"/>
<line x1="1050.3" y1="318" x2="1050.3" y2="546" stroke="#ffffff" stroke-width="1.8" stroke-dasharray="10 2.5 2.5 2.5"/>
<line x1="1019.4" y1="339.2" x2="1019.4" y2="546" stroke="#00ff00" stroke-width="1.7"/>
<line x1="1022.6" y1="339.2" x2="1022.6" y2="546" stroke="#00ff00" stroke-width="1.7"/>
<line x1="1021" y1="330" x2="1021" y2="546" stroke="#ffffff" stroke-width="1.8" stroke-dasharray="10 2.5 2.5 2.5"/>
<line x1="991.4" y1="349.5" x2="991.4" y2="546" stroke="#00ff00" stroke-width="1.7"/>
<line x1="994.6" y1="349.5" x2="994.6" y2="546" stroke="#00ff00" stroke-width="1.7"/>
<line x1="993" y1="340" x2="993" y2="546" stroke="#ffffff" stroke-width="1.8" stroke-dasharray="10 2.5 2.5 2.5"/>
<line x1="955" y1="360.3" x2="955" y2="572" stroke="#00ff00" stroke-width="1.7"/>
<line x1="959.4" y1="360.3" x2="959.4" y2="572" stroke="#00ff00" stroke-width="1.7"/>
<line x1="957.2" y1="352" x2="957.2" y2="572" stroke="#ffffff" stroke-width="1.8" stroke-dasharray="10 2.5 2.5 2.5"/>
<line x1="1040.3" y1="328.4" x2="1060.3" y2="328.4" stroke="#ffffff" stroke-width="1.5"/>
<line x1="1050.3" y1="318.4" x2="1050.3" y2="338.4" stroke="#ffffff" stroke-width="1.5"/>
<line x1="1011" y1="339.2" x2="1031" y2="339.2" stroke="#ffffff" stroke-width="1.5"/>
<line x1="1021" y1="329.2" x2="1021" y2="349.2" stroke="#ffffff" stroke-width="1.5"/>
<line x1="983" y1="349.5" x2="1003" y2="349.5" stroke="#ffffff" stroke-width="1.5"/>
<line x1="993" y1="339.5" x2="993" y2="359.5" stroke="#ffffff" stroke-width="1.5"/>
<line x1="947.2" y1="360.3" x2="967.2" y2="360.3" stroke="#ffffff" stroke-width="1.5"/>
<line x1="957.2" y1="350.3" x2="957.2" y2="370.3" stroke="#ffffff" stroke-width="1.5"/>
<rect x="954.2" y="407" width="6" height="13" fill="url(#hg)"/>
<rect x="990" y="407" width="6" height="13" fill="url(#hg)"/>
<rect x="1018" y="407" width="6" height="13" fill="url(#hg)"/>
<rect x="1047.3" y="407" width="6" height="13" fill="url(#hg)"/>
<rect x="964.4" y="425.2" width="176.8" height="48.7" fill="none" stroke="#00ff00" stroke-width="2.2"/>
<rect x="968.3" y="429" width="170.1" height="41.8" fill="none" stroke="#00ff00" stroke-width="1.5"/>
<path d="M970.0,443 q3,-12 12,-12 q10,0 13,12" fill="none" stroke="#00ff00" stroke-width="1.2"/>
<path d="M970.0,444 q0,-8 6,-8 h14 q6,0 6,6" fill="none" stroke="#e8e8e8" stroke-width="2.4"/>
<path d="M969.0,457 q0,8 6,9 h12 q6,0 7,-7 M974.0,461 h14 M972.0,455 h8" fill="none" stroke="#e8e8e8" stroke-width="2.6"/>
<line x1="970" y1="452" x2="994" y2="468" stroke="#00ff00" stroke-width="1.1"/>
<line x1="996" y1="429" x2="996" y2="470.8" stroke="#00ff00" stroke-width="1.1"/>
<path d="M998.5,443 q3,-12 12,-12 q10,0 13,12" fill="none" stroke="#00ff00" stroke-width="1.2"/>
<path d="M998.5,444 q0,-8 6,-8 h14 q6,0 6,6" fill="none" stroke="#e8e8e8" stroke-width="2.4"/>
<path d="M997.5,457 q0,8 6,9 h12 q6,0 7,-7 M1002.5,461 h14 M1000.5,455 h8" fill="none" stroke="#e8e8e8" stroke-width="2.6"/>
<line x1="998.5" y1="452" x2="1022.5" y2="468" stroke="#00ff00" stroke-width="1.1"/>
<line x1="1024.5" y1="429" x2="1024.5" y2="470.8" stroke="#00ff00" stroke-width="1.1"/>
<path d="M1027.0,443 q3,-12 12,-12 q10,0 13,12" fill="none" stroke="#00ff00" stroke-width="1.2"/>
<path d="M1027.0,444 q0,-8 6,-8 h14 q6,0 6,6" fill="none" stroke="#e8e8e8" stroke-width="2.4"/>
<path d="M1026.0,457 q0,8 6,9 h12 q6,0 7,-7 M1031.0,461 h14 M1029.0,455 h8" fill="none" stroke="#e8e8e8" stroke-width="2.6"/>
<line x1="1027" y1="452" x2="1051" y2="468" stroke="#00ff00" stroke-width="1.1"/>
<line x1="1053" y1="429" x2="1053" y2="470.8" stroke="#00ff00" stroke-width="1.1"/>
<path d="M1055.5,443 q3,-12 12,-12 q10,0 13,12" fill="none" stroke="#00ff00" stroke-width="1.2"/>
<path d="M1055.5,444 q0,-8 6,-8 h14 q6,0 6,6" fill="none" stroke="#e8e8e8" stroke-width="2.4"/>
<path d="M1054.5,457 q0,8 6,9 h12 q6,0 7,-7 M1059.5,461 h14 M1057.5,455 h8" fill="none" stroke="#e8e8e8" stroke-width="2.6"/>
<line x1="1055.5" y1="452" x2="1079.5" y2="468" stroke="#00ff00" stroke-width="1.1"/>
<line x1="1081.5" y1="429" x2="1081.5" y2="470.8" stroke="#00ff00" stroke-width="1.1"/>
<path d="M1084.0,443 q3,-12 12,-12 q10,0 13,12" fill="none" stroke="#00ff00" stroke-width="1.2"/>
<path d="M1084.0,444 q0,-8 6,-8 h14 q6,0 6,6" fill="none" stroke="#e8e8e8" stroke-width="2.4"/>
<path d="M1083.0,457 q0,8 6,9 h12 q6,0 7,-7 M1088.0,461 h14 M1086.0,455 h8" fill="none" stroke="#e8e8e8" stroke-width="2.6"/>
<line x1="1084" y1="452" x2="1108" y2="468" stroke="#00ff00" stroke-width="1.1"/>
<line x1="1110" y1="429" x2="1110" y2="470.8" stroke="#00ff00" stroke-width="1.1"/>
<path d="M1112.5,443 q3,-12 12,-12 q10,0 13,12" fill="none" stroke="#00ff00" stroke-width="1.2"/>
<path d="M1112.5,444 q0,-8 6,-8 h14 q6,0 6,6" fill="none" stroke="#e8e8e8" stroke-width="2.4"/>
<path d="M1111.5,457 q0,8 6,9 h12 q6,0 7,-7 M1116.5,461 h14 M1114.5,455 h8" fill="none" stroke="#e8e8e8" stroke-width="2.6"/>
<line x1="1112.5" y1="452" x2="1136.5" y2="468" stroke="#00ff00" stroke-width="1.1"/>
<line x1="1138.5" y1="429" x2="1138.5" y2="470.8" stroke="#00ff00" stroke-width="1.1"/>
<line x1="964.4" y1="444.9" x2="1143.6" y2="444.9" stroke="#ffff00" stroke-width="1.7"/>
<line x1="964.4" y1="454.1" x2="1143.6" y2="454.1" stroke="#ffff00" stroke-width="1.7"/>
<line x1="950" y1="449.5" x2="1175" y2="449.5" stroke="#ffffff" stroke-width="1.8" stroke-dasharray="10 2.5 2.5 2.5"/>
<rect x="962" y="443" width="7" height="13" fill="none" stroke="#ffff00" stroke-width="1.5"/>
<rect x="1138" y="443" width="7" height="13" fill="none" stroke="#ffff00" stroke-width="1.5"/>
<line x1="1145" y1="449.5" x2="1163" y2="449.5" stroke="#ffff00" stroke-width="1.5"/>
<circle cx="1159.3" cy="449.5" r="4.5" fill="none" stroke="#ffff00" stroke-width="1.3"/>
<line x1="1153.3" y1="449.5" x2="1165.3" y2="449.5" stroke="#ffffff" stroke-width="1.5"/>
<line x1="1159.3" y1="443.5" x2="1159.3" y2="455.5" stroke="#ffffff" stroke-width="1.5"/>
<polyline points="1153,447 1158,432.4 1207.4,432.4" fill="none" stroke="#ffff00" stroke-width="1.3"/>
<text transform="translate(1166,431) scale(0.72,1)" fill="#ffff00" font-size="9.5" text-anchor="start" font-weight="bold">80A(Sch40)</text>
<text transform="translate(1118,485) scale(0.8,1)" fill="#00ff00" font-size="8" text-anchor="start" font-weight="bold">冷却 H=100</text>
<rect x="978.5" y="516.4" width="85.7" height="36.1" fill="none" stroke="#00ff00" stroke-width="1.7"/>
<rect x="982.4" y="520.3" width="79.4" height="29.1" fill="none" stroke="#00ff00" stroke-width="1.3"/>
<rect x="1064.2" y="516.4" width="58.2" height="36.1" fill="none" stroke="#00ff00" stroke-width="1.7"/>
<rect x="1068" y="520.3" width="51" height="29.1" fill="none" stroke="#00ff00" stroke-width="1.3"/>
<line x1="973.8" y1="532.9" x2="1162.5" y2="532.9" stroke="#00ff00" stroke-width="1.7"/>
<line x1="973.8" y1="536.7" x2="1162.5" y2="536.7" stroke="#00ff00" stroke-width="1.7"/>
<line x1="953" y1="534.8" x2="1190" y2="534.8" stroke="#ffffff" stroke-width="1.8" stroke-dasharray="10 2.5 2.5 2.5"/>
<line x1="1157.2" y1="449.5" x2="1157.2" y2="536.8" stroke="#00ff00" stroke-width="1.7"/>
<line x1="1162.2" y1="449.5" x2="1162.2" y2="536.8" stroke="#00ff00" stroke-width="1.7"/>
<line x1="1159.7" y1="449.5" x2="1159.7" y2="536.8" stroke="#ffffff" stroke-width="1.8" stroke-dasharray="10 2.5 2.5 2.5"/>
<circle cx="993" cy="534.8" r="4" fill="none" stroke="#00ff00" stroke-width="1.5"/>
<line x1="983" y1="534.8" x2="1003" y2="534.8" stroke="#ffffff" stroke-width="1.5"/>
<line x1="993" y1="524.8" x2="993" y2="544.8" stroke="#ffffff" stroke-width="1.5"/>
<circle cx="1021" cy="534.8" r="4" fill="none" stroke="#00ff00" stroke-width="1.5"/>
<line x1="1011" y1="534.8" x2="1031" y2="534.8" stroke="#ffffff" stroke-width="1.5"/>
<line x1="1021" y1="524.8" x2="1021" y2="544.8" stroke="#ffffff" stroke-width="1.5"/>
<circle cx="1050.3" cy="534.8" r="4" fill="none" stroke="#00ff00" stroke-width="1.5"/>
<line x1="1040.3" y1="534.8" x2="1060.3" y2="534.8" stroke="#ffffff" stroke-width="1.5"/>
<line x1="1050.3" y1="524.8" x2="1050.3" y2="544.8" stroke="#ffffff" stroke-width="1.5"/>
<circle cx="1079.2" cy="534.8" r="4" fill="none" stroke="#00ff00" stroke-width="1.5"/>
<line x1="1069.2" y1="534.8" x2="1089.2" y2="534.8" stroke="#ffffff" stroke-width="1.5"/>
<line x1="1079.2" y1="524.8" x2="1079.2" y2="544.8" stroke="#ffffff" stroke-width="1.5"/>
<circle cx="1108.2" cy="534.8" r="4" fill="none" stroke="#00ff00" stroke-width="1.5"/>
<line x1="1098.2" y1="534.8" x2="1118.2" y2="534.8" stroke="#ffffff" stroke-width="1.5"/>
<line x1="1108.2" y1="524.8" x2="1108.2" y2="544.8" stroke="#ffffff" stroke-width="1.5"/>
<line x1="1077.9" y1="522.6" x2="1077.9" y2="581.7" stroke="#00ff00" stroke-width="1.7"/>
<line x1="1080.5" y1="522.6" x2="1080.5" y2="581.7" stroke="#00ff00" stroke-width="1.7"/>
<line x1="1079.2" y1="522.6" x2="1079.2" y2="581.7" stroke="#ffffff" stroke-width="1.8" stroke-dasharray="10 2.5 2.5 2.5"/>
<line x1="1106.9" y1="522.6" x2="1106.9" y2="592" stroke="#00ff00" stroke-width="1.7"/>
<line x1="1109.5" y1="522.6" x2="1109.5" y2="592" stroke="#00ff00" stroke-width="1.7"/>
<line x1="1108.2" y1="522.6" x2="1108.2" y2="592" stroke="#ffffff" stroke-width="1.8" stroke-dasharray="10 2.5 2.5 2.5"/>
<text transform="translate(991,515) rotate(-90) scale(0.72,1)" fill="#ffff00" font-size="9.5" text-anchor="start" font-weight="bold">32A(Sch40)</text>
<text transform="translate(1019,515) rotate(-90) scale(0.72,1)" fill="#ffff00" font-size="9.5" text-anchor="start" font-weight="bold">40A(Sch40)</text>
<text transform="translate(1048,515) rotate(-90) scale(0.72,1)" fill="#ffff00" font-size="9.5" text-anchor="start" font-weight="bold">25A(Sch40)</text>
<text transform="translate(1157,508) rotate(-90) scale(0.72,1)" fill="#ffff00" font-size="9.5" text-anchor="start" font-weight="bold">50A(Sch40)</text>
<text transform="translate(955,502) rotate(-90) scale(0.72,1)" fill="#ffff00" font-size="9.5" text-anchor="start" font-weight="bold">50 1FL+4250</text>
<line x1="831.6" y1="489.4" x2="928" y2="489.4" stroke="#8a8a8a" stroke-width="2.9"/>
<line x1="831.6" y1="507.7" x2="928" y2="507.7" stroke="#8a8a8a" stroke-width="2.9"/>
<line x1="831.6" y1="525.7" x2="928" y2="525.7" stroke="#8a8a8a" stroke-width="2.9"/>
<line x1="831.6" y1="544" x2="928" y2="544" stroke="#8a8a8a" stroke-width="2.9"/>
<line x1="831.6" y1="562" x2="928" y2="562" stroke="#8a8a8a" stroke-width="2.9"/>
<line x1="831.6" y1="421.6" x2="831.6" y2="563" stroke="#8a8a8a" stroke-width="1.7"/>
<line x1="927.9" y1="421.6" x2="927.9" y2="568" stroke="#8a8a8a" stroke-width="1.7"/>
<line x1="930.8" y1="421.6" x2="930.8" y2="568" stroke="#8a8a8a" stroke-width="1.5"/>
<line x1="831.6" y1="421.6" x2="930.8" y2="421.6" stroke="#8a8a8a" stroke-width="1.6"/>
<line x1="771.7" y1="462.9" x2="930" y2="462.9" stroke="#8a8a8a" stroke-width="1.6"/>
<line x1="935.8" y1="420" x2="935.8" y2="591" stroke="#9a9a9a" stroke-width="1.3" stroke-dasharray="10 2.5 2.5 2.5"/>
<line x1="942.6" y1="420" x2="942.6" y2="553" stroke="#8a8a8a" stroke-width="1.6"/>
<line x1="942.6" y1="477.6" x2="1000" y2="477.6" stroke="#8a8a8a" stroke-width="1.5"/>
<line x1="942.6" y1="553.2" x2="980" y2="553.2" stroke="#8a8a8a" stroke-width="1.5"/>
<line x1="928" y1="568" x2="1231" y2="568" stroke="#8a8a8a" stroke-width="1.6"/>
<polyline points="922,497 908,497 904,502 907,512" fill="none" stroke="#ffff00" stroke-width="1.5"/>
<text transform="translate(899,517) scale(0.8,1)" fill="#00ff00" font-size="9" text-anchor="start" font-weight="bold">C</text>
<text transform="translate(853,549) rotate(-90) scale(0.78,1)" fill="#ffff00" font-size="8.5" text-anchor="start" font-weight="bold">100(SGP)  1FL+3900</text>
<text transform="translate(878,549) rotate(-90) scale(0.78,1)" fill="#ffff00" font-size="8.5" text-anchor="start" font-weight="bold">100(SGP)  1FL+3900</text>
<text transform="translate(853,423) rotate(-90) scale(0.78,1)" fill="#ffff00" font-size="8" text-anchor="start" font-weight="bold">150A</text>
<text transform="translate(878,423) rotate(-90) scale(0.78,1)" fill="#ffff00" font-size="8" text-anchor="start" font-weight="bold">150A</text>
<line x1="1001.7" y1="576.9" x2="1080" y2="576.9" stroke="#00ff00" stroke-width="1.7"/>
<line x1="1001.7" y1="581.3" x2="1080" y2="581.3" stroke="#00ff00" stroke-width="1.7"/>
<line x1="985" y1="579.1" x2="1095" y2="579.1" stroke="#ffffff" stroke-width="1.8" stroke-dasharray="10 2.5 2.5 2.5"/>
<line x1="1011" y1="588.3" x2="1109" y2="588.3" stroke="#00ff00" stroke-width="1.7"/>
<line x1="1011" y1="592.3" x2="1109" y2="592.3" stroke="#00ff00" stroke-width="1.7"/>
<line x1="995" y1="590.3" x2="1125" y2="590.3" stroke="#ffffff" stroke-width="1.8" stroke-dasharray="10 2.5 2.5 2.5"/>
<text transform="translate(1045,574) scale(0.72,1)" fill="#ffff00" font-size="9.5" text-anchor="middle" font-weight="bold">50(Sch40)</text>
<text transform="translate(1045,587) scale(0.72,1)" fill="#ffff00" font-size="9.5" text-anchor="middle" font-weight="bold">32(Sch40)</text>
<line x1="992.7" y1="579.1" x2="1010.7" y2="579.1" stroke="#ffffff" stroke-width="1.5"/>
<line x1="1001.7" y1="570.1" x2="1001.7" y2="588.1" stroke="#ffffff" stroke-width="1.5"/>
<line x1="1002" y1="590.3" x2="1020" y2="590.3" stroke="#ffffff" stroke-width="1.5"/>
<line x1="1011" y1="581.3" x2="1011" y2="599.3" stroke="#ffffff" stroke-width="1.5"/>
<line x1="1071" y1="579.1" x2="1089" y2="579.1" stroke="#ffffff" stroke-width="1.5"/>
<line x1="1080" y1="570.1" x2="1080" y2="588.1" stroke="#ffffff" stroke-width="1.5"/>
<line x1="1100" y1="590.3" x2="1118" y2="590.3" stroke="#ffffff" stroke-width="1.5"/>
<line x1="1109" y1="581.3" x2="1109" y2="599.3" stroke="#ffffff" stroke-width="1.5"/>
<line x1="1000.4" y1="579.1" x2="1000.4" y2="883" stroke="#00ff00" stroke-width="1.7"/>
<line x1="1004.2" y1="579.1" x2="1004.2" y2="883" stroke="#00ff00" stroke-width="1.7"/>
<line x1="1002.3" y1="579.1" x2="1002.3" y2="883" stroke="#ffffff" stroke-width="1.8" stroke-dasharray="10 2.5 2.5 2.5"/>
<line x1="1010.3" y1="590.3" x2="1010.3" y2="883" stroke="#00ff00" stroke-width="1.7"/>
<line x1="1014.1" y1="590.3" x2="1014.1" y2="883" stroke="#00ff00" stroke-width="1.7"/>
<line x1="1012.2" y1="590.3" x2="1012.2" y2="883" stroke="#ffffff" stroke-width="1.8" stroke-dasharray="10 2.5 2.5 2.5"/>
<text transform="translate(999,752) rotate(-90) scale(0.72,1)" fill="#ffff00" font-size="9.5" text-anchor="start" font-weight="bold">50(Sch40)  1FL+3750</text>
<text transform="translate(1010,752) rotate(-90) scale(0.72,1)" fill="#ffff00" font-size="9.5" text-anchor="start" font-weight="bold">32(Sch40)  1FL+3750</text>
<polyline points="972.5,559 990,559 990,572 972.5,572" fill="none" stroke="#ffff00" stroke-width="1.5"/>
<line x1="948.2" y1="572" x2="966.2" y2="572" stroke="#ffffff" stroke-width="1.5"/>
<line x1="957.2" y1="563" x2="957.2" y2="581" stroke="#ffffff" stroke-width="1.5"/>
<line x1="843" y1="601.6" x2="1231.3" y2="601.6" stroke="#8a8a8a" stroke-width="1.8"/>
<line x1="843" y1="628.1" x2="1231" y2="628.1" stroke="#8a8a8a" stroke-width="1.8"/>
<line x1="943" y1="544.2" x2="1231" y2="544.2" stroke="#8a8a8a" stroke-width="1.5"/>
<line x1="943" y1="560.8" x2="1231" y2="560.8" stroke="#8a8a8a" stroke-width="1.5"/>
<line x1="943" y1="567" x2="1231" y2="567" stroke="#8a8a8a" stroke-width="1.5"/>
<line x1="883.6" y1="641.6" x2="941.5" y2="641.6" stroke="#ffff00" stroke-width="1.7"/>
<line x1="883.6" y1="650.4" x2="941.5" y2="650.4" stroke="#ffff00" stroke-width="1.7"/>
<line x1="870" y1="646" x2="955" y2="646" stroke="#ffffff" stroke-width="1.8" stroke-dasharray="10 2.5 2.5 2.5"/>
<rect x="963.3" y="616" width="143.7" height="72" fill="none" stroke="#8a8a8a" stroke-width="1.5"/>
<rect x="971.7" y="628.5" width="126" height="45.9" fill="none" stroke="#00ff00" stroke-width="1.7"/>
<rect x="976" y="633" width="117" height="37" fill="none" stroke="#00ff00" stroke-width="1.2"/>
<rect x="1038" y="630" width="22" height="40" rx="6" fill="none" stroke="#fff" stroke-width="2"/>
<line x1="985" y1="636" x2="1030" y2="636" stroke="#00ff00" stroke-width="1.5"/>
<line x1="985" y1="660" x2="1030" y2="660" stroke="#00ff00" stroke-width="1.5"/>
<line x1="1005" y1="640" x2="1005" y2="672" stroke="#00ff00" stroke-width="1.5"/>
<line x1="1065" y1="638" x2="1090" y2="638" stroke="#00ff00" stroke-width="1.5"/>
<line x1="1065" y1="655" x2="1090" y2="655" stroke="#00ff00" stroke-width="1.5"/>
<line x1="1070" y1="632" x2="1070" y2="670" stroke="#00ff00" stroke-width="1.5"/>
<line x1="995" y1="665" x2="1035" y2="665" stroke="#00ff00" stroke-width="1.5"/>
<line x1="1045" y1="625" x2="1060" y2="625" stroke="#00ff00" stroke-width="1.5"/>
<rect x="1020" y="640" width="16" height="15" fill="none" stroke="#00ff00" stroke-width="1.3"/>
<rect x="1064" y="641" width="20" height="11" fill="none" stroke="#00ff00" stroke-width="1.3"/>
<circle cx="1039" cy="645" r="5" fill="none" stroke="#00ff00" stroke-width="1.3"/>
<line x1="994.6" y1="641.6" x2="1203" y2="641.6" stroke="#ffff00" stroke-width="1.7"/>
<line x1="994.6" y1="650.4" x2="1203" y2="650.4" stroke="#ffff00" stroke-width="1.7"/>
<line x1="975" y1="646" x2="1215" y2="646" stroke="#ffffff" stroke-width="1.8" stroke-dasharray="10 2.5 2.5 2.5"/>
<line x1="1199" y1="646" x2="1199" y2="737.7" stroke="#ffff00" stroke-width="1.7"/>
<line x1="1207.4" y1="646" x2="1207.4" y2="737.7" stroke="#ffff00" stroke-width="1.7"/>
<line x1="1203.2" y1="636" x2="1203.2" y2="737.7" stroke="#ffffff" stroke-width="1.8" stroke-dasharray="10 2.5 2.5 2.5"/>
<line x1="1203.2" y1="733.4" x2="1361.7" y2="733.4" stroke="#ffff00" stroke-width="1.7"/>
<line x1="1203.2" y1="742" x2="1361.7" y2="742" stroke="#ffff00" stroke-width="1.7"/>
<line x1="1170" y1="737.7" x2="1380" y2="737.7" stroke="#ffffff" stroke-width="1.8" stroke-dasharray="10 2.5 2.5 2.5"/>
<rect x="1357" y="733.4" width="5" height="8.6" fill="none" stroke="#ffff00" stroke-width="1.3"/>
<text transform="translate(1121,642) scale(0.72,1)" fill="#ffff00" font-size="9.5" text-anchor="start" font-weight="bold">100(SGP)  1FL+3900</text>
<text transform="translate(1075,613) scale(0.85,1)" fill="#fff" font-size="8" text-anchor="start" font-weight="bold">消音 H=150</text>
<text transform="translate(1018,625) scale(0.8,1)" fill="#ffff00" font-size="8" text-anchor="start" font-weight="bold">屋内・消火栓ポンプユニット</text>
<polyline points="890,625.5 952.6,625.5 962,640" fill="none" stroke="#ffff00" stroke-width="1.3"/>
<text transform="translate(891,623) scale(0.8,1)" fill="#ffff00" font-size="8.5" text-anchor="start" font-weight="bold">オーバーフロー  50A</text>
<polyline points="884,673 930,673 945,678" fill="none" stroke="#ffff00" stroke-width="1.3"/>
<text transform="translate(885,671) scale(0.8,1)" fill="#ffff00" font-size="8.5" text-anchor="start" font-weight="bold">消火補給水  65A</text>
<line x1="943" y1="646" x2="961" y2="646" stroke="#ffffff" stroke-width="1.5"/>
<line x1="952" y1="637" x2="952" y2="655" stroke="#ffffff" stroke-width="1.5"/>
<line x1="956" y1="638" x2="974" y2="638" stroke="#ffffff" stroke-width="1.5"/>
<line x1="965" y1="629" x2="965" y2="647" stroke="#ffffff" stroke-width="1.5"/>
<line x1="943" y1="662" x2="961" y2="662" stroke="#ffffff" stroke-width="1.5"/>
<line x1="952" y1="653" x2="952" y2="671" stroke="#ffffff" stroke-width="1.5"/>
<line x1="951" y1="676" x2="969" y2="676" stroke="#ffffff" stroke-width="1.5"/>
<line x1="960" y1="667" x2="960" y2="685" stroke="#ffffff" stroke-width="1.5"/>
<circle cx="957" cy="651" r="6" fill="none" stroke="#00ff00" stroke-width="1.5"/>
<circle cx="958" cy="676" r="5" fill="none" stroke="#00ff00" stroke-width="1.5"/>
<rect x="1051" y="669.5" width="13.5" height="31.9" fill="url(#hw)"/>
<rect x="1049" y="700" width="17" height="5" fill="none" stroke="#00ff00" stroke-width="1.5"/>
<rect x="1045" y="711" width="25" height="6" fill="none" stroke="#fff" stroke-width="1.3"/>
<polygon points="1051,717 1063,717 1071,725 1071,737 1063,745 1051,745 1043,737 1043,725" fill="none" stroke="#00ff00" stroke-width="1.5"/>
<circle cx="1057" cy="731" r="6" fill="none" stroke="#ffff00" stroke-width="1.2"/>
<line x1="1044" y1="729" x2="1070" y2="729" stroke="#ffffff" stroke-width="1.5"/>
<line x1="1057" y1="716" x2="1057" y2="742" stroke="#ffffff" stroke-width="1.5"/>
<polyline points="1066,695 1117,695" fill="none" stroke="#ffff00" stroke-width="1.3"/>
<text transform="translate(1075,693) scale(0.75,1)" fill="#ffff00" font-size="8.5" text-anchor="start" font-weight="bold">F.JI25x500L</text>
<rect x="962.5" y="759" width="145" height="71.4" fill="none" stroke="#8a8a8a" stroke-width="1.5"/>
<rect x="972.3" y="774" width="124.1" height="52.7" fill="none" stroke="#00ff00" stroke-width="1.7"/>
<rect x="976" y="778" width="117" height="44" fill="none" stroke="#00ff00" stroke-width="1.2"/>
<rect x="1040" y="775" width="16" height="32" rx="5" fill="none" stroke="#fff" stroke-width="2"/>
<line x1="976" y1="785" x2="1035" y2="785" stroke="#00ff00" stroke-width="1.5"/>
<line x1="980" y1="800" x2="1035" y2="800" stroke="#00ff00" stroke-width="1.5"/>
<line x1="985" y1="815" x2="1035" y2="815" stroke="#00ff00" stroke-width="1.5"/>
<line x1="1060" y1="786" x2="1093" y2="786" stroke="#00ff00" stroke-width="1.5"/>
<line x1="1060" y1="800" x2="1080" y2="800" stroke="#00ff00" stroke-width="1.5"/>
<line x1="1065" y1="778" x2="1065" y2="822" stroke="#00ff00" stroke-width="1.5"/>
<line x1="1020" y1="778" x2="1020" y2="822" stroke="#00ff00" stroke-width="1.5"/>
<line x1="990" y1="775" x2="990" y2="822" stroke="#00ff00" stroke-width="1.5"/>
<rect x="1022" y="788" width="14" height="18" fill="none" stroke="#00ff00" stroke-width="1.3"/>
<rect x="1058" y="790" width="16" height="22" fill="none" stroke="#00ff00" stroke-width="1.3"/>
<line x1="962.5" y1="790" x2="985" y2="766" stroke="#8a8a8a" stroke-width="1.2"/>
<line x1="1085" y1="830" x2="1107" y2="808" stroke="#8a8a8a" stroke-width="1.2"/>
<polygon points="1085,795 1095,795 1100,803 1095,811 1085,811 1080,803" fill="none" stroke="#00ff00" stroke-width="1.5"/>
<line x1="1078" y1="803" x2="1102" y2="803" stroke="#ffffff" stroke-width="1.5"/>
<line x1="1090" y1="791" x2="1090" y2="815" stroke="#ffffff" stroke-width="1.5"/>
<text transform="translate(1017,770) scale(0.8,1)" fill="#ffff00" font-size="8" text-anchor="start" font-weight="bold">スプリンクラーポンプユニット</text>
<text transform="translate(1075,758) scale(0.85,1)" fill="#fff" font-size="8" text-anchor="start" font-weight="bold">消音 H=150</text>
<polyline points="880,795 950,795" fill="none" stroke="#ffff00" stroke-width="1.3"/>
<text transform="translate(881,793) scale(0.8,1)" fill="#ffff00" font-size="8.5" text-anchor="start" font-weight="bold">オーバーフロー  50A</text>
<polyline points="885,817 950,817" fill="none" stroke="#ffff00" stroke-width="1.3"/>
<text transform="translate(886,815) scale(0.8,1)" fill="#ffff00" font-size="8.5" text-anchor="start" font-weight="bold">消火補給水  50A</text>
<line x1="943" y1="790" x2="961" y2="790" stroke="#ffffff" stroke-width="1.5"/>
<line x1="952" y1="781" x2="952" y2="799" stroke="#ffffff" stroke-width="1.5"/>
<line x1="954" y1="783" x2="972" y2="783" stroke="#ffffff" stroke-width="1.5"/>
<line x1="963" y1="774" x2="963" y2="792" stroke="#ffffff" stroke-width="1.5"/>
<line x1="943" y1="806" x2="961" y2="806" stroke="#ffffff" stroke-width="1.5"/>
<line x1="952" y1="797" x2="952" y2="815" stroke="#ffffff" stroke-width="1.5"/>
<line x1="943" y1="817" x2="961" y2="817" stroke="#ffffff" stroke-width="1.5"/>
<line x1="952" y1="808" x2="952" y2="826" stroke="#ffffff" stroke-width="1.5"/>
<circle cx="970" cy="790" r="6" fill="none" stroke="#00ff00" stroke-width="1.5"/>
<text transform="translate(1071,822) scale(0.8,1)" fill="#ffff00" font-size="8.5" text-anchor="start" font-weight="bold">20A</text>
<line x1="858.3" y1="826.7" x2="1038.6" y2="826.7" stroke="#ffff00" stroke-width="1.7"/>
<line x1="858.3" y1="835.3" x2="1038.6" y2="835.3" stroke="#ffff00" stroke-width="1.7"/>
<line x1="845" y1="831" x2="1050" y2="831" stroke="#ffffff" stroke-width="1.8" stroke-dasharray="10 2.5 2.5 2.5"/>
<line x1="1034" y1="831" x2="1034" y2="883" stroke="#ffff00" stroke-width="1.7"/>
<line x1="1043.2" y1="831" x2="1043.2" y2="883" stroke="#ffff00" stroke-width="1.7"/>
<line x1="1038.6" y1="831" x2="1038.6" y2="883" stroke="#ffffff" stroke-width="1.8" stroke-dasharray="10 2.5 2.5 2.5"/>
<rect x="1062" y="807" width="6" height="29.5" fill="url(#hw)"/>
<rect x="1055" y="836" width="20" height="6" fill="none" stroke="#00ff00" stroke-width="1.5"/>
<rect x="1053" y="845" width="24" height="5" fill="none" stroke="#fff" stroke-width="1.3"/>
<polygon points="1059,850 1070,850 1077,857 1077,868 1070,875 1059,875 1052,868 1052,857" fill="none" stroke="#00ff00" stroke-width="1.5"/>
<line x1="1052.5" y1="862" x2="1076.5" y2="862" stroke="#ffffff" stroke-width="1.5"/>
<line x1="1064.5" y1="850" x2="1064.5" y2="874" stroke="#ffffff" stroke-width="1.5"/>
<polyline points="1068,825 1085,847 1141,847" fill="none" stroke="#ffff00" stroke-width="1.3"/>
<text transform="translate(1103,845) scale(0.75,1)" fill="#ffff00" font-size="8.5" text-anchor="start" font-weight="bold">F.J80X500L</text>
<polygon points="845,831 865,831 880,846 880,867 865,882 845,882 830,867 830,846" fill="url(#hc)" stroke="#8a8a8a" stroke-width="1.3"/>
<line x1="822" y1="857" x2="918" y2="857" stroke="#9a9a9a" stroke-width="1.3" stroke-dasharray="10 2.5 2.5 2.5"/>
<line x1="858" y1="825" x2="858" y2="883" stroke="#fff" stroke-width="1.3" stroke-dasharray="10 2.5 2.5 2.5"/>
<line x1="1205.6" y1="436" x2="1205.6" y2="615" stroke="#ffff00" stroke-width="1.7"/>
<line x1="1187.5" y1="436" x2="1205.6" y2="436" stroke="#ffff00" stroke-width="1.6"/>
<line x1="1187.5" y1="449" x2="1205.6" y2="449" stroke="#ffff00" stroke-width="1.6"/>
<line x1="1187.5" y1="532.5" x2="1205.6" y2="532.5" stroke="#ffff00" stroke-width="1.6"/>
<line x1="1187.5" y1="559.8" x2="1205.6" y2="559.8" stroke="#ffff00" stroke-width="1.6"/>
<line x1="1187.5" y1="578.5" x2="1205.6" y2="578.5" stroke="#ffff00" stroke-width="1.6"/>
<line x1="1187.5" y1="590" x2="1205.6" y2="590" stroke="#ffff00" stroke-width="1.6"/>
<line x1="1187.5" y1="615" x2="1205.6" y2="615" stroke="#ffff00" stroke-width="1.6"/>
<line x1="1141.5" y1="578.5" x2="1205.6" y2="578.5" stroke="#ffff00" stroke-width="1.6"/>
<line x1="1141.5" y1="590" x2="1205.6" y2="590" stroke="#ffff00" stroke-width="1.6"/>
<text transform="translate(1203,470) rotate(-90) scale(0.75,1)" fill="#ffff00" font-size="9.5" text-anchor="start" font-weight="bold">190</text>
<text transform="translate(1203,505) rotate(-90) scale(0.75,1)" fill="#ffff00" font-size="10" text-anchor="start" font-weight="bold">1,185</text>
<text transform="translate(1203,560) rotate(-90) scale(0.75,1)" fill="#ffff00" font-size="9.5" text-anchor="start" font-weight="bold">350</text>
<text transform="translate(1203,580) rotate(-90) scale(0.75,1)" fill="#ffff00" font-size="9.5" text-anchor="start" font-weight="bold">275</text>
<text transform="translate(1203,592) rotate(-90) scale(0.75,1)" fill="#ffff00" font-size="9.5" text-anchor="start" font-weight="bold">150</text>
<text transform="translate(1203,612) rotate(-90) scale(0.75,1)" fill="#ffff00" font-size="9.5" text-anchor="start" font-weight="bold">350</text>
<line x1="1414.3" y1="436" x2="1414.3" y2="646.7" stroke="#ffff00" stroke-width="1.7"/>
<line x1="1380" y1="436" x2="1414.3" y2="436" stroke="#ffff00" stroke-width="1.7"/>
<line x1="1238" y1="646.7" x2="1414.3" y2="646.7" stroke="#ffff00" stroke-width="1.7"/>
<text transform="translate(1411,560) rotate(-90) scale(0.75,1)" fill="#ffff00" font-size="10.5" text-anchor="start" font-weight="bold">2,925</text>
<line x1="1414.5" y1="646.7" x2="1414.5" y2="794.3" stroke="#ffff00" stroke-width="1.7"/>
<line x1="1380" y1="737.7" x2="1414.5" y2="737.7" stroke="#ffff00" stroke-width="1.7"/>
<line x1="1380" y1="794.3" x2="1414.5" y2="794.3" stroke="#ffff00" stroke-width="1.7"/>
<text transform="translate(1411,710) rotate(-90) scale(0.75,1)" fill="#ffff00" font-size="10" text-anchor="start" font-weight="bold">1275</text>
<text transform="translate(1411,775) rotate(-90) scale(0.75,1)" fill="#ffff00" font-size="10" text-anchor="start" font-weight="bold">800</text>
<polyline points="1203,756.7 1203,772.7 1261,772.7 1261,756.7" fill="none" stroke="#ffff00" stroke-width="1.6"/>
<text transform="translate(1232,771) scale(0.75,1)" fill="#ffff00" font-size="9.5" text-anchor="middle" font-weight="bold">800</text>
<line x1="719.8" y1="435.8" x2="719.8" y2="883" stroke="#ffff00" stroke-width="1.7"/>
<line x1="719.8" y1="435.8" x2="747.7" y2="435.8" stroke="#ffff00" stroke-width="1.7"/>
<line x1="719.8" y1="576.4" x2="840" y2="576.4" stroke="#ffff00" stroke-width="1.7"/>
<line x1="719.8" y1="646.7" x2="840" y2="646.7" stroke="#ffff00" stroke-width="1.7"/>
<line x1="719.8" y1="830.4" x2="840" y2="830.4" stroke="#ffff00" stroke-width="1.7"/>
<text transform="translate(717,515) rotate(-90) scale(0.75,1)" fill="#ffff00" font-size="10" text-anchor="start" font-weight="bold">1,560</text>
<text transform="translate(717,615) rotate(-90) scale(0.75,1)" fill="#ffff00" font-size="10" text-anchor="start" font-weight="bold">975</text>
<text transform="translate(717,748) rotate(-90) scale(0.75,1)" fill="#ffff00" font-size="10" text-anchor="start" font-weight="bold">2,574</text>
<text transform="translate(717,880) rotate(-90) scale(0.75,1)" fill="#ffff00" font-size="10" text-anchor="start" font-weight="bold">1,050</text>
<rect x="1219.4" y="445" width="11.9" height="53" fill="none" stroke="#00ff00" stroke-width="1.7"/>
<line x1="1219.4" y1="445" x2="1231.3" y2="498" stroke="#00ff00" stroke-width="1.3"/>
<polyline points="1231,481 1270,481" fill="none" stroke="#ffff00" stroke-width="1.3"/>
<text transform="translate(1245,479) scale(0.8,1)" fill="#ffff00" font-size="8" text-anchor="start" font-weight="bold">制御盤</text>
<rect x="1295" y="569.8" width="77" height="18" fill="none" stroke="#ffff00" stroke-width="1.7"/>
<text transform="translate(1298,578) scale(0.8,1)" fill="#ffff00" font-size="8" text-anchor="start" font-weight="bold">ポンプ室 制御盤</text>
<text transform="translate(1298,587) scale(0.8,1)" fill="#ffff00" font-size="9" text-anchor="start" font-weight="bold">P-22</text>
<polyline points="1219,542 1243,578 1295,578" fill="none" stroke="#ffff00" stroke-width="1.3"/>
<polyline points="1300,497 1310,497 1315,510" fill="none" stroke="#ffff00" stroke-width="1.5"/>
<text transform="translate(1317,513) scale(0.8,1)" fill="#00ff00" font-size="9" text-anchor="start" font-weight="bold">C'</text>
<polyline points="1118,376.7 1134.7,376.7 1134.7,391.2" fill="none" stroke="#ffff00" stroke-width="1.6"/>
<text transform="translate(1122,372) scale(0.8,1)" fill="#00ff00" font-size="9" text-anchor="start" font-weight="bold">B</text>
<polyline points="1209.2,391.7 1209.2,377 1225.8,377" fill="none" stroke="#ffff00" stroke-width="1.6"/>
<text transform="translate(1212,372) scale(0.8,1)" fill="#00ff00" font-size="9" text-anchor="start" font-weight="bold">A</text>
<polyline points="1141,583 1150,583 1150,570" fill="none" stroke="#ffff00" stroke-width="1.5"/>
<text transform="translate(1118,600) scale(0.8,1)" fill="#00ff00" font-size="9" text-anchor="start" font-weight="bold">B'</text>
<polyline points="1212,570 1212,583 1222,583" fill="none" stroke="#ffff00" stroke-width="1.5"/>
<text transform="translate(1212,600) scale(0.8,1)" fill="#00ff00" font-size="9" text-anchor="start" font-weight="bold">A'</text>
<line x1="1234" y1="367.5" x2="1287.5" y2="367.5" stroke="#8a8a8a" stroke-width="1.6"/>
<line x1="1234" y1="381.3" x2="1287.5" y2="381.3" stroke="#8a8a8a" stroke-width="1.6"/>
<text transform="translate(1261,365) scale(0.8,1)" fill="#9a9a9a" font-size="8" text-anchor="middle">740</text>
<line x1="535.5" y1="518" x2="535.5" y2="613.5" stroke="#fff" stroke-width="1.5"/>
<line x1="487.2" y1="565.3" x2="583.2" y2="565.3" stroke="#fff" stroke-width="1.5"/>
<line x1="87" y1="802" x2="87" y2="863" stroke="#fff" stroke-width="1.3"/>
<line x1="87" y1="863" x2="148.5" y2="863" stroke="#fff" stroke-width="1.3"/>
<rect x="82" y="857.5" width="11.7" height="11" fill="none" stroke="#fff" stroke-width="1.5"/>
<polyline points="89,782 96.5,790 104,782" fill="none" stroke="#fff" stroke-width="1.3"/>
<line x1="96.5" y1="790" x2="96.5" y2="797" stroke="#fff" stroke-width="1.3"/>
<line x1="153.8" y1="847" x2="169.3" y2="862.4" stroke="#fff" stroke-width="1.3"/>
<line x1="169.3" y1="847" x2="153.8" y2="862.4" stroke="#fff" stroke-width="1.3"/>
<circle cx="1370" cy="239" r="54.4" fill="none" stroke="#5c5c5c" stroke-width="12" opacity="0.72"/>
<rect x="1344" y="213" width="52" height="51.6" fill="#a9a9a9"/>
<rect x="1354" y="223" width="32" height="32" fill="#8f8f8f"/>
<text transform="translate(1370,251) scale(1,1)" fill="#4e4e4e" font-size="30" text-anchor="middle">上</text>
<text transform="translate(1370,190) scale(1,1)" fill="#b0b0b0" font-size="19" text-anchor="middle">北</text>
<text transform="translate(1370,305) scale(1,1)" fill="#b0b0b0" font-size="19" text-anchor="middle">南</text>
<text transform="translate(1312,247) scale(1,1)" fill="#b0b0b0" font-size="19" text-anchor="middle">西</text>
<text transform="translate(1427,247) scale(1,1)" fill="#b0b0b0" font-size="19" text-anchor="middle">東</text>
<rect x="1342.5" y="329.5" width="52" height="19" rx="6" fill="#6e6e76" stroke="#9a9aa2" stroke-width="1.2"/>
<text transform="translate(1361,343.5) scale(1,1)" fill="#c4c4c8" font-size="11.5" text-anchor="middle">WCS</text>
<path d="M1379,336 h9 l-4.5,5 z" fill="none" stroke="#a8a8b0" stroke-width="1"/>
<text x="72" y="176.5" fill="#c8c8c8" font-size="15" textLength="191" lengthAdjust="spacingAndGlyphs">[−][平面図][2D ワイヤフレーム]</text>
<line x1="325" y1="427" x2="325" y2="446" stroke="#8a8a8a" stroke-width="2.5"/>
<line x1="358.2" y1="427" x2="358.2" y2="446" stroke="#8a8a8a" stroke-width="2.5"/>
<line x1="325" y1="436.4" x2="358.2" y2="436.4" stroke="#8a8a8a" stroke-width="1.5"/>
<line x1="332.5" y1="419.2" x2="351" y2="419.2" stroke="#8a8a8a" stroke-width="2.5"/>
<line x1="332.5" y1="452.3" x2="351" y2="452.3" stroke="#8a8a8a" stroke-width="2.5"/>
<line x1="341.7" y1="419" x2="341.7" y2="453" stroke="#8a8a8a" stroke-width="1.8"/>
<line x1="313" y1="464.3" x2="370.5" y2="464.3" stroke="#8a8a8a" stroke-width="1.6"/>
<line x1="313" y1="406.9" x2="313" y2="464.3" stroke="#8a8a8a" stroke-width="1.6"/>
<line x1="370.5" y1="406.9" x2="370.5" y2="464.3" stroke="#8a8a8a" stroke-width="1.6"/>
<line x1="297" y1="420" x2="312" y2="407" stroke="#8a8a8a" stroke-width="1.2"/>
<line x1="300" y1="420" x2="315" y2="407" stroke="#8a8a8a" stroke-width="1.2"/>
<line x1="354" y1="464" x2="369" y2="451" stroke="#8a8a8a" stroke-width="1.2"/>
<line x1="357" y1="464" x2="372" y2="451" stroke="#8a8a8a" stroke-width="1.2"/>
<rect x="318" y="315.5" width="47" height="4.5" fill="url(#hgr)"/>
<rect x="777" y="315.5" width="49" height="4.5" fill="url(#hgr)"/>
<rect x="1237" y="315.5" width="49" height="4.5" fill="url(#hgr)"/>
<rect x="318" y="358.5" width="47" height="4" fill="url(#hgr)"/>
<rect x="777" y="358.5" width="49" height="4" fill="url(#hgr)"/>
<text transform="translate(531,262) rotate(-90) scale(0.8,1)" fill="#9a9a9a" font-size="7" text-anchor="start">340</text>
<text transform="translate(557,262) rotate(-90) scale(0.8,1)" fill="#9a9a9a" font-size="7" text-anchor="start">340</text>
<text transform="translate(531,290) rotate(-90) scale(0.8,1)" fill="#9a9a9a" font-size="7" text-anchor="start">100</text>
<text transform="translate(1037,262) rotate(-90) scale(0.8,1)" fill="#9a9a9a" font-size="7" text-anchor="start">350</text>
<text transform="translate(1067,262) rotate(-90) scale(0.8,1)" fill="#9a9a9a" font-size="7" text-anchor="start">450</text>
<text transform="translate(1037,292) rotate(-90) scale(0.8,1)" fill="#9a9a9a" font-size="7" text-anchor="start">100</text>
<line x1="772" y1="657" x2="785.5" y2="642" stroke="#8a8a8a" stroke-width="1.2"/>
<line x1="772" y1="660" x2="785.5" y2="645" stroke="#8a8a8a" stroke-width="1.2"/>
<line x1="772" y1="750" x2="785.5" y2="735" stroke="#8a8a8a" stroke-width="1.2"/>
<line x1="772" y1="753" x2="785.5" y2="738" stroke="#8a8a8a" stroke-width="1.2"/>
<line x1="772" y1="852" x2="785.5" y2="837" stroke="#8a8a8a" stroke-width="1.2"/>
<line x1="772" y1="855" x2="785.5" y2="840" stroke="#8a8a8a" stroke-width="1.2"/>
<text transform="translate(257,545) scale(0.8,1)" fill="#ffff00" font-size="8.5" text-anchor="middle" font-weight="bold">32(Sch40)</text>
<text transform="translate(257,555.5) scale(0.8,1)" fill="#ffff00" font-size="8.5" text-anchor="middle" font-weight="bold">40(Sch40)</text>
<text transform="translate(257,566) scale(0.8,1)" fill="#ffff00" font-size="8.5" text-anchor="middle" font-weight="bold">25(Sch40)</text>
</svg></div>

<script>
document.querySelectorAll('.ft').forEach(function(e){var w=parseFloat(e.style.getPropertyValue('--w'));var n=e.offsetWidth;if(w>0&&n>0){e.style.transform='scaleX('+(w/n)+')';}});
</script>
</body></html>
